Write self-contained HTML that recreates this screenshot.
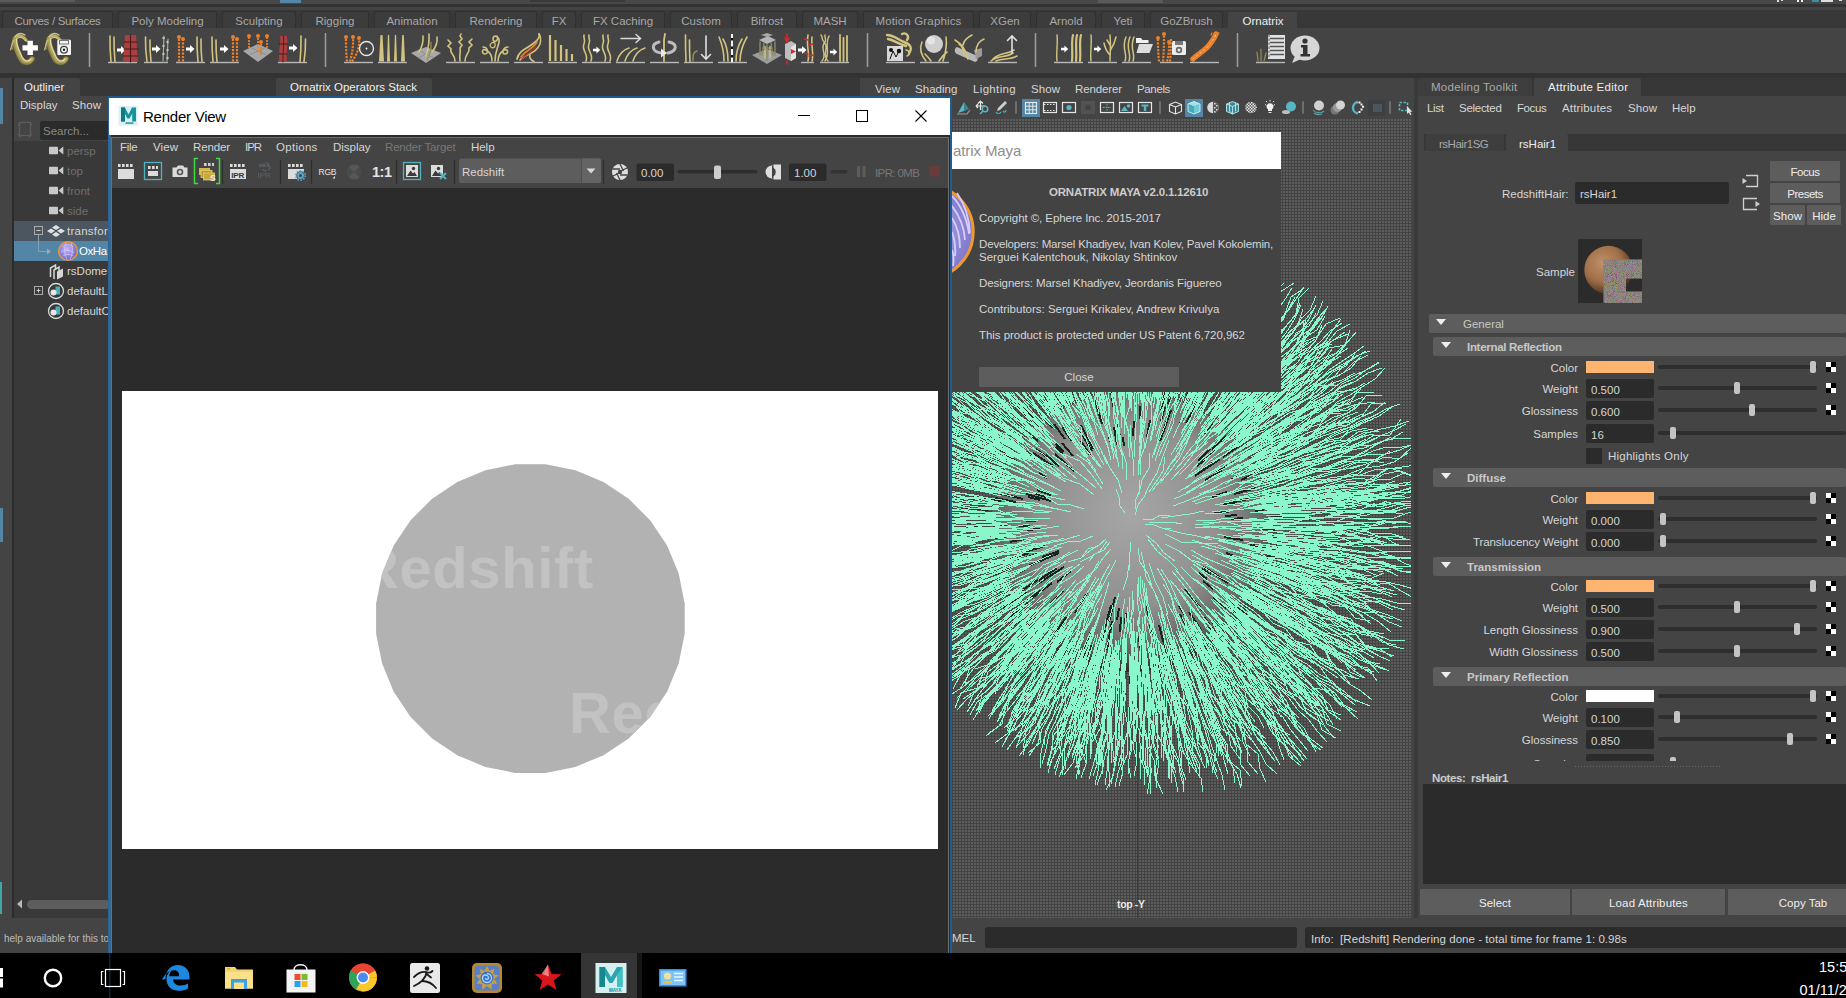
<!DOCTYPE html><html><head><meta charset="utf-8"><title>Maya</title><style>
*{box-sizing:border-box;margin:0;padding:0}
html,body{width:1846px;height:998px;overflow:hidden;background:#444;}
body{font-family:"Liberation Sans",sans-serif;font-size:12px;color:#ddd;position:relative}
.a{position:absolute}
.t{position:absolute;white-space:pre;line-height:14px;font-size:11.5px;color:#d6d6d6}
.dim{color:#9a9a9a}
.tab{position:absolute;background:#393939;border-radius:2px 2px 0 0;height:20px}
.fld{position:absolute;background:#2b2b2b;border-radius:2px;height:20px}
.sl{position:absolute;height:4px;background:#2e2e2e;border-radius:2px}
.kn{position:absolute;width:6px;height:12px;background:#c4c4c4;border-radius:2px}
.sec{position:absolute;background:#5d5d5d;height:19px;border-radius:2px}
.btn{position:absolute;background:#5d5d5d;border-radius:1px}
.chk{position:absolute;width:10px;height:10px;background:#fff}
.chk:before,.chk:after{content:"";position:absolute;width:5px;height:5px;background:#000}
.chk:before{left:5px;top:0}.chk:after{left:0;top:5px}
</style></head><body>
<div class="a" style="left:0px;top:0px;width:1846px;height:4px;background:#484848;"></div>
<div class="a" style="left:0px;top:4px;width:1846px;height:3px;background:#333;"></div>
<div class="a" style="left:0px;top:7px;width:1846px;height:3px;background:#444;"></div>
<div class="a" style="left:0px;top:10px;width:1846px;height:18px;background:#383838;"></div>
<div class="a" style="left:1777px;top:0px;width:2px;height:2px;background:#ddd;"></div>
<div class="a" style="left:1781px;top:0px;width:2px;height:1px;background:#ddd;"></div>
<div class="a" style="left:1797px;top:0px;width:2px;height:2px;background:#eee;"></div>
<div class="a" style="left:1801px;top:0px;width:2px;height:2px;background:#eee;"></div>
<div class="a" style="left:1812px;top:0px;width:7px;height:2px;background:#3f8ea0;"></div>
<div class="a" style="left:1821px;top:0px;width:12px;height:2px;background:#ddd;"></div>
<div class="a" style="left:1839px;top:0px;width:3px;height:1px;background:#ddd;"></div>
<div class="a" style="left:0px;top:0px;width:75px;height:2px;background:#5a5a5a;"></div>
<div class="a" style="left:280px;top:0px;width:21px;height:3px;background:#5285a6;"></div>
<div class="a" style="left:530px;top:0px;width:95px;height:2px;background:#3a3a3a;"></div>
<div class="a" style="left:1098px;top:0px;width:65px;height:3px;background:#5a5a5a;"></div>
<div class="tab" style="left:3px;top:12px;width:109px;height:16px;background:#3c3c3c;box-shadow:0 0 0 1px #303030"></div>
<div class="t dim" style="left:3px;top:14px;width:109px;text-align:center;color:#a8a8a8;letter-spacing:-0.32px">Curves / Surfaces</div>
<div class="tab" style="left:119px;top:12px;width:97px;height:16px;background:#3c3c3c;box-shadow:0 0 0 1px #303030"></div>
<div class="t dim" style="left:119px;top:14px;width:97px;text-align:center;color:#a8a8a8">Poly Modeling</div>
<div class="tab" style="left:223px;top:12px;width:72px;height:16px;background:#3c3c3c;box-shadow:0 0 0 1px #303030"></div>
<div class="t dim" style="left:223px;top:14px;width:72px;text-align:center;color:#a8a8a8">Sculpting</div>
<div class="tab" style="left:302px;top:12px;width:66px;height:16px;background:#3c3c3c;box-shadow:0 0 0 1px #303030"></div>
<div class="t dim" style="left:302px;top:14px;width:66px;text-align:center;color:#a8a8a8">Rigging</div>
<div class="tab" style="left:375px;top:12px;width:74px;height:16px;background:#3c3c3c;box-shadow:0 0 0 1px #303030"></div>
<div class="t dim" style="left:375px;top:14px;width:74px;text-align:center;color:#a8a8a8">Animation</div>
<div class="tab" style="left:456px;top:12px;width:80px;height:16px;background:#3c3c3c;box-shadow:0 0 0 1px #303030"></div>
<div class="t dim" style="left:456px;top:14px;width:80px;text-align:center;color:#a8a8a8">Rendering</div>
<div class="tab" style="left:543px;top:12px;width:32px;height:16px;background:#3c3c3c;box-shadow:0 0 0 1px #303030"></div>
<div class="t dim" style="left:543px;top:14px;width:32px;text-align:center;color:#a8a8a8">FX</div>
<div class="tab" style="left:582px;top:12px;width:82px;height:16px;background:#3c3c3c;box-shadow:0 0 0 1px #303030"></div>
<div class="t dim" style="left:582px;top:14px;width:82px;text-align:center;color:#a8a8a8">FX Caching</div>
<div class="tab" style="left:671px;top:12px;width:60px;height:16px;background:#3c3c3c;box-shadow:0 0 0 1px #303030"></div>
<div class="t dim" style="left:671px;top:14px;width:60px;text-align:center;color:#a8a8a8">Custom</div>
<div class="tab" style="left:738px;top:12px;width:58px;height:16px;background:#3c3c3c;box-shadow:0 0 0 1px #303030"></div>
<div class="t dim" style="left:738px;top:14px;width:58px;text-align:center;color:#a8a8a8">Bifrost</div>
<div class="tab" style="left:803px;top:12px;width:54px;height:16px;background:#3c3c3c;box-shadow:0 0 0 1px #303030"></div>
<div class="t dim" style="left:803px;top:14px;width:54px;text-align:center;color:#a8a8a8">MASH</div>
<div class="tab" style="left:864px;top:12px;width:109px;height:16px;background:#3c3c3c;box-shadow:0 0 0 1px #303030"></div>
<div class="t dim" style="left:864px;top:14px;width:109px;text-align:center;color:#a8a8a8;letter-spacing:0.15px">Motion Graphics</div>
<div class="tab" style="left:980px;top:12px;width:50px;height:16px;background:#3c3c3c;box-shadow:0 0 0 1px #303030"></div>
<div class="t dim" style="left:980px;top:14px;width:50px;text-align:center;color:#a8a8a8">XGen</div>
<div class="tab" style="left:1037px;top:12px;width:58px;height:16px;background:#3c3c3c;box-shadow:0 0 0 1px #303030"></div>
<div class="t dim" style="left:1037px;top:14px;width:58px;text-align:center;color:#a8a8a8">Arnold</div>
<div class="tab" style="left:1102px;top:12px;width:42px;height:16px;background:#3c3c3c;box-shadow:0 0 0 1px #303030"></div>
<div class="t dim" style="left:1102px;top:14px;width:42px;text-align:center;color:#a8a8a8">Yeti</div>
<div class="tab" style="left:1151px;top:12px;width:71px;height:16px;background:#3c3c3c;box-shadow:0 0 0 1px #303030"></div>
<div class="t dim" style="left:1151px;top:14px;width:71px;text-align:center;color:#a8a8a8">GoZBrush</div>
<div class="tab" style="left:1228px;top:12px;width:69px;height:17px;background:#444"></div>
<div class="t " style="left:1229px;top:14px;width:68px;text-align:center;color:#eee">Ornatrix</div>
<div class="a" style="left:0px;top:28px;width:1846px;height:45px;background:#444;"></div>
<div class="a" style="left:0px;top:73px;width:1846px;height:5px;background:#323232;"></div>
<svg class="a" style="left:0;top:28px" width="1400" height="44" viewBox="0 28 1400 44"><g transform="translate(0,28)"><path d="M15 11C14 18 18 24 20 29C22 34 28 37 32 31" fill="none" stroke="#6f6a3a" stroke-width="5.8" stroke-linecap="round" /><path d="M15 11C14 18 18 24 20 29C22 34 28 37 32 31" fill="none" stroke="#b0a460" stroke-width="4.0" stroke-linecap="round" /><path d="M16.5 11C16 18 20 24 22 29C24 33 28 35 31 31" fill="none" stroke="#e6dc9c" stroke-width="1.3" stroke-linecap="round" /><path d="M13.5 12C13 18 16 24 18.5 29C20.5 34 25 37 29 35" fill="none" stroke="#8d8548" stroke-width="1.1" stroke-linecap="round" /><path d="M15 10C18 6.500 23 7 26.5 12.500" fill="none" stroke="#b9ad68" stroke-width="2.6" stroke-linecap="round" /><path d="M15 8.500C18 5 22 5 25 7" fill="none" stroke="#cfc584" stroke-width="1.4" stroke-linecap="round" /><path d="M17 10.500C20 8.500 23 9.500 25.5 13" fill="none" stroke="#e6dc9c" stroke-width="1.0" stroke-linecap="round" /><path d="M15 10C12 13 11.5 17 12 21" fill="none" stroke="#a89d5c" stroke-width="1.5" stroke-linecap="round" /><path d="M14 12C12 16 11 19 10.5 22" fill="none" stroke="#cfc584" stroke-width="1.0" stroke-linecap="round" /><path d="M22.500 17.300h5v-4.500h5.400v4.500h5v5.200h-5v4.500h-5.400v-4.500h-5z" fill="#fff" /><path d="M49 11C48 18 52 24 54 29C56 34 62 37 66 31" fill="none" stroke="#6f6a3a" stroke-width="5.8" stroke-linecap="round" /><path d="M49 11C48 18 52 24 54 29C56 34 62 37 66 31" fill="none" stroke="#b0a460" stroke-width="4.0" stroke-linecap="round" /><path d="M50.5 11C50 18 54 24 56 29C58 33 62 35 65 31" fill="none" stroke="#e6dc9c" stroke-width="1.3" stroke-linecap="round" /><path d="M47.5 12C47 18 50 24 52.5 29C54.5 34 59 37 63 35" fill="none" stroke="#8d8548" stroke-width="1.1" stroke-linecap="round" /><path d="M49 10C52 6.500 57 7 60.5 12.500" fill="none" stroke="#b9ad68" stroke-width="2.6" stroke-linecap="round" /><path d="M49 8.500C52 5 56 5 59 7" fill="none" stroke="#cfc584" stroke-width="1.4" stroke-linecap="round" /><path d="M51 10.500C54 8.500 57 9.500 59.5 13" fill="none" stroke="#e6dc9c" stroke-width="1.0" stroke-linecap="round" /><path d="M49 10C46 13 45.5 17 46 21" fill="none" stroke="#a89d5c" stroke-width="1.5" stroke-linecap="round" /><path d="M48 12C46 16 45 19 44.5 22" fill="none" stroke="#cfc584" stroke-width="1.0" stroke-linecap="round" /><rect x="57.300" y="11.700" width="13.700" height="15.200" rx="1" fill="#f4f4f4"/><rect x="59.500" y="12.500" width="9" height="3.500" fill="none" stroke="#666" stroke-width=".900"/><circle cx="64" cy="21.800" r="3.400" fill="none" stroke="#444" stroke-width="1.300"/><circle cx="64" cy="21.800" r="1.200" fill="#222"/><path d="M89.5 5V39" stroke="#9a9a9a" stroke-width="1.6"/><path d="M108 34.5H137" stroke="#b8b8b8" stroke-width="1.4"/><path d="M111 33.5Q109.8 20.75 110 8" fill="none" stroke="#d2c37e" stroke-width="1.6" stroke-linecap="round" /><path d="M115 33.5Q113.8 21.25 114 9" fill="none" stroke="#d2c37e" stroke-width="1.6" stroke-linecap="round" /><path d="M117 20.5h4.0v-2.5l4.5 4.0l-4.5 4.0v-2.5h-4.0z" fill="#fff" /><path d="M125 7h11l2 27h-15z" fill="#a9403f" /><path d="M124 14h13M124 21h14M123.5 28h14.5M130.5 7v27" fill="none" stroke="#4a1818" stroke-width="1.1" stroke-linecap="round" /><path d="M144 34.5H168" stroke="#b8b8b8" stroke-width="1.4"/><path d="M147 33.5Q145.2 21.25 145.5 9" fill="none" stroke="#d2c37e" stroke-width="1.6" stroke-linecap="round" /><path d="M151 33.5Q149.8 22.75 150 12" fill="none" stroke="#d2c37e" stroke-width="1.6" stroke-linecap="round" /><path d="M152 19.5h4.0v-2.5l4.5 4.0l-4.5 4.0v-2.5h-4.0z" fill="#fff" /><path d="M163 33L164 8M167 33L168 11" fill="none" stroke="#9cb39a" stroke-width="1.2" stroke-linecap="round" /><circle cx="163.5" cy="10" r="1.2" fill="#b8cdb6"/><circle cx="167.5" cy="14" r="1.2" fill="#b8cdb6"/><circle cx="163.5" cy="18" r="1.2" fill="#b8cdb6"/><circle cx="167.5" cy="22" r="1.2" fill="#b8cdb6"/><circle cx="163.5" cy="26" r="1.2" fill="#b8cdb6"/><circle cx="167.5" cy="30" r="1.2" fill="#b8cdb6"/><path d="M176 34.5H205" stroke="#b8b8b8" stroke-width="1.4"/><path d="M179 33.5Q179.0 21.25 179 9" fill="none" stroke="#e8802c" stroke-width="2.2"  stroke-dasharray="2.2 1.2" stroke-linecap="butt"/><circle cx="179" cy="9" r="2" fill="#e8802c"/><path d="M183 33.5Q183.0 22.25 183 11" fill="none" stroke="#e8802c" stroke-width="2.2"  stroke-dasharray="2.2 1.2" stroke-linecap="butt"/><circle cx="183" cy="11" r="2" fill="#e8802c"/><path d="M186 19.5h4.0v-2.5l4.5 4.0l-4.5 4.0v-2.5h-4.0z" fill="#fff" /><path d="M198 33.5Q196.8 21.25 197 9" fill="none" stroke="#d2c37e" stroke-width="1.6" stroke-linecap="round" /><path d="M202 33.5Q200.8 22.25 201 11" fill="none" stroke="#d2c37e" stroke-width="1.6" stroke-linecap="round" /><path d="M210 34.5H239" stroke="#b8b8b8" stroke-width="1.4"/><path d="M213 33.5Q211.8 21.25 212 9" fill="none" stroke="#d2c37e" stroke-width="1.6" stroke-linecap="round" /><path d="M217 33.5Q215.8 22.75 216 12" fill="none" stroke="#d2c37e" stroke-width="1.6" stroke-linecap="round" /><path d="M220 19.5h4.0v-2.5l4.5 4.0l-4.5 4.0v-2.5h-4.0z" fill="#fff" /><path d="M233 33.5Q233.0 21.25 233 9" fill="none" stroke="#e8802c" stroke-width="2.2"  stroke-dasharray="2.2 1.2" stroke-linecap="butt"/><circle cx="233" cy="9" r="2" fill="#e8802c"/><path d="M237 33.5Q237.0 22.25 237 11" fill="none" stroke="#e8802c" stroke-width="2.2"  stroke-dasharray="2.2 1.2" stroke-linecap="butt"/><circle cx="237" cy="11" r="2" fill="#e8802c"/><path d="M243 23l15 -7l15 7l-15 11z" fill="#a6a6a6" /><path d="M250.5 19.5l15 7M265.5 19.5l-15 7" fill="none" stroke="#888" stroke-width="0.8" stroke-linecap="round" /><path d="M249 20V8" fill="none" stroke="#e8802c" stroke-width="1.8"  stroke-dasharray="2 1" stroke-linecap="butt"/><circle cx="249" cy="8" r="2" fill="#e8802c"/><path d="M258 24V8" fill="none" stroke="#e8802c" stroke-width="1.8"  stroke-dasharray="2 1" stroke-linecap="butt"/><circle cx="258" cy="8" r="2" fill="#e8802c"/><path d="M267 20V8" fill="none" stroke="#e8802c" stroke-width="1.8"  stroke-dasharray="2 1" stroke-linecap="butt"/><circle cx="267" cy="8" r="2" fill="#e8802c"/><path d="M261 27V14" fill="none" stroke="#e8802c" stroke-width="1.8"  stroke-dasharray="2 1" stroke-linecap="butt"/><circle cx="261" cy="14" r="2" fill="#e8802c"/><path d="M278 34.5H307" stroke="#b8b8b8" stroke-width="1.4"/><path d="M280 8h7c1 8 -1 17 0 26h-8c-1 -9 2 -18 1 -26z" fill="#a9403f" /><path d="M279 16h8.5M279 26h8" fill="none" stroke="#4a1818" stroke-width="1.1" stroke-linecap="round" /><path d="M283.5 8c1 8 -1 17 -0.5 26" fill="none" stroke="#4a1818" stroke-width="0.9" stroke-linecap="round" /><path d="M289 18.5h4.0v-2.5l4.5 4.0l-4.5 4.0v-2.5h-4.0z" fill="#fff" /><path d="M300 33.5Q301.2 20.75 301 8" fill="none" stroke="#d2c37e" stroke-width="1.6" stroke-linecap="round" /><path d="M304 33.5Q305.8 22.25 305.5 11" fill="none" stroke="#d2c37e" stroke-width="1.6" stroke-linecap="round" /><path d="M325.5 5V39" stroke="#9a9a9a" stroke-width="1.6"/><path d="M344 34.5H373" stroke="#b8b8b8" stroke-width="1.4"/><path d="M347 33.5Q345.8 21.25 346 9" fill="none" stroke="#e8802c" stroke-width="2.2"  stroke-dasharray="2.2 1.2" stroke-linecap="butt"/><circle cx="346" cy="9" r="2" fill="#e8802c"/><path d="M350 33.5Q353.6 21.25 353 9" fill="none" stroke="#e8802c" stroke-width="2.2"  stroke-dasharray="2.2 1.2" stroke-linecap="butt"/><circle cx="353" cy="9" r="2" fill="#e8802c"/><path d="M352 33.5Q360.4 21.75 359 10" fill="none" stroke="#e8802c" stroke-width="2.2"  stroke-dasharray="2.2 1.2" stroke-linecap="butt"/><circle cx="359" cy="10" r="2" fill="#e8802c"/><circle cx="366.5" cy="20.5" r="7" fill="none" stroke="#e6e6e6" stroke-width="1.4"/><circle cx="366.5" cy="20.5" r="0.9" fill="#fff"/><path d="M378 34.5H407" stroke="#b8b8b8" stroke-width="1.4"/><path d="M379 33.5L380.5 7h2.0L384 33.5z" fill="#d2c37e" /><path d="M387 33.5L387.9 7h1.2000000000000002L390 33.5z" fill="#d2c37e" /><path d="M394 33.5L394.9 7h1.2000000000000002L397 33.5z" fill="#d2c37e" /><path d="M401 33.5L402.2 7h1.6L405 33.5z" fill="#d2c37e" /><path d="M411 25l15 -6l15 6l-15 10z" fill="#a8a8a8" /><path d="M418.5 22l15 8M433.5 22l-15 8" fill="none" stroke="#888" stroke-width="0.8" stroke-linecap="round" /><path d="M419 24Q423.8 16.0 423 8" fill="none" stroke="#d2c37e" stroke-width="1.6" stroke-linecap="round" /><path d="M426 28Q429.6 17.0 429 6" fill="none" stroke="#d2c37e" stroke-width="1.6" stroke-linecap="round" /><path d="M432 24Q438.0 16.5 437 9" fill="none" stroke="#d2c37e" stroke-width="1.6" stroke-linecap="round" /><path d="M427 32Q431.8 23.0 431 14" fill="none" stroke="#9a8f58" stroke-width="1.2" stroke-linecap="round" /><path d="M446 34.5H475" stroke="#b8b8b8" stroke-width="1.4"/><path d="M455 33C455 26 449 25 451 21l-3 -3l3 -3l-3 -3" fill="none" stroke="#d2c37e" stroke-width="1.6" stroke-linecap="round" /><path d="M460 33C459 26 461 24 460 20l2 -3l-3 -3l3 -3l-2 -3l1 -2" fill="none" stroke="#d2c37e" stroke-width="1.6" stroke-linecap="round" /><path d="M465 33C465 26 470 25 469 20l3 -3l-3 -3l3 -3" fill="none" stroke="#d2c37e" stroke-width="1.6" stroke-linecap="round" /><path d="M480 34.5H509" stroke="#b8b8b8" stroke-width="1.4"/><path d="M495 33C495 24 498 20 499 14C500 8 493 6 493 11C493 15 499 14 497 8" fill="none" stroke="#d2c37e" stroke-width="1.6" stroke-linecap="round" /><path d="M492 33C492 27 490 24 486 22C482 20 481 26 485 26C489 26 488 19 483 19" fill="none" stroke="#d2c37e" stroke-width="1.6" stroke-linecap="round" /><path d="M498 33C498 27 501 24 504 22C508 20 509 26 505 26C501 26 503 19 508 19" fill="none" stroke="#d2c37e" stroke-width="1.6" stroke-linecap="round" /><path d="M490 17c2 -4 6 -3 5 1c-1 3 -5 2 -5 -1" fill="none" stroke="#d2c37e" stroke-width="1.3" stroke-linecap="round" /><path d="M514 34.5H543" stroke="#b8b8b8" stroke-width="1.4"/><path d="M517 31C519 22 528 20 534 15C539 11 540 8 539 6" fill="none" stroke="#d2c37e" stroke-width="1.8" stroke-linecap="round" /><path d="M520 32C526 26 536 26 540 16C541 12 541 9 539 6" fill="none" stroke="#d2c37e" stroke-width="1.6" stroke-linecap="round" /><path d="M521 29C526 22 533 21 537 14" fill="none" stroke="#e8802c" stroke-width="1.6" stroke-linecap="round" /><path d="M522 31C527 26 532 24 536 19" fill="none" stroke="#c0392b" stroke-width="1.2" stroke-linecap="round" /><path d="M530 27C529 30 531 32 534 33.5" fill="none" stroke="#d2c37e" stroke-width="1.6" stroke-linecap="round" /><path d="M548 34.5H577" stroke="#b8b8b8" stroke-width="1.4"/><path d="M550.0 33V7" fill="none" stroke="#d2c37e" stroke-width="2.2"  stroke-linecap="butt"/><path d="M555.5 33V12" fill="none" stroke="#d2c37e" stroke-width="2.2"  stroke-linecap="butt"/><path d="M561.0 33V17" fill="none" stroke="#d2c37e" stroke-width="2.2"  stroke-linecap="butt"/><path d="M566.5 33V21" fill="none" stroke="#d2c37e" stroke-width="2.2"  stroke-linecap="butt"/><path d="M572.0 33V26" fill="none" stroke="#d2c37e" stroke-width="2.2"  stroke-linecap="butt"/><path d="M582 34.5H611" stroke="#b8b8b8" stroke-width="1.4"/><path d="M586 33C589 26 581 22 584 16C586 12 583 10 584 7" fill="none" stroke="#d2c37e" stroke-width="1.6" stroke-linecap="round" /><path d="M591 33C594 26 586 22 589 16C591 12 588 10 589 7" fill="none" stroke="#d2c37e" stroke-width="1.6" stroke-linecap="round" /><path d="M605 33C608 26 600 22 603 16C605 12 602 10 603 7" fill="none" stroke="#d2c37e" stroke-width="1.6" stroke-linecap="round" /><path d="M610 33C613 26 605 22 608 16C610 12 607 10 608 7" fill="none" stroke="#d2c37e" stroke-width="1.6" stroke-linecap="round" /><path d="M593 20.725h3.4v-2.125l3.8249999999999997 3.4l-3.8249999999999997 3.4v-2.125h-3.4z" fill="#fff" /><path d="M616 34.5H645" stroke="#b8b8b8" stroke-width="1.4"/><path d="M621 10.5H640M636 6.5l4.5 4l-4.5 4" fill="none" stroke="#d8d8d8" stroke-width="1.5" stroke-linecap="round" /><path d="M617 33C619 26 623 22 629 20" fill="none" stroke="#d2c37e" stroke-width="1.6" stroke-linecap="round" /><path d="M625 33C627 26 631 22 637 20" fill="none" stroke="#d2c37e" stroke-width="1.6" stroke-linecap="round" /><path d="M633 33C635 26 639 22 645 20" fill="none" stroke="#d2c37e" stroke-width="1.6" stroke-linecap="round" /><path d="M650 34.5H679" stroke="#b8b8b8" stroke-width="1.4"/><path d="M664 33V12M664 12L665 6" fill="none" stroke="#d2c37e" stroke-width="1.8" stroke-linecap="round" /><path d="M659 14C651 16 651 24 662 25M669 14C678 16 677 23 668 25" fill="none" stroke="#bdbdbd" stroke-width="3" stroke-linecap="round" /><path d="M661 20.5l6 4.5l-6 4.5z" fill="#e8e8e8" /><path d="M684 34.5H713" stroke="#b8b8b8" stroke-width="1.4"/><path d="M686 33.5Q685.4 20.25 685.5 7" fill="none" stroke="#d2c37e" stroke-width="1.6" stroke-linecap="round" /><path d="M690 33.5Q689.4 22.75 689.5 12" fill="none" stroke="#d2c37e" stroke-width="1.6" stroke-linecap="round" /><path d="M693 33C693 27 693 24 697 23" fill="none" stroke="#9a8f58" stroke-width="1.4" stroke-linecap="round" /><path d="M706 8V31M701.5 26.5l4.5 4.5l4.5 -4.5" fill="none" stroke="#e0e0e0" stroke-width="1.6" stroke-linecap="round" /><path d="M718 34.5H747" stroke="#b8b8b8" stroke-width="1.4"/><path d="M724 33C724 24 722 16 719 9" fill="none" stroke="#d2c37e" stroke-width="1.6" stroke-linecap="round" /><path d="M728 33C728 24 726 16 723 11" fill="none" stroke="#d2c37e" stroke-width="1.6" stroke-linecap="round" /><path d="M740 33C740 24 743 16 747 9" fill="none" stroke="#d2c37e" stroke-width="1.6" stroke-linecap="round" /><path d="M736 33C736 24 739 16 742 11" fill="none" stroke="#d2c37e" stroke-width="1.6" stroke-linecap="round" /><path d="M732 6V34" fill="none" stroke="#f4f4f4" stroke-width="2"  stroke-linecap="butt"/><path d="M732 10V34" fill="none" stroke="#111" stroke-width="2"  stroke-dasharray="2.5 6" stroke-linecap="butt"/><path d="M752 27l15 -6l15 6l-15 9z" fill="#9d9d9d" /><path d="M759 12l9 -4l8 4l-9 4z" fill="#b5b5b5" /><path d="M761 7l6 -2l6 2l-6 2z" fill="#a8a8a8" /><path d="M760 14V27M775 14V27M767 17V32M763 20h9M764 15l-2 12M771 15l2 12" fill="none" stroke="#8a8a6a" stroke-width="1.4" stroke-linecap="round" /><path d="M765 18V30M770 18V30" fill="none" stroke="#d2c37e" stroke-width="1.2" stroke-linecap="round" /><path d="M785 16l6 -3l5 3v14l-5 3l-6 -3z" fill="#bdbdbd" /><path d="M791 19l5 -3v14l-5 3z" fill="#e4e4e4" /><path d="M787 6V14M785 10l2 4l2 -4M787 36V33" fill="none" stroke="#d8262c" stroke-width="1.6" stroke-linecap="round" /><path d="M791 21l5 2.5l-5 2.5z" fill="#d8262c" /><path d="M798 20.5h4.0v-2.5l4.5 4.0l-4.5 4.0v-2.5h-4.0z" fill="#fff" /><path d="M801 34.5H814" stroke="#b8b8b8" stroke-width="1.4"/><path d="M808 33C810 26 806 18 808 7M812 33C814 26 811 18 812 9" fill="none" stroke="#d2c37e" stroke-width="1.6" stroke-linecap="round" /><path d="M804 11l4 1M809 17l4 -1M809 28l4 -1M805 25l3 1" fill="none" stroke="#d8262c" stroke-width="1.4" stroke-linecap="round" /><path d="M820 34.5H849" stroke="#b8b8b8" stroke-width="1.4"/><path d="M822 33C828 26 819 20 825 14C827 11 824 9 825 7M828 33C821 26 830 20 824 14C821 11 823 9 821 7M825 33C831 24 824 18 829 8" fill="none" stroke="#d2c37e" stroke-width="1.4" stroke-linecap="round" /><path d="M830 22.725h3.4v-2.125l3.8249999999999997 3.4l-3.8249999999999997 3.4v-2.125h-3.4z" fill="#fff" /><path d="M840 33V7" fill="none" stroke="#d2c37e" stroke-width="1.8" stroke-linecap="round" /><path d="M843.5 33V10" fill="none" stroke="#d2c37e" stroke-width="1.8" stroke-linecap="round" /><path d="M847 33V8" fill="none" stroke="#d2c37e" stroke-width="1.8" stroke-linecap="round" /><path d="M867.5 5V39" stroke="#9a9a9a" stroke-width="1.6"/><path d="M886 34.5H915" stroke="#b8b8b8" stroke-width="1.4"/><path d="M887 7C894 7 898 12 904 14C910 16 913 20 909 25M888 11C894 12 898 16 906 18M902 6C906 4 910 8 907 12" fill="none" stroke="#d2c37e" stroke-width="2.4" stroke-linecap="round" /><path d="M906 22c4 1 5 4 1 6" fill="none" stroke="#d2c37e" stroke-width="1.6" stroke-linecap="round" /><rect x="887" y="18" width="16" height="15" fill="#d8d8d8"/><circle cx="891" cy="22" r="2" fill="#111"/><circle cx="899" cy="23" r="2.2" fill="#111"/><path d="M890 31l3 -8l3 6l3 -6" fill="none" stroke="#111" stroke-width="1" stroke-linecap="round" /><path d="M920 34.5H949" stroke="#b8b8b8" stroke-width="1.4"/><path d="M926 33C921 27 919 21 922 14M931 33C929 30 927 28 925 26M939 33C941 30 943 27 947 24M943 33C946 24 947 16 946 9" fill="none" stroke="#d2c37e" stroke-width="1.6" stroke-linecap="round" /><circle cx="934" cy="16" r="9" fill="#cfcfcf"/><circle cx="931" cy="12.5" r="4" fill="#ececec" opacity="0.7"/><path d="M957 19l18 8c3 1 4 6 0 7l-18 -8c-3 -1 -3 -6 0 -7z" fill="#b9b9b9" /><path d="M974 22l8 -2v8l-6 3z" fill="#9a9a9a" /><path d="M955 12C962 16 966 22 968 31M963 17C964 12 968 9 972 7M976 24C976 18 979 13 984 11M964 28C964 22 962 18 959 16" fill="none" stroke="#d2c37e" stroke-width="1.6" stroke-linecap="round" /><path d="M988 34.5H1017" stroke="#b8b8b8" stroke-width="1.4"/><path d="M991 33C998 27 1006 30 1013 25M993 31C1000 24 1006 27 1014 22M996 33C1003 30 1010 32 1017 28" fill="none" stroke="#d2c37e" stroke-width="1.6" stroke-linecap="round" /><path d="M1012 25V8M1007.5 12.5l4.5 -4.5l4.5 4.5" fill="none" stroke="#e0e0e0" stroke-width="1.6" stroke-linecap="round" /><path d="M1035.5 5V39" stroke="#9a9a9a" stroke-width="1.6"/><path d="M1054 34.5H1083" stroke="#b8b8b8" stroke-width="1.4"/><path d="M1057 33C1056 24 1058 16 1057 7" fill="none" stroke="#d2c37e" stroke-width="1.4" stroke-linecap="round" /><path d="M1061 19.725h3.4v-2.125l3.8249999999999997 3.4l-3.8249999999999997 3.4v-2.125h-3.4z" fill="#fff" /><path d="M1072 33C1073 24 1071 14 1073 7" fill="none" stroke="#d2c37e" stroke-width="2.2" stroke-linecap="round" /><path d="M1076 33C1077 24 1075 14 1077 7" fill="none" stroke="#d2c37e" stroke-width="2.2" stroke-linecap="round" /><path d="M1080 33C1081 24 1079 14 1081 7" fill="none" stroke="#d2c37e" stroke-width="2.2" stroke-linecap="round" /><path d="M1088 34.5H1117" stroke="#b8b8b8" stroke-width="1.4"/><path d="M1091 33C1090 24 1092 16 1091 7" fill="none" stroke="#d2c37e" stroke-width="1.4" stroke-linecap="round" /><path d="M1094 19.725h3.4v-2.125l3.8249999999999997 3.4l-3.8249999999999997 3.4v-2.125h-3.4z" fill="#fff" /><path d="M1110 33C1110 26 1111 18 1110 7M1110 27C1107 24 1105 20 1104 15M1110.5 22C1113 18 1115 14 1116 9M1110 17l-3 -5" fill="none" stroke="#d2c37e" stroke-width="1.5" stroke-linecap="round" /><path d="M1122 34.5H1151" stroke="#b8b8b8" stroke-width="1.4"/><path d="M1125 33C1128 26 1121 20 1126 9" fill="none" stroke="#d2c37e" stroke-width="1.5" stroke-linecap="round" /><path d="M1129 33C1132 26 1125 20 1130 9" fill="none" stroke="#d2c37e" stroke-width="1.5" stroke-linecap="round" /><path d="M1133 33C1136 26 1129 20 1134 9" fill="none" stroke="#d2c37e" stroke-width="1.5" stroke-linecap="round" /><path d="M1136 10h5l1.5 2h6v3h-12.5z" fill="#f0f0f0" /><path d="M1139 16h14l-3.5 9h-13z" fill="#dcdcdc" /><path d="M1160 34.5H1183" stroke="#b8b8b8" stroke-width="1.4"/><path d="M1159 33.5Q1157.8 21.75 1158 10" fill="none" stroke="#e8802c" stroke-width="2.2"  stroke-dasharray="2.2 1.2" stroke-linecap="butt"/><circle cx="1158" cy="10" r="2" fill="#e8802c"/><path d="M1163 33.5Q1164.2 19.75 1164 6" fill="none" stroke="#e8802c" stroke-width="2.2"  stroke-dasharray="2.2 1.2" stroke-linecap="butt"/><circle cx="1164" cy="6" r="2" fill="#e8802c"/><path d="M1167 33.5Q1169.4 23.75 1169 14" fill="none" stroke="#e8802c" stroke-width="2.2"  stroke-dasharray="2.2 1.2" stroke-linecap="butt"/><circle cx="1169" cy="14" r="2" fill="#e8802c"/><path d="M1170 33.5Q1171.2 21.75 1171 10" fill="none" stroke="#e8802c" stroke-width="2.2"  stroke-dasharray="2.2 1.2" stroke-linecap="butt"/><rect x="1172" y="13" width="14" height="14" rx="1.5" fill="#ececec"/><rect x="1175" y="13" width="8" height="4" fill="#777"/><circle cx="1179" cy="22" r="3.2" fill="#666"/><circle cx="1179" cy="22" r="1.5" fill="#eee"/><path d="M1190 34.5H1219" stroke="#b8b8b8" stroke-width="1.4"/><path d="M1193 31C1198 26 1206 22 1210 16C1213 12 1215 9 1216 6" fill="none" stroke="#e8802c" stroke-width="5.5" stroke-linecap="round" /><path d="M1193 31C1198 26 1206 22 1210 16C1213 12 1215 9 1216 6" fill="none" stroke="#f4c9a4" stroke-width="1.0" stroke-linecap="round" stroke-dasharray="1.5 3"/><path d="M1211 7l1 -2M1217 7l2 -2" fill="none" stroke="#e8802c" stroke-width="1.2" stroke-linecap="round" /><path d="M1237.5 5V39" stroke="#9a9a9a" stroke-width="1.6"/><path d="M1256 34.5H1285" stroke="#b8b8b8" stroke-width="1.4"/><path d="M1258 33l-1 -9M1261 33l0 -12M1264 33l2 -8" fill="none" stroke="#9a8f58" stroke-width="1.2" stroke-linecap="round" /><rect x="1268" y="7" width="17" height="24" fill="#e2e2e2"/><path d="M1270 10.5h14M1270 14.5h14M1270 18.5h14M1270 22.5h14M1270 26.5h14" fill="none" stroke="#555" stroke-width="1.6"  stroke-linecap="butt"/><path d="M1269 7V31" fill="none" stroke="#888" stroke-width="1.5" stroke-linecap="round" stroke-dasharray="1.5 2.5"/><ellipse cx="1305" cy="20" rx="14.5" ry="12.5" fill="#d6d6d6"/><path d="M1295 28l-3 7l9 -4z" fill="#d6d6d6" /><circle cx="1305" cy="13" r="2.6" fill="#333"/><path d="M1301 17h6.5v9h2.5v2.5h-9.5v-2.5h2.5v-6.5h-2z" fill="#333" /></g></svg>
<div class="a" style="left:0px;top:78px;width:12px;height:850px;background:#444;"></div>
<div class="a" style="left:12px;top:78px;width:2px;height:850px;background:#2b2b2b;"></div>
<div class="a" style="left:14px;top:78px;width:96px;height:18px;background:#373737;"></div>
<div class="tab" style="left:14px;top:78px;width:66px;height:18px;background:#444"></div>
<div class="t " style="left:24px;top:80px;color:#eee">Outliner</div>
<div class="a" style="left:14px;top:96px;width:96px;height:822px;background:#444;"></div>
<div class="t " style="left:20px;top:98px;;letter-spacing:-0.03px">Display</div>
<div class="t " style="left:72px;top:98px;;letter-spacing:0.06px">Show</div>
<div class="fld" style="left:40px;top:121px;width:70px;height:19px"></div>
<div class="t dim" style="left:43px;top:124px;color:#888">Search...</div>
<div class="a" style="left:14px;top:141px;width:96px;height:779px;background:#393939;"></div>
<div class="t " style="left:67px;top:144px;color:#6f6f6f">persp</div>
<div class="t " style="left:67px;top:164px;color:#6f6f6f">top</div>
<div class="t " style="left:67px;top:184px;color:#6f6f6f">front</div>
<div class="t " style="left:67px;top:204px;color:#6f6f6f">side</div>
<div class="a" style="left:14px;top:221px;width:96px;height:20px;background:#4b5661;"></div>
<div class="t " style="left:67px;top:224px;;letter-spacing:0.25px">transfor</div>
<div class="a" style="left:14px;top:241px;width:96px;height:20px;background:#5285a6;"></div>
<div class="t " style="left:79px;top:244px;color:#fff;letter-spacing:-0.45px">OxHa</div>
<div class="t " style="left:67px;top:264px;">rsDomeL</div>
<div class="t " style="left:67px;top:284px;">defaultL</div>
<div class="t " style="left:67px;top:304px;">defaultO</div>
<svg class="a" style="left:0;top:78px" width="110" height="850" viewBox="0 78 110 850"><rect x="19.500" y="122.500" width="11" height="13" fill="none" stroke="#5c5c5c" stroke-width="1.200"/><path d="M18 125l3-3M32 125l-3-3M18 134l3 3M32 134l-3 3" stroke="#5c5c5c" stroke-width="1.500"/><rect x="49" y="146.7" width="9" height="7.600" rx=".800" fill="#c9c9c9"/><path d="M58.500 150.5l4.800-4v8z" fill="#c9c9c9"/><rect x="49" y="166.7" width="9" height="7.600" rx=".800" fill="#c9c9c9"/><path d="M58.500 170.5l4.800-4v8z" fill="#c9c9c9"/><rect x="49" y="186.7" width="9" height="7.600" rx=".800" fill="#c9c9c9"/><path d="M58.500 190.5l4.800-4v8z" fill="#c9c9c9"/><rect x="49" y="206.7" width="9" height="7.600" rx=".800" fill="#c9c9c9"/><path d="M58.500 210.5l4.800-4v8z" fill="#c9c9c9"/><rect x="34.500" y="226.500" width="8" height="8" fill="none" stroke="#aaa" stroke-width="1"/><path d="M36.500 230.500h4" stroke="#ccc" stroke-width="1"/><path d="M38.500 235v16.500h9" fill="none" stroke="#8aa0b0" stroke-width="1"/><path d="M47 248.500l4 3l-4 3z" fill="#9aa8b2"/><path d="M52 227.5l4-2.600l4 2.600l-4 2.600z" fill="#e0e0e0"/><path d="M47 231l4-2.600l4 2.600l-4 2.600z" fill="#e0e0e0"/><path d="M57 231l4-2.600l4 2.600l-4 2.600z" fill="#e0e0e0"/><path d="M52 234.5l4-2.600l4 2.600l-4 2.600z" fill="#e0e0e0"/><defs><radialGradient id="ob" cx=".45" cy=".4" r=".6"><stop offset="0" stop-color="#c9b6f2"/><stop offset=".6" stop-color="#8f86e0"/><stop offset="1" stop-color="#6b5fb8"/></radialGradient></defs><circle cx="68" cy="251" r="9.300" fill="url(#ob)" stroke="#e89a3c" stroke-width="1.500"/><path d="M62 247c3-3 8-3 11 0M61 252c4-3 9-2 13 1M63 256c3-2 7-2 10 0M66 243c-2 5-2 11 1 16M71 243c2 5 2 11-1 16" fill="none" stroke="#d9ccff" stroke-width=".900" opacity=".8"/><g fill="none" stroke="#d8d8d8" stroke-width="1.500"><path d="M50.500 277v-9l5-3v4"/><path d="M54 279v-9l5-3v4"/></g><path d="M57 279.500v-8l6-3v8z" fill="#d8d8d8"/><rect x="34.500" y="286.500" width="8" height="8" fill="none" stroke="#aaa" stroke-width="1"/><path d="M36.500 290.500h4M38.500 288.500v4" stroke="#ccc" stroke-width="1"/><circle cx="56" cy="291" r="7.500" fill="none" stroke="#d8d8d8" stroke-width="1.300"/><rect x="55.500" y="286.5" width="4.500" height="8" fill="#49b0ba"/><circle cx="53.500" cy="292.5" r="3" fill="#e6e6e6"/><circle cx="56" cy="311" r="7.500" fill="none" stroke="#d8d8d8" stroke-width="1.300"/><rect x="55.500" y="306.5" width="4.500" height="8" fill="#49b0ba"/><circle cx="53.500" cy="312.5" r="3" fill="#e6e6e6"/><rect x="0" y="88" width="3" height="36" fill="#5285a6"/><rect x="0" y="508" width="3" height="34" fill="#5285a6"/><rect x="0" y="882" width="2" height="32" fill="#3fa7a7"/><path d="M22 904l-5-4.500l5-4.500z" transform="translate(0,4.500)" fill="#b8b8b8"/><rect x="27" y="900" width="83" height="9" rx="4.500" fill="#5d5d5d"/><path d="M100 919.500h1M102.500 919.500h1M105 919.500h1" stroke="#777" stroke-width="1"/></svg>
<div class="a" style="left:110px;top:78px;width:750px;height:20px;background:#373737;"></div>
<div class="tab" style="left:276px;top:78px;width:156px;height:20px;background:#444"></div>
<div class="t " style="left:290px;top:80px;color:#eee;letter-spacing:-0.01px">Ornatrix Operators Stack</div>
<div class="a" style="left:862px;top:78px;width:552px;height:20px;background:#444;"></div>
<div class="t " style="left:875px;top:82px;;letter-spacing:0.12px">View</div>
<div class="t " style="left:915px;top:82px;;letter-spacing:0.04px">Shading</div>
<div class="t " style="left:973px;top:82px;;letter-spacing:0.34px">Lighting</div>
<div class="t " style="left:1031px;top:82px;;letter-spacing:0.06px">Show</div>
<div class="t " style="left:1075px;top:82px;;letter-spacing:-0.12px">Renderer</div>
<div class="t " style="left:1137px;top:82px;;letter-spacing:-0.36px">Panels</div>
<div class="a" style="left:862px;top:98px;width:552px;height:20px;background:#444;"></div>
<svg class="a" style="left:952px;top:98px" width="462" height="20" viewBox="952 98 462 20"><path d="M958 113l6-11v9z" fill="#56b6c2"/><path d="M957 114h10l3-4" fill="none" stroke="#9a9a9a" stroke-width="1.2"/><path d="M964 102v9l5-2z" fill="#3c8590"/><path d="M976 106h9M980.5 101v9M978 103.5l2.5-2.5l2.5 2.5M976 106l2-2M976 106l2 2" fill="none" stroke="#e6e6e6" stroke-width="1.2"/><circle cx="985" cy="109" r="2.8" fill="none" stroke="#56b6c2" stroke-width="1.5"/><path d="M983 111l-3 3" stroke="#56b6c2" stroke-width="1.6"/><path d="M1005 101l2 2l-7 7l-3 1l1-3z" fill="#cfcfcf"/><path d="M996 112c1 2 4 2 5 0M1003 111c1 2 3 1 3-1" fill="none" stroke="#56b6c2" stroke-width="1.2"/><rect x="1015" y="101" width="2" height="13" rx="1" fill="#6e6e6e"/><rect x="1022" y="99" width="18" height="18" fill="#5285a6"/><rect x="1025.5" y="102.5" width="11" height="11" fill="none" stroke="#e6e6e6" stroke-width="1.2"/><path d="M1029.2 102v12M1032.8 102v12M1025 106.2h12M1025 109.8h12" stroke="#e6e6e6" stroke-width="1"/><rect x="1043.5" y="102.5" width="13" height="10" fill="none" stroke="#e6e6e6" stroke-width="1.2"/><path d="M1044 104.5h12M1044 110.5h12" stroke="#e6e6e6" stroke-width="1" stroke-dasharray="1.5 1.5"/><rect x="1062.5" y="102.5" width="13" height="10" fill="none" stroke="#e6e6e6" stroke-width="1.2"/><circle cx="1069" cy="107.5" r="2.6" fill="#56b6c2"/><rect x="1081" y="101" width="14" height="13" fill="#525252"/><circle cx="1088" cy="107.5" r="3" fill="#444"/><rect x="1100.5" y="102.5" width="13" height="10" fill="none" stroke="#e6e6e6" stroke-width="1.2"/><path d="M1103 107.5h8M1107 104v7" stroke="#56b6c2" stroke-width="1" stroke-dasharray="1.5 1"/><rect x="1119.5" y="102.5" width="13" height="10" fill="none" stroke="#e6e6e6" stroke-width="1.2"/><path d="M1121 111l3.5-5l3.5 5z" fill="#56b6c2"/><circle cx="1128.5" cy="106" r="1.8" fill="#56b6c2"/><rect x="1138.5" y="102.5" width="13" height="10" fill="none" stroke="#e6e6e6" stroke-width="1.2"/><path d="M1141.5 104.5h7v2h-2.3v4.5h-2.4v-4.5h-2.3z" fill="#56b6c2"/><rect x="1159" y="101" width="2" height="13" rx="1" fill="#6e6e6e"/><path d="M1169.5 104.5l6-2.5l6 2.5v7l-6 2.5l-6-2.5zM1169.5 104.5l6 2.5l6-2.5M1175.500 107v7" fill="none" stroke="#e6e6e6" stroke-width="1.1"/><rect x="1185" y="99" width="18" height="18" fill="#5285a6"/><path d="M1188 104l6-2.5l6 2.5l-6 2.5z" fill="#9fe3ea"/><path d="M1188 104l6 2.500v7.500l-6-2.500z" fill="#4aa9b6"/><path d="M1200 104l-6 2.500v7.500l6-2.500z" fill="#6fcbd6"/><path d="M1188 104l6-2.5l6 2.5v7.500l-6 2.500l-6-2.500z" fill="none" stroke="#d8f4f7" stroke-width="0.9"/><circle cx="1213" cy="107.5" r="5.8" fill="#d9d9d9"/><path d="M1213 101.700a5.800 5.800 0 0 1 0 11.600z" fill="#555"/><path d="M1214 103h1.500v1.500h-1.500zM1216 105h1.500v1.500h-1.500zM1214 107h1.500v1.500h-1.500zM1216 109h1.500v1.500h-1.500zM1214 111h1.500v1.500h-1.500z" fill="#ddd"/><path d="M1226.500 104l6-2.500l6 2.500v7.500l-6 2.500l-6-2.500z" fill="#3e8b96"/><path d="M1226.500 104l6-2.500l6 2.500v7.500l-6 2.500l-6-2.500zM1226.500 104l6 2.500l6-2.500M1232.500 106.500v7.500M1229.500 102.800v8.500l3 2.400M1235.500 102.800v8.500" fill="none" stroke="#bfe9ee" stroke-width="0.9"/><defs><pattern id="ck" width="3" height="3" patternUnits="userSpaceOnUse"><rect width="3" height="3" fill="#555"/><rect width="1.5" height="1.5" fill="#eee"/><rect x="1.5" y="1.5" width="1.5" height="1.5" fill="#eee"/></pattern></defs><circle cx="1251" cy="107.5" r="5.8" fill="url(#ck)"/><path d="M1270 103.200a3.300 3.300 0 0 1 2 6v1.800h-4v-1.800a3.300 3.300 0 0 1 2-6z" fill="#f0f0f0"/><path d="M1268.500 112.500h3M1270 100v1.500M1265 104.500l1.400.8M1275 104.500l-1.400.8M1266 101l1 1.200M1274 101l-1 1.200" stroke="#e0e0e0" stroke-width="1"/><ellipse cx="1286" cy="112" rx="4" ry="2" fill="#bdbdbd"/><circle cx="1291" cy="106.500" r="5" fill="#56b6c2"/><rect x="1302" y="101" width="2" height="13" rx="1" fill="#6e6e6e"/><circle cx="1319" cy="105.500" r="5" fill="#cfcfcf"/><path d="M1313 110c2 3 8 4 11 1M1314 113c2 2 6 2 8 1" stroke="#5a9aa4" stroke-width="1.300" fill="none"/><circle cx="1335" cy="110" r="4.500" fill="#777"/><circle cx="1337.500" cy="107.500" r="4.500" fill="#999"/><circle cx="1340.500" cy="105" r="4.500" fill="#d4d4d4"/><path d="M1358 102a5.800 5.800 0 0 0 0 11.500" fill="none" stroke="#56b6c2" stroke-width="2.400"/><path d="M1358.500 101.500h2v2h-2zM1360.500 103.500h2v2h-2zM1362 105.800h2v2h-2zM1360.500 108.500h2v2h-2zM1358.500 111h2v2h-2z" fill="#f2f2f2"/><rect x="1368" y="100" width="17" height="16" fill="#3e3e3e"/><rect x="1373" y="104" width="9" height="8" fill="#4a5660"/><rect x="1389" y="101" width="2" height="13" rx="1" fill="#6e6e6e"/><rect x="1399.500" y="102.500" width="8" height="8" fill="none" stroke="#56b6c2" stroke-width="1.600" stroke-dasharray="2.500 1.500"/><path d="M1407 106v8l1.800-1.600l1.500 2.800l1.200-.6l-1.400-2.800h2.300z" fill="#e0e0e0"/></svg>
<div class="a" style="left:952px;top:118px;width:459px;height:801px;background:#5c5c5c;background-image:linear-gradient(#444 1px,transparent 1px),linear-gradient(90deg,#444 1px,transparent 1px);background-size:3px 3px"></div>
<svg class="a" style="left:952px;top:118px" width="459" height="801" viewBox="952 118 459 801" shape-rendering="crispEdges"><defs><radialGradient id="sg" cx="0.5" cy="0.44" r="0.6"><stop offset="0" stop-color="#a6a6a6"/><stop offset="0.55" stop-color="#909090"/><stop offset="0.8" stop-color="#666"/><stop offset="0.95" stop-color="#222"/><stop offset="1" stop-color="#111"/></radialGradient></defs><path d="M1137.5 700V918" stroke="#3c3c3c" stroke-width="1"/><circle cx="1130" cy="532" r="140" fill="url(#sg)"/><path d="M1148,383 1150,365M1036,625 1018,645M1018,462 1005,455M1009,477 1001,473M1159,625 1166,652M1033,418 1018,403M1133,436 1134,421M1085,653 1079,669M1212,497 1227,492M1189,612 1201,630M1087,593 1075,613M1201,472 1220,459M1026,569 1018,573M1241,480 1250,476M1057,568 1039,580M1191,635 1202,656M1073,456 1062,443M1092,451 1078,428M1066,617 1055,634M1051,501 1026,494M1232,602 1247,615M1147,437 1150,420M1225,516 1237,515M1180,423 1187,410M1052,583 1032,598M1005,480 983,473M1202,569 1211,575M1117,445 1114,427M1016,502 995,498M1130,662 1130,686M1151,386 1154,364M1161,421 1165,407M1011,568 993,575M1159,384 1162,365M1250,545 1277,551M1215,473 1236,461M1007,525 978,525M1036,422 1030,415M1231,519 1243,518M1274,546 1299,550M1086,393 1081,382M1197,466 1215,451M1150,625 1152,635M1027,592 1003,608M1053,466 1033,453M1001,501 973,497M1120,437 1118,423M1223,504 1248,499M1047,558 1028,566M1224,537 1243,540M1203,567 1213,573M1064,567 1039,583M1226,553 1234,556M1179,606 1185,615M1059,553 1038,562M1238,608 1245,614M1112,446 1109,437M1183,637 1188,649M1039,553 1017,561M1112,621 1107,650M1207,569 1228,583M1115,597 1109,622M1102,424 1095,400M1040,591 1023,604M1071,571 1057,582M1205,480 1222,471M1051,495 1037,490M1030,526 1019,526M1063,454 1056,447M1251,593 1270,604M1002,526 993,526M1038,580 1021,591M1213,597 1226,608M1214,513 1229,512M1223,505 1237,503M1074,394 1067,377M1011,536 993,538M1161,408 1168,382M1147,606 1148,616M1112,652 1111,660M1119,608 1117,620M1263,501 1282,498M1157,660 1161,678M1161,410 1164,399M1046,497 1034,493M1031,610 1011,628M1139,636 1140,648M1040,529 1027,530M1064,452 1056,444M1168,404 1172,391M1074,471 1055,454M1124,446 1123,437M1209,627 1218,640M1205,434 1214,423M1057,464 1046,455M988,510 965,508M1090,455 1081,441M1261,529 1275,530M1163,433 1171,410M1042,431 1034,422M1212,449 1226,436M1111,605 1105,628M1052,409 1046,401M1198,461 1210,449M1036,613 1027,622M1267,556 1277,558M1091,631 1083,653M1029,553 1008,560M1114,410 1111,392M1228,607 1237,615M1248,601 1264,612M1160,441 1168,417M1040,500 1028,497M1195,476 1215,461M1241,615 1253,626M1271,517 1294,516M1065,439 1054,424M1091,645 1087,659M1140,419 1140,406M1253,545 1267,548M1230,480 1240,476M1013,456 999,449M1059,551 1042,557M989,525 968,526M1187,395 1191,385M1223,457 1242,444M1126,613 1125,624M1036,426 1017,407M1047,478 1039,473M1213,623 1222,634M1072,441 1062,427M1121,617 1120,632M1023,499 998,493M1028,603 1008,619M1045,546 1025,552M1038,441 1028,433M1234,494 1256,488M1199,573 1207,579M1248,475 1263,469M1036,617 1025,629M1185,589 1203,611M1059,466 1036,449M1180,614 1190,634M1036,521 1026,521M1039,461 1027,452M1266,536 1295,539M1105,630 1100,648M1063,591 1047,607M1255,511 1264,510M1203,581 1213,589M1024,539 1010,542M1171,644 1177,662M1122,388 1120,370M1259,466 1279,457M1242,432 1254,422M1053,428 1046,421M1186,423 1200,398M1093,449 1081,425M1204,617 1218,637M1126,645 1125,664" fill="none" stroke="#14241e" stroke-width="2"/><path d="M1067,458 1053,448 1043,433 1034,417 1022,405M1242,443 1254,434 1266,424 1279,416 1291,407 1305,400 1318,391 1329,380 1343,373 1354,362 1368,355M1227,619 1237,630 1247,640 1259,649 1268,661 1280,670 1290,680 1302,688 1311,700 1323,708M1046,625 1036,636 1027,648 1017,659 1008,672 999,684 989,695 981,707 973,720M1266,501 1282,499 1297,495 1312,493 1326,485 1341,481 1357,478 1373,480 1386,468 1402,469M1061,614 1052,625 1042,636 1034,649 1022,659 1014,671 1004,682M1233,470 1246,462 1259,455 1272,449 1286,443 1297,433 1309,424 1323,420 1335,410 1346,401M1141,631 1143,646 1142,662 1147,677 1146,693 1146,708 1152,723M1127,480 1126,462 1120,445 1117,428M1203,522 1220,522 1236,521 1252,522 1269,522 1285,524M1061,637 1053,650 1043,662 1034,675 1025,687 1016,700 1006,712 999,726 986,736M1109,639 1105,652 1103,666 1101,680 1103,695 1097,708 1098,723 1092,736M1056,540 1042,543 1028,545 1014,550 1000,549M1199,450 1208,439 1220,431 1230,421 1238,409 1249,400 1259,390M1116,389 1113,374 1112,358 1112,343 1110,328 1109,312 1103,297 1103,282 1104,266M1054,415 1045,402 1034,390 1023,379 1013,367 1003,354 992,344 980,332 968,322M1009,549 995,551 982,558 968,560 955,564 941,568 928,574 914,573M1037,619 1027,629 1017,639 1006,648 996,658 987,669 976,678 967,688 957,698M1200,607 1210,619 1220,631 1226,645 1239,654 1247,667 1252,683 1260,696 1271,706M1012,577 996,582 982,588 968,597 955,606 937,607 925,619 911,627M1105,638 1102,653 1097,666 1094,680 1095,695 1089,708 1088,722 1080,735 1078,750M1136,653 1136,668 1137,682 1136,697 1137,712 1137,726 1144,741 1139,755 1145,770 1144,785M1065,633 1057,645 1050,658 1045,671 1038,683 1030,695 1021,706 1014,718 1009,732M1047,478 1033,472 1021,463 1006,460 993,453 982,442 965,444M1113,605 1109,621 1106,637 1103,653 1097,668 1091,684M1252,577 1267,582 1279,591 1292,599 1305,606 1319,611 1334,613 1345,626 1360,627 1372,638M1037,443 1024,434 1012,424 999,416 986,407 975,396 962,387 950,377 932,374M1015,576 1001,582 988,589 974,592 961,599 946,601 932,606 916,607M1007,480 993,476 978,471 964,466 949,465 935,458 920,455 904,457M1065,404 1059,391 1051,379 1043,367 1037,354 1026,344 1022,330 1010,320 1002,308 999,293 989,282M1155,655 1158,669 1159,684 1162,699 1164,713 1165,728 1164,743 1167,758M1031,611 1018,621 1004,630 993,642 979,651 966,661 951,669M1025,605 1013,613 1002,623 990,632 981,644 969,653 957,662 948,674 938,686M1000,551 986,554 972,557 958,561 945,565 931,568 917,572 903,575 890,579M997,537 982,538 968,539 953,540 939,538 925,542 909,538M1106,619 1103,635 1100,650 1097,666 1092,681 1093,698 1092,714M1004,548 989,552 973,554 957,557 941,563 926,569 910,569M1268,527 1283,528 1298,529 1313,528 1328,527 1343,525 1359,523 1374,526 1389,522 1404,523M1256,566 1270,570 1284,575 1298,579 1312,582 1326,585 1339,593 1354,592 1368,597 1382,599 1397,603 1412,603M1079,646 1072,660 1069,675 1064,689 1055,702 1049,716 1042,729 1038,743 1029,756M1229,608 1240,617 1251,626 1261,635 1271,645 1282,654 1290,666 1300,677 1311,685 1322,695 1328,710 1341,715M1172,646 1177,659 1181,673 1186,686 1189,700 1194,713 1199,726 1204,739 1209,753 1212,766 1218,779M1221,496 1236,490 1251,485 1265,480 1280,476 1296,474 1310,466 1324,458M1142,409 1143,394 1144,379 1145,364 1145,349 1144,333 1144,318 1144,303 1143,287M1242,531 1257,532 1273,531 1288,534 1303,532 1318,536 1334,534 1349,527M1020,571 1006,575 993,582 981,592 964,592 952,601 940,611M1267,503 1281,501 1296,499 1311,497 1326,496 1341,496 1356,494 1372,496 1386,492 1401,493 1416,492M1205,514 1222,513 1237,509 1253,504 1269,501 1285,496M1169,399 1175,386 1177,371 1180,357 1187,344 1192,331 1193,316 1200,303 1204,289 1205,274M1084,638 1077,651 1072,664 1066,677 1062,690 1057,704 1053,717 1046,730 1044,745M1049,467 1035,458 1022,449 1008,441 993,433 978,427 965,418M1134,421 1136,407 1136,393 1135,379 1138,365 1143,351 1139,337M1245,504 1259,501 1273,499 1288,497 1302,495 1316,492 1330,489 1344,485 1359,484 1373,481M1105,399 1101,384 1098,369 1095,354 1089,340 1087,325 1083,310 1076,296M1236,565 1250,571 1265,577 1279,584 1293,594 1309,596 1323,603 1336,614M1263,494 1277,491 1290,488 1304,485 1318,483 1332,480 1346,477 1360,475 1374,470 1388,469 1402,467 1417,465M1102,587 1094,602 1087,618 1081,634M1179,648 1184,662 1188,676 1193,690 1198,704 1203,719 1208,733 1212,747 1217,761 1222,775 1225,790M1240,604 1252,613 1263,622 1275,631 1288,639 1300,648 1312,657 1324,665 1337,673 1348,683 1361,691 1372,700M1221,602 1231,611 1242,621 1251,631 1261,642 1270,653 1280,662 1291,671 1300,682 1306,697 1318,706M1249,560 1264,564 1278,568 1292,573 1305,579 1320,581 1335,583 1348,590 1365,586 1379,591 1392,597M1263,536 1278,536 1293,538 1308,542 1323,542 1338,543 1353,543 1368,546 1382,551 1397,551 1413,552M1250,563 1263,569 1277,573 1291,578 1305,580 1318,585 1331,593 1345,597 1357,604 1371,610M1240,458 1253,450 1267,445 1279,437 1294,433 1308,428 1319,416 1333,412M1116,641 1116,656 1113,670 1114,685 1112,699 1107,713 1107,727 1112,743 1114,758M1181,635 1186,649 1195,662 1199,677 1203,691 1211,705 1222,717 1228,730 1231,746 1240,759M1051,610 1041,620 1033,632 1022,641 1012,651 1007,666 996,675 985,685M1024,519 1009,519 994,520 979,522 964,522 949,523 934,524M1244,465 1258,460 1271,454 1282,445 1295,439 1310,437 1321,427 1335,424 1350,422 1363,416 1376,410M1247,463 1260,456 1273,449 1286,442 1297,433 1310,427 1321,417 1334,409 1347,403 1358,392 1374,392M1121,652 1119,668 1118,684 1119,699 1117,715 1119,731 1119,747 1113,762M1220,625 1231,635 1238,647 1249,657 1258,668 1271,675 1279,687 1292,695 1300,707 1312,716 1323,725M1242,571 1257,576 1269,584 1282,592 1297,594 1309,605 1323,608 1337,615 1351,619 1361,634M1206,632 1216,643 1223,655 1233,665 1239,678 1246,690 1255,701 1267,710 1276,721 1282,733 1290,745 1301,755M1119,640 1116,655 1116,671 1111,686 1109,702 1111,718 1111,734 1108,749M1060,446 1049,436 1040,424 1030,412 1018,402 1004,395 999,378 983,372M1024,592 1011,601 997,608 985,618 971,625 957,634 942,639 928,647M1225,451 1237,441 1249,432 1261,422 1272,412 1284,403 1297,395 1309,385 1318,372 1328,360M1148,388 1150,374 1152,360 1154,346 1157,332 1161,319 1162,305 1165,291 1170,277 1175,264 1178,250M1175,415 1181,402 1186,388 1193,376 1199,363 1205,350 1211,337 1220,325 1226,311 1234,299M1161,616 1167,630 1173,644 1176,659 1180,673 1183,688 1196,700 1197,716M1219,590 1231,599 1244,607 1255,617 1268,624 1280,633 1292,641 1305,648 1317,657 1330,664M1106,648 1104,661 1100,675 1099,689 1095,703 1092,717 1090,730 1090,745M1253,477 1268,473 1282,467 1296,460 1311,457 1325,450 1340,446 1354,439 1369,435M1196,622 1203,635 1214,646 1220,661 1228,674 1237,685 1244,699 1246,716 1254,729 1266,739M1051,418 1041,405 1032,393 1023,381 1014,369 1005,357 996,344 987,332 979,319 970,306M1259,570 1273,574 1286,580 1299,584 1313,589 1327,593 1339,600 1353,605 1366,609 1379,615 1393,619M1117,452 1112,437 1109,422 1108,406 1105,391 1106,375M1244,593 1257,601 1269,608 1282,615 1294,624 1306,632 1319,638 1333,644 1346,651 1358,659 1372,665 1386,670M1048,546 1033,548 1019,551 1004,554 990,560M1077,436 1068,423 1059,410 1051,396 1042,383 1029,372 1021,358M1200,415 1207,402 1215,390 1221,377 1229,365 1238,353 1243,340 1250,327 1260,316 1270,306 1277,293M1212,632 1220,644 1228,657 1237,668 1243,681 1252,693 1261,705 1270,716 1277,729 1284,741 1289,756 1301,766M1003,491 988,487 972,485 957,483 942,478 927,476 910,478 896,474M1215,603 1226,615 1238,624 1247,637 1258,648 1268,660 1279,670 1288,683 1297,696 1309,706M1072,405 1065,391 1057,378 1049,364 1042,350 1036,336 1026,324 1019,310 1010,297 1004,283M1001,554 986,558 970,560 956,566 941,569 926,571 911,574M1183,416 1190,403 1196,390 1204,378 1211,365 1217,352 1225,339 1231,326 1240,314 1251,304M1088,641 1083,656 1077,671 1075,687 1071,702 1063,716 1058,731 1060,749M1057,409 1048,396 1039,383 1031,370 1022,357 1013,345 1005,332 993,321 985,308 975,296M1036,426 1026,414 1016,403 1004,393 995,380 985,367 972,358 964,343M1115,402 1113,388 1110,374 1108,360 1106,346 1104,332 1102,318 1099,304 1096,290 1092,276M1021,522 1007,523 992,523 977,521 962,524 947,515 933,523M1001,522 986,522 971,522 956,524 941,525 926,527 912,528 897,529M1261,509 1276,508 1290,506 1305,505 1320,502 1335,500 1350,496 1364,492 1379,489 1394,485 1408,482M1110,406 1108,392 1105,378 1103,364 1102,350 1099,336 1097,322 1097,308 1094,294 1092,280M1124,643 1124,658 1122,672 1123,687 1121,702 1121,717 1122,732 1123,747 1123,762M1089,618 1083,634 1076,648 1071,665 1067,681 1061,696M1150,654 1151,668 1155,682 1154,696 1161,709 1161,723 1163,737 1165,751 1170,765 1169,779M1179,633 1184,646 1189,659 1194,673 1199,686 1205,699 1209,713 1213,726 1218,740 1223,753M1110,640 1108,655 1105,670 1105,686 1104,702 1097,716 1103,733 1098,748M1094,653 1090,666 1087,680 1083,694 1078,708 1075,722 1073,736 1069,750 1065,764 1059,777M1009,569 995,574 980,580 967,587 953,593 938,598 924,604 911,613M1245,554 1259,558 1272,563 1286,567 1299,571 1312,577 1326,581 1339,585 1353,590 1367,592M1136,390 1137,374 1137,359 1139,344 1138,329 1140,313 1144,298 1141,283 1145,268 1149,252M1206,565 1219,571 1230,580 1241,589 1253,597 1263,608 1275,615 1286,625M1245,571 1258,576 1271,584 1284,588 1297,596 1309,602 1321,611 1334,616 1346,626M1014,527 999,526 984,530 969,531 954,536 939,538 924,535M1110,650 1107,665 1103,679 1101,694 1099,709 1096,724 1092,739 1091,754M1230,614 1241,623 1252,633 1262,644 1271,656 1282,666 1293,675 1301,688 1312,698 1322,708 1327,724 1341,731M1051,555 1037,561 1022,563 1009,569 995,574M1131,542 1130,552 1129,561 1129,570M1239,583 1251,591 1264,597 1276,603 1288,612 1302,616 1314,623 1328,628 1340,635 1351,646 1365,650M1033,507 1016,506 999,504 982,502 965,504 949,499M1063,635 1055,647 1048,661 1042,675 1035,688 1025,699 1019,713 1014,728 1005,740M1192,540 1205,544 1219,548 1233,551 1247,555 1261,558M1000,504 985,502 972,498 957,499 944,490 930,487 916,487 903,479 888,481M1260,506 1274,506 1288,501 1302,501 1317,503 1332,505 1346,503 1360,497 1374,500M1057,633 1049,646 1040,658 1030,670 1023,683 1014,695 1005,707 1002,724 989,733M1242,597 1254,605 1265,614 1278,621 1290,628 1302,636 1314,644 1326,651 1333,666 1344,675 1359,679M1021,590 1006,598 993,606 982,619 968,626 956,638 941,645M1050,623 1041,634 1031,645 1023,656 1012,666 1005,679 994,688 984,699 976,711M1061,478 1047,470 1034,460 1018,454 1003,447 987,441M1040,561 1026,567 1011,572 997,576 982,581 966,582M1196,409 1203,395 1211,382 1221,370 1227,355 1233,341 1240,328 1248,315 1252,299 1257,284M1218,592 1229,603 1240,614 1253,622 1266,632 1277,642 1290,651 1298,665 1311,674M1131,408 1130,394 1131,380 1129,366 1126,351 1129,337 1127,323 1126,309 1120,294M1242,524 1257,523 1273,526 1288,526 1303,528 1319,529 1334,530 1350,536M1262,553 1276,556 1290,561 1304,563 1318,566 1332,572 1346,576 1360,578 1373,585 1388,583 1401,591 1414,598M1229,430 1239,420 1251,411 1262,401 1274,393 1283,382 1295,373 1306,363 1320,357 1329,346M1211,413 1220,402 1226,389 1234,378 1243,367 1255,358 1258,343 1271,335 1279,324 1286,311 1291,297 1303,289M1223,460 1235,453 1246,444 1258,437 1271,431 1282,421 1294,414 1308,410 1320,403 1334,399M1233,572 1247,579 1260,587 1274,593 1288,601 1301,607 1315,616 1330,620 1343,627M1217,455 1228,447 1239,438 1249,428 1259,418 1270,409 1282,401 1290,389 1299,378M1022,448 1010,438 997,432 986,422 972,416 960,408 947,401 936,393 926,381 911,377M1010,578 997,584 984,590 972,597 960,604 947,612 935,619 922,625 911,635M1002,503 988,500 974,498 960,497 946,492 932,490 919,484 905,483M1005,489 991,484 977,481 962,478 948,472 935,466 921,461 907,454M1252,526 1268,527 1283,528 1299,532 1315,532 1330,530 1346,532 1362,539M1029,487 1016,481 1003,476 989,471 976,466 961,468 947,464 934,457M1184,422 1190,409 1197,397 1204,384 1209,371 1215,358 1221,346 1226,332 1233,320 1238,307M1199,457 1210,446 1222,436 1232,424 1244,415 1254,403 1263,389 1274,379M1132,648 1132,663 1132,678 1131,694 1130,709 1130,724 1127,739 1127,755 1121,770M1027,480 1013,476 999,470 986,462 971,458 957,454 942,449 930,441M1009,480 996,474 982,470 968,465 955,460 941,454 927,451 913,446 901,436M1011,529 996,530 982,530 968,529 953,529 939,529 924,526 910,523M1241,520 1255,520 1269,520 1283,517 1298,515 1312,519 1326,517 1340,513M1221,560 1234,566 1247,573 1261,576 1275,579 1288,584 1299,596 1313,599M1256,469 1269,463 1282,456 1296,453 1309,447 1322,441 1334,434 1348,428 1360,421 1374,416 1386,409 1400,404M1043,433 1033,422 1023,410 1010,400 1002,386 990,376 979,365 973,349 962,338M1022,491 1009,486 994,483 981,477 967,472 953,467 940,459 926,455M1156,399 1159,385 1161,371 1165,357 1168,343 1167,328 1168,314 1172,300 1173,286M1137,651 1137,667 1139,683 1140,699 1140,714 1143,730 1143,746 1144,761 1148,777M1216,432 1227,422 1235,411 1245,400 1256,391 1269,383 1274,369 1286,360 1296,350 1308,342M1224,425 1234,415 1243,404 1253,394 1263,383 1272,372 1281,362 1290,351 1301,341 1310,330 1318,318 1327,308M1156,407 1160,394 1160,379 1162,365 1168,352 1170,338 1168,324 1170,310 1174,296M1099,639 1093,655 1087,670 1083,686 1077,701 1069,716M1157,568 1165,581 1171,595 1174,611 1181,626M1135,509 1136,499 1140,490 1139,480M1234,543 1248,546 1262,549 1276,551 1290,556 1304,559 1318,561 1332,564 1346,566M1170,634 1175,648 1179,662 1182,676 1187,689 1192,703 1195,717 1196,732 1198,746 1202,760M1023,444 1011,434 999,425 985,418 974,408 962,397 949,390 937,380 931,363M1086,419 1080,405 1074,391 1071,376 1066,361 1054,350 1054,333 1047,319M1129,409 1129,395 1129,381 1129,367 1130,353 1130,339 1132,324 1133,310 1135,296M1099,653 1096,667 1093,681 1090,695 1085,708 1085,723 1080,736 1079,751 1079,765 1076,779M996,516 981,515 965,514 949,515 934,515 918,514 902,515 886,516M1004,537 989,538 975,540 960,539 945,541 930,544 915,540 900,542M1161,644 1164,658 1168,672 1172,686 1176,700 1179,714 1183,728 1188,741 1191,755 1196,769M1081,410 1075,397 1070,383 1064,370 1056,357 1051,343 1047,329 1043,315 1038,301M1177,455 1186,442 1193,429 1201,415 1208,401 1217,389 1222,374M1142,631 1143,645 1144,659 1146,674 1146,688 1147,702 1148,717 1150,731M1248,553 1262,558 1275,562 1289,565 1303,569 1317,571 1331,577 1344,580 1359,580 1372,589 1386,589M1001,496 985,492 969,489 953,485 937,482 921,479 906,470M1251,457 1264,450 1276,442 1289,434 1302,429 1314,420 1327,414 1337,402 1350,395 1362,387 1375,379 1385,368M1181,637 1185,652 1191,665 1198,678 1203,692 1206,707 1212,721 1220,733 1228,746 1227,763M1097,649 1092,663 1089,678 1085,693 1078,708 1078,724 1070,738 1062,752 1063,768M1210,632 1217,645 1226,657 1237,666 1244,679 1253,690 1262,702 1272,712 1279,725 1288,737 1295,749 1304,761M1267,509 1281,508 1295,505 1310,507 1324,506 1338,501 1352,496 1366,496 1381,497 1395,493 1409,488 1423,486M1247,569 1262,574 1276,581 1291,586 1305,592 1319,599 1335,603 1350,607 1363,616M1122,387 1120,372 1118,358 1118,344 1118,329 1120,314 1117,300 1119,286 1113,272 1108,258 1110,243M1041,623 1032,635 1022,647 1008,654 1001,668 989,678 979,689 967,699 957,710M997,529 981,530 965,532 949,528 933,533 917,526 901,530M1234,440 1245,431 1256,421 1267,411 1279,402 1290,392 1302,383 1311,371 1323,362 1332,349M1001,504 987,503 973,501 959,498 945,498 931,497 917,493 903,495M1158,644 1161,659 1165,674 1167,690 1172,705 1169,721 1169,737 1169,753M1182,431 1190,419 1196,406 1201,392 1211,381 1215,366 1219,352 1229,340 1233,326M1113,632 1111,647 1109,663 1107,678 1102,692 1096,707 1095,722 1091,737M1052,444 1043,433 1032,424 1024,412 1011,404 1005,390 995,380 986,369 975,359M1168,604 1175,617 1179,631 1187,643 1190,657 1198,669 1206,681 1206,697M1213,630 1223,641 1230,654 1241,664 1249,676 1260,686 1271,696 1281,707 1291,717 1298,730 1311,739 1323,748M1184,633 1191,646 1197,661 1205,674 1208,689 1214,704 1222,717 1229,731 1235,745M1131,411 1132,396 1130,381 1130,366 1129,351 1128,336 1131,321 1127,306M1121,387 1118,371 1119,355 1119,339 1116,323 1114,307 1116,291 1119,275M1142,387 1141,372 1146,358 1147,343 1145,328 1148,314 1149,299 1150,285 1144,270 1150,256 1152,241M1160,409 1165,395 1168,379 1176,365 1181,350 1184,334 1186,319 1197,305 1198,290M1075,618 1067,630 1061,643 1051,653 1046,666 1038,678 1027,687 1016,697M1050,518 1032,519 1015,517 998,510 981,509M1214,620 1224,630 1231,643 1243,652 1252,664 1259,677 1268,689 1278,699 1290,708 1297,722M1077,425 1070,413 1064,400 1055,389 1048,377 1043,363 1033,352 1032,337M1174,635 1180,648 1184,662 1188,677 1196,689 1201,703 1206,717 1211,731 1217,745 1215,761M1264,491 1279,489 1292,482 1307,480 1321,477 1335,473 1349,466 1362,460 1377,459 1390,451M1018,464 1003,457 988,450 973,443 957,438 943,430 927,426M1002,561 986,564 971,571 954,572 938,576 922,579 908,588M996,515 982,514 968,514 953,512 939,512 925,511 911,509M1062,586 1051,596 1039,607 1028,617 1022,633M1239,459 1252,453 1264,446 1277,438 1290,433 1303,427 1315,419 1328,413 1343,409 1357,404M1205,536 1219,539 1233,541 1247,546 1262,548 1276,549 1290,553M1094,495 1080,484 1063,478 1050,466M1054,453 1044,443 1033,434 1021,426 1011,416 1004,404 992,396M1121,442 1119,428 1115,413 1113,399 1111,385 1113,370 1111,356M1005,492 990,490 976,486 963,478 948,476 935,470 921,465 907,460 895,451M1247,582 1260,590 1275,594 1288,602 1301,610 1314,617 1327,625 1341,631 1356,635 1366,648 1379,656M1243,592 1256,599 1268,609 1281,616 1293,623 1305,632 1318,640 1329,649 1342,658 1350,672 1364,678M1138,399 1138,385 1141,371 1142,357 1144,343 1143,328 1149,314 1150,300 1152,286 1155,272M1093,536 1081,541 1067,542 1054,546M1226,611 1237,620 1245,632 1256,642 1266,651 1277,661 1287,671 1296,681 1303,695 1314,704 1322,716M1073,643 1066,657 1059,671 1051,685 1042,697 1034,711 1025,724 1016,737 1007,750M1223,432 1234,421 1247,412 1257,400 1269,390 1282,381 1293,371 1304,360 1316,350 1332,344M1163,635 1168,649 1169,664 1175,678 1178,692 1184,706 1186,721 1192,735M1187,637 1193,651 1199,666 1206,679 1211,694 1223,706 1224,723 1232,736 1240,750M1020,448 1008,440 996,432 984,423 972,414 961,405 949,396 938,386 926,378 916,366M1075,404 1070,389 1063,375 1056,361 1048,348 1047,331 1038,319 1035,303 1025,290 1022,274M1013,505 999,503 984,502 970,502 955,500 941,499 926,498 911,501M1211,593 1222,603 1236,611 1247,621 1259,631 1271,641 1283,650 1296,659 1301,676M1031,460 1018,451 1004,444 991,436 978,427 965,418 955,405 940,399M1021,558 1006,562 990,567 975,571 959,573 943,577 928,582M1218,626 1227,637 1237,647 1246,659 1254,671 1262,683 1271,695 1280,706 1291,716 1298,729 1309,739 1316,752M1003,494 989,491 976,486 962,484 948,481 935,476 922,470 908,467 894,464M1004,517 990,516 975,518 961,518 947,518 933,519 919,519 905,520M1175,585 1183,597 1192,609 1201,621 1212,632 1220,645 1229,656M999,545 985,547 971,549 958,556 944,559 930,562 916,565 902,566 888,571M1028,609 1016,618 1006,628 996,637 985,646 974,655 965,667 954,675 943,685M1227,618 1236,630 1247,640 1258,650 1266,662 1276,672 1287,682 1297,693 1307,704 1318,714 1325,727 1334,738M1023,539 1009,539 995,542 981,545 966,542 951,543M1208,450 1218,439 1228,429 1239,418 1251,409 1260,397 1271,387 1281,376 1289,363M1192,454 1202,443 1212,432 1223,422 1234,411 1244,400 1257,392M1242,547 1256,551 1270,554 1285,557 1299,559 1313,565 1329,564 1342,570 1357,574 1371,576M1266,544 1280,549 1295,550 1310,552 1324,557 1339,556 1354,558 1368,562 1383,562 1397,570 1411,573M1106,443 1101,427 1095,412 1091,397 1086,381 1081,366M1245,586 1257,595 1269,602 1280,610 1293,616 1304,625 1318,629 1327,642 1338,652 1351,657 1361,668 1374,672M1245,475 1260,470 1274,463 1289,458 1303,452 1319,449 1333,444 1349,440 1363,433 1379,431M1265,496 1280,492 1295,491 1309,485 1323,483 1338,480 1351,473 1365,468 1380,466 1394,462 1408,453M1178,448 1187,437 1193,424 1202,413 1207,399 1214,386 1223,376 1225,360M1146,657 1147,671 1148,686 1150,700 1149,715 1152,729 1152,744 1149,759 1152,773M1078,550 1064,557 1050,566 1038,580M1084,400 1079,386 1073,372 1067,358 1061,344 1055,330 1047,317 1038,304 1033,290 1025,277M1234,612 1244,622 1254,631 1264,641 1275,651 1285,661 1293,673 1303,683 1314,692 1323,703M1187,620 1193,632 1201,644 1207,657 1212,670 1222,680 1228,693 1235,706 1242,718 1250,729M1088,404 1081,391 1078,376 1074,362 1066,350 1064,336 1055,324 1050,310 1044,297 1039,283M1074,442 1066,430 1058,417 1048,406 1039,395 1035,379 1022,371 1015,358M1033,458 1020,450 1009,442 996,435 985,426 975,415 962,408 951,399 938,392M1194,621 1202,633 1211,644 1216,659 1228,668 1235,681 1245,692 1248,708M1214,432 1226,421 1234,408 1247,398 1253,383 1266,374 1276,362 1281,346 1289,332 1302,322M1231,573 1244,580 1258,585 1271,592 1284,599 1299,602 1312,608 1325,616 1339,621 1352,628M1255,545 1270,547 1284,549 1298,553 1313,555 1328,555 1341,562 1355,567 1371,566 1385,569 1398,576M1049,619 1040,633 1029,645 1014,653 1006,668 993,677 983,689M1104,389 1101,374 1099,358 1094,344 1095,328 1093,313 1089,298 1089,282 1086,267M1139,464 1141,449 1141,434 1144,419 1143,404M1172,571 1182,583 1191,595 1200,608 1211,619 1218,634M1136,640 1137,654 1139,669 1140,683 1141,698 1141,712 1142,727 1147,741 1145,755M1072,642 1065,655 1057,668 1052,683 1040,694 1036,709 1027,721 1012,731M1060,562 1044,569 1031,582 1014,586 1002,599M1110,393 1107,378 1102,363 1101,348 1096,333 1093,317 1091,302 1088,287 1082,272 1078,257M1107,627 1104,641 1100,655 1096,670 1093,684 1089,698 1082,712 1078,726M1125,513 1120,506 1119,497 1116,489M1148,488 1157,473 1163,456 1169,440M1124,392 1123,377 1122,363 1123,348 1123,333 1123,319 1122,304 1124,290 1125,275 1122,261M1114,655 1112,669 1111,683 1108,697 1105,711 1104,725 1100,738 1097,752 1093,766 1089,779M1125,425 1123,411 1123,396 1122,382 1120,368 1120,353 1116,339 1116,325M1103,648 1101,663 1095,678 1093,693 1088,708 1088,723 1087,739 1085,754 1075,768M1266,545 1281,547 1296,549 1311,550 1326,552 1341,553 1356,555 1371,558 1386,557 1401,558 1416,558M1267,534 1281,536 1296,535 1311,537 1326,540 1340,540 1355,538 1370,539 1384,544 1399,544M1228,433 1238,423 1248,413 1258,403 1268,392 1277,382 1287,372 1298,362 1306,350 1316,340 1322,325M1265,544 1279,547 1293,549 1308,552 1322,554 1336,558 1351,560 1365,563 1379,568 1393,573M1249,519 1264,519 1279,518 1294,518 1309,519 1324,518 1338,515 1353,516 1368,512 1383,514M1239,473 1253,467 1267,461 1280,454 1294,448 1306,438 1321,433 1333,424 1348,421 1362,414M1162,645 1167,660 1167,675 1171,690 1175,704 1179,719 1178,735 1179,750 1181,766 1186,780M1225,427 1234,415 1246,406 1255,396 1262,382 1270,369 1285,364 1295,352 1303,340 1304,321M1129,400 1128,386 1128,372 1127,358 1127,343 1128,329 1130,315 1130,301 1133,286 1133,272M1222,451 1233,442 1245,434 1256,425 1267,417 1279,408 1290,400 1302,392 1312,382 1323,372M1104,652 1100,666 1097,680 1092,694 1091,708 1085,721 1079,735 1077,749 1073,763 1064,775M1186,426 1193,413 1199,400 1205,387 1210,374 1216,360 1223,347 1229,334M1244,595 1257,603 1268,612 1281,620 1294,627 1306,636 1318,646 1332,653 1344,661 1356,670M1267,540 1281,543 1295,544 1310,548 1324,551 1338,554 1353,554 1367,559 1381,563 1396,566 1410,566 1424,574M1145,414 1146,399 1148,384 1148,369 1150,355 1149,340 1148,325 1148,310 1146,295M1161,652 1165,666 1168,681 1172,696 1176,711 1181,725 1186,740 1188,755 1194,769M1229,561 1244,566 1259,572 1272,580 1288,582 1303,589 1318,593 1335,593 1349,599M1008,553 992,556 978,561 962,561 947,565 932,566 916,568 901,569M1011,583 996,590 982,598 967,602 952,609 937,615 922,619 907,624M1146,588 1148,604 1153,620 1155,636 1165,650M1109,582 1105,596 1101,609 1096,623 1092,636M1220,478 1232,470 1246,465 1257,456 1269,448 1284,445 1294,432 1308,430 1318,417M1149,581 1157,597 1162,613 1165,630 1169,646M1215,628 1223,640 1233,651 1241,662 1250,674 1259,685 1269,696 1277,708 1288,717 1297,729 1307,738 1317,749M1090,579 1080,592 1072,605 1060,616 1053,631M1061,609 1049,620 1042,635 1031,647 1025,663 1014,675 1005,689M1093,629 1089,643 1082,656 1077,670 1077,686 1074,700 1065,712 1060,726M1102,543 1091,550 1081,558 1068,562M1265,523 1281,524 1296,524 1311,522 1326,523 1341,525 1356,522 1371,527 1386,528 1401,526M1198,634 1206,646 1213,659 1220,671 1229,682 1233,696 1241,708 1247,720 1259,730 1264,744 1271,756M1134,631 1135,647 1135,664 1135,680 1135,696 1135,712 1137,728M1183,644 1188,658 1195,672 1199,686 1205,700 1210,713 1215,727 1220,741 1228,754 1233,768 1235,783M1041,553 1024,558 1008,564 992,571 975,574M1061,628 1054,642 1047,656 1036,667 1029,681 1022,695 1016,710 1009,724M1014,457 1001,450 987,442 973,435 960,426 945,420 932,412 919,402 904,397M1012,520 996,521 980,522 964,521 947,523 931,525 915,521M1037,435 1027,424 1015,416 1006,404 996,394 984,384 974,374 963,365 952,355 941,345M1140,432 1141,416 1144,400 1146,385 1151,369 1156,354 1158,338M1109,391 1105,377 1103,363 1103,348 1099,334 1097,320 1098,305 1099,290M1219,420 1228,410 1238,398 1246,387 1256,376 1267,367 1276,355 1289,346 1296,333 1309,326 1316,313M1107,464 1100,448 1091,433 1084,418 1071,404M1062,606 1053,616 1043,627 1033,637 1024,648 1012,656 1003,667M1108,620 1106,636 1098,651 1096,667 1087,681 1085,697 1078,712M1060,414 1050,403 1042,390 1036,376 1026,364 1015,354 1008,340 999,328 987,318 983,303M1233,506 1248,504 1262,502 1276,498 1291,499 1306,497 1320,495 1334,491 1349,489M1195,579 1206,588 1216,599 1227,608 1238,617 1250,626M1117,646 1115,661 1111,676 1113,691 1108,706 1110,722 1106,737 1101,751 1100,766M1224,427 1235,416 1245,405 1256,394 1267,384 1275,370 1287,361 1297,349 1306,337 1316,325 1325,312M1133,655 1134,671 1133,686 1133,701 1134,717 1130,732 1132,748 1128,763 1131,778M1058,625 1049,636 1041,648 1036,662 1028,673 1017,684 1009,695 1005,710 997,722M1233,478 1246,470 1259,463 1272,458 1287,455 1300,446 1311,436 1325,430 1336,421M1005,532 989,534 972,534 957,540 941,546 925,551M1009,492 995,488 980,484 965,481 950,478 934,477 919,473 905,466M1257,471 1271,466 1284,459 1298,456 1311,449 1326,447 1338,440 1354,440 1367,433 1381,429 1395,426 1409,421M1049,626 1039,637 1030,649 1021,661 1010,671 1001,683 990,693 977,702 970,715M1014,497 1000,493 985,491 971,486 957,482 943,477 929,473 914,469M1258,512 1273,511 1288,511 1302,508 1317,506 1332,504 1347,505 1361,501 1376,498 1390,497 1405,496M1052,440 1042,429 1032,418 1021,409 1012,397 1003,386 997,373 988,361M1267,536 1281,537 1295,540 1309,541 1323,543 1337,547 1351,550 1365,552 1379,556 1393,557 1406,564 1420,569M1191,471 1201,460 1213,451 1225,441 1236,430 1246,418 1257,408M1021,600 1009,609 997,617 984,624 972,633 960,641 948,649 937,659 923,665M1248,503 1262,501 1276,497 1291,495 1305,492 1320,491 1334,488 1348,481 1363,483 1377,475M1029,609 1019,618 1008,628 996,637 985,647 973,656 961,664 949,672 939,683M1083,403 1078,389 1072,374 1066,360 1058,347 1052,333 1050,318 1046,303 1035,291 1036,274M1225,467 1239,459 1252,452 1265,443 1278,436 1289,423 1299,411 1314,407 1327,399M1051,448 1039,439 1029,426 1017,416 1003,408 993,396 976,392 963,383M1040,446 1030,436 1018,428 1007,420 995,411 982,404 972,394 959,388 947,381M1119,657 1118,672 1114,686 1114,701 1112,716 1107,730 1108,745 1104,760 1102,774M1165,534 1181,542 1199,543 1218,543M1139,386 1139,371 1140,356 1143,340 1144,325 1146,310 1147,295 1150,280 1154,264M1159,456 1166,440 1173,424 1176,407 1183,391M1197,407 1203,393 1211,380 1221,368 1229,356 1238,344 1247,331 1255,319 1262,305 1273,294 1284,283M1250,513 1265,512 1281,509 1297,508 1312,507 1328,508 1344,506 1360,510 1375,503M1257,562 1270,567 1283,572 1297,575 1311,580 1324,584 1338,588 1350,594 1363,601 1378,601 1391,606 1405,610M1262,497 1277,495 1292,491 1308,491 1322,488 1338,487 1352,483 1368,484 1383,484 1399,486 1414,484M1022,442 1011,433 999,424 986,416 975,405 964,395 953,384 943,373 930,365M1176,651 1179,666 1186,680 1191,694 1194,709 1200,724 1202,739 1209,753M1033,466 1020,459 1007,449 994,441 980,435 967,427 955,416 944,405M1190,425 1198,411 1207,398 1214,384 1218,369 1228,357 1235,342 1241,328 1246,313M1070,638 1064,651 1056,664 1049,677 1046,692 1040,706 1034,720 1026,732 1023,748M1103,626 1099,641 1094,656 1089,672 1081,686 1075,701 1072,717M1058,627 1049,639 1039,651 1032,665 1021,676 1011,688 1003,702 992,713M1238,533 1252,535 1266,537 1280,539 1295,539 1309,540 1322,543 1337,543 1350,546M1232,555 1247,559 1262,564 1277,569 1293,573 1308,576 1323,580 1338,587 1354,588M1247,478 1260,472 1274,468 1287,461 1299,454 1314,451 1326,442 1340,440 1351,428 1364,421 1377,414M1155,461 1160,446 1167,433 1172,418 1176,404 1179,389M1149,522 1160,522 1171,522 1182,524M1224,423 1233,412 1243,402 1254,393 1264,382 1269,368 1277,356 1287,345 1299,337 1307,325 1317,315 1323,301M1180,422 1187,408 1194,394 1200,380 1207,366 1214,352 1220,337 1228,324 1234,309M1157,655 1160,670 1164,685 1167,699 1166,715 1171,729 1172,744 1178,758 1180,773 1184,788M1263,514 1278,513 1293,511 1307,509 1322,509 1337,509 1352,507 1367,504 1382,505 1397,503 1412,504M1238,504 1254,501 1269,499 1285,496 1300,494 1316,492 1331,490 1347,486M1091,651 1086,666 1081,680 1077,695 1074,710 1070,725 1062,739 1060,754 1054,769M1254,581 1267,587 1279,596 1291,603 1305,608 1317,616 1330,620 1341,631 1353,640 1364,648 1377,655 1390,661M1210,617 1219,629 1229,640 1239,652 1250,662 1259,674 1269,685 1279,696 1288,708 1299,718M1181,434 1189,422 1195,408 1204,397 1211,384 1219,372 1227,359M1228,586 1240,594 1252,601 1263,610 1275,617 1289,621 1303,627 1317,631 1328,639M1174,597 1183,611 1191,624 1200,637 1209,651 1217,664 1227,677M1030,581 1019,589 1005,594 992,600 979,606 966,613 955,622 943,629M1250,589 1263,597 1276,604 1290,611 1304,616 1318,622 1332,627 1346,634 1358,643 1372,648 1389,649M1218,417 1227,406 1236,395 1245,383 1253,372 1262,360 1271,349 1279,337 1287,325 1296,314 1299,298 1309,288M1022,555 1007,557 994,565 978,565 965,571 950,574 935,577M1170,638 1174,653 1181,665 1185,679 1189,693 1192,707 1196,721 1202,734 1205,749 1209,763M1008,483 993,478 978,472 962,467 947,460 932,456 916,450M1211,462 1224,455 1235,447 1248,440 1256,428 1272,425 1280,412 1295,409 1305,399M1029,603 1018,612 1007,621 994,628 984,638 973,647 961,655 946,659 932,664M1090,419 1085,405 1078,391 1078,375 1072,361 1066,347 1067,331 1064,316M1035,599 1023,608 1012,619 998,626 984,633 972,642 962,654 952,666M1049,414 1040,402 1030,390 1022,377 1014,364 1004,352 997,338 987,326 983,310 974,297M1228,556 1242,562 1257,567 1272,571 1287,575 1301,582 1316,585 1329,593M1197,419 1205,406 1213,392 1222,380 1230,367 1238,354 1247,341 1255,328 1264,315 1271,301M1120,403 1121,388 1116,374 1118,359 1117,344 1118,329 1115,314 1117,299 1118,284M1003,565 990,571 977,575 963,580 950,584 936,589 923,594 909,598 896,604M1029,577 1016,583 1002,590 989,598 975,604 959,607 944,610M1057,546 1041,552 1023,553 1009,562 990,560M1053,425 1043,414 1033,402 1022,392 1013,380 1001,370 991,358 980,348M1120,398 1118,384 1117,370 1116,355 1118,341 1118,327 1116,312 1116,298 1120,283M1105,390 1104,376 1100,362 1095,348 1094,334 1093,320 1093,305 1085,292 1081,278 1085,263 1082,249M1214,609 1225,619 1233,632 1245,642 1255,653 1266,663 1273,677 1286,686M1085,457 1075,445 1067,431 1058,417 1049,403 1042,389M1066,561 1052,570 1037,577 1027,591 1009,594M1146,591 1147,606 1151,620 1156,634 1160,649 1160,664M1258,564 1271,569 1285,572 1297,580 1310,586 1324,591 1338,594 1350,603 1365,604 1377,614 1389,622 1402,627M1081,623 1075,637 1065,651 1058,665 1055,682 1049,697 1041,710M1180,423 1185,409 1193,396 1197,382 1203,369 1212,357 1214,341M1144,583 1146,600 1149,617 1155,633 1153,651M1176,631 1183,645 1187,660 1195,674 1201,688 1209,702 1214,717 1221,731M1233,608 1244,618 1255,628 1266,638 1276,649 1288,657 1298,668 1307,681 1316,692 1327,702M1211,586 1223,595 1234,606 1246,615 1261,621 1273,630 1285,639 1296,649 1311,655M1134,418 1134,402 1134,386 1136,370 1138,354 1141,339 1142,323 1144,307M1192,555 1205,562 1217,571 1231,577 1243,587 1255,598M1132,591 1134,609 1128,626 1131,644M1173,638 1177,653 1183,667 1189,682 1194,696 1200,711 1206,725 1214,739 1222,752M1242,556 1256,559 1269,566 1283,569 1298,569 1311,574 1326,576 1338,584 1352,587 1367,588M1245,554 1260,557 1274,564 1289,567 1304,571 1319,574 1335,574 1349,583 1366,581 1381,582M1094,652 1091,666 1085,679 1083,693 1076,706 1074,720 1071,734 1064,746 1065,761 1062,775M1238,451 1250,444 1263,437 1275,429 1287,422 1300,414 1311,406 1326,403 1337,392 1353,390 1365,383M1054,632 1047,645 1038,657 1029,668 1018,679 1007,689 1000,702 992,715M1011,534 997,536 983,539 969,542 955,544 941,544 926,545M1070,567 1054,575 1041,588 1024,595M1263,502 1278,501 1293,496 1307,496 1322,491 1337,492 1351,489 1366,487 1380,486 1395,481M1088,457 1080,444 1072,431 1062,419 1055,405 1046,392M1232,612 1243,622 1255,632 1267,642 1280,650 1291,661 1306,668 1317,679 1331,686 1343,695 1355,705M1116,396 1113,381 1114,366 1109,352 1107,337 1106,322 1106,307 1105,292 1099,278M1098,634 1095,647 1091,661 1086,674 1083,688 1084,703 1078,716M1048,628 1040,640 1030,650 1024,663 1014,673 1007,687 999,699 992,711M1225,424 1235,413 1247,405 1256,394 1263,382 1276,374 1285,363 1299,357 1304,342 1318,336 1326,324 1340,318M1209,631 1219,642 1228,654 1234,667 1244,678 1250,692 1262,701 1267,715 1275,727 1290,735M1012,544 997,546 982,552 967,556 952,558 937,567 923,575M1265,549 1279,551 1293,555 1308,557 1322,560 1336,564 1350,568 1364,570 1378,576M1032,547 1018,549 1004,552 991,556 976,557 963,561M1201,431 1209,419 1218,408 1229,398 1239,387 1246,375 1258,366 1269,356 1280,345 1288,334M1238,439 1250,430 1262,422 1272,412 1286,406 1297,397 1310,390 1319,379 1331,371 1345,365 1356,356 1370,351M1215,434 1227,423 1238,412 1248,400 1259,389 1270,377 1282,368 1293,356 1307,348M1152,648 1156,662 1159,676 1161,691 1161,706 1162,720 1165,735 1166,749 1171,763 1172,778M1254,571 1267,576 1281,581 1293,588 1306,594 1319,599 1332,605 1347,607 1359,614 1371,624M1229,460 1242,453 1254,445 1266,436 1277,427 1289,419 1302,413 1311,400 1323,392 1333,381M1213,432 1224,421 1234,410 1244,398 1255,387 1265,376 1277,366 1290,358 1302,348 1315,339M1140,576 1141,594 1145,613 1146,631M1033,429 1022,419 1010,409 998,398 987,388 974,379 962,369 952,358 938,350 927,339M1035,578 1021,586 1008,594 993,601 978,606 964,613M1175,470 1185,459 1196,449 1201,434 1217,428 1229,418M1044,579 1032,588 1018,595 1006,603 991,609 979,617M1231,594 1242,603 1254,611 1265,621 1276,630 1288,639 1299,649 1310,658 1321,668 1330,681 1340,690M1023,467 1011,459 998,452 986,445 974,437 960,432 946,427 936,415M1030,612 1018,620 1009,632 996,640 988,654 977,664 968,676 960,689 947,697M1060,617 1050,629 1043,642 1036,656 1025,667 1015,679 1010,694 1007,711M1065,588 1054,600 1042,611 1032,624 1021,637 1012,652M1104,418 1099,404 1095,390 1093,375 1087,362 1079,349 1081,333M1140,452 1141,436 1145,421 1146,406 1149,391M1029,524 1012,527 996,527 979,529 962,528 946,526M1183,423 1191,410 1197,395 1205,381 1214,368 1222,355 1232,342 1241,329 1248,315M1182,617 1189,630 1195,644 1204,656 1211,669 1219,683 1226,696 1233,710 1241,723M1158,612 1162,626 1165,640 1170,653 1176,667 1180,681 1184,694 1183,709M1025,495 1011,492 998,489 984,486 970,485 956,482 942,482 928,479M1254,507 1268,505 1283,503 1298,500 1313,499 1328,497 1342,493 1357,492 1372,491 1387,485M1140,475 1140,460 1145,446 1141,430M1143,656 1144,672 1145,687 1146,702 1148,718 1149,733 1150,748 1150,764 1151,779 1150,794M1016,467 1001,461 986,454 972,447 959,438 944,431 927,430M1218,619 1228,631 1239,642 1249,654 1258,666 1268,678 1278,690 1287,702 1293,717 1304,728 1311,742M999,533 983,532 968,538 952,537 936,542 920,540 905,549 890,551M1189,624 1197,637 1204,650 1208,664 1216,677 1226,689 1234,701 1239,715 1241,731 1253,741M999,507 985,508 970,506 956,504 942,499 928,497 913,499 899,497 885,496M1041,614 1030,626 1018,635 1007,647 996,657 984,668 973,678 961,689M1252,576 1266,581 1278,589 1292,594 1304,603 1318,608 1331,614 1345,618 1355,630 1370,633 1382,642 1396,645M1074,400 1068,387 1061,374 1054,362 1049,348 1042,336 1035,323 1028,310 1020,298 1015,285 1008,272M1072,414 1068,400 1060,389 1051,377 1043,366 1039,352 1033,339 1023,329 1012,319 1008,305M1096,471 1087,458 1076,446 1067,433 1060,418M1104,418 1100,404 1098,390 1095,376 1091,362 1090,348 1089,334M1260,527 1274,526 1288,529 1302,530 1316,531 1331,533 1345,534 1359,537 1373,539 1387,543M998,508 983,508 968,508 953,505 938,507 923,507 908,508M1167,625 1171,639 1175,654 1180,668 1183,682 1188,696 1194,710 1195,725 1203,738M1012,583 1000,590 987,597 973,601 960,607 947,612 933,617 922,626 907,628M1254,482 1267,477 1281,473 1295,469 1309,463 1322,458 1335,452 1349,447 1362,441M1110,655 1108,669 1107,684 1104,698 1104,713 1102,728 1101,742 1098,756 1098,771 1095,785M1160,652 1162,667 1165,682 1172,696 1175,711 1178,725 1179,741 1185,755M1104,401 1102,387 1097,373 1092,360 1090,346 1084,332 1081,318 1081,303 1070,291M1170,580 1181,593 1190,607 1193,624 1202,638 1214,650M1150,644 1153,657 1155,671 1156,686 1159,699 1164,713 1166,727 1170,741 1173,754 1174,769M1078,589 1065,601 1059,618 1044,629 1033,642M1036,480 1024,474 1011,468 998,462 986,456 973,450 961,443 952,429M1016,464 1002,456 988,450 975,442 961,434 947,428 936,415 920,413M1008,573 995,579 981,584 967,589 953,594 939,599 926,605 911,608M1010,580 996,585 983,593 969,597 956,603 944,610 930,615 915,618 904,628M1268,513 1282,513 1296,512 1311,512 1325,511 1340,510 1354,512 1368,510 1383,511 1397,511M1061,491 1047,484 1034,479 1020,473 1006,467 993,461M1142,618 1143,633 1145,647 1146,661 1149,675 1151,689 1149,703 1150,717M1123,407 1121,392 1121,377 1120,362 1119,347 1120,331 1121,316 1121,301M1017,450 1004,442 992,435 979,427 966,420 953,412 941,404 929,396 916,389 903,381M1247,543 1261,544 1276,546 1290,547 1305,547 1319,549 1334,548 1348,550M1195,504 1210,499 1226,495 1241,490 1257,489M1032,609 1019,619 1007,630 997,643 986,654 972,663 961,674 953,689M1009,485 995,480 981,476 967,473 953,470 938,469 925,459 909,463 895,459M1066,640 1057,653 1049,666 1040,679 1034,694 1027,707 1014,718 1008,733 995,743M1187,403 1194,390 1199,376 1207,363 1212,350 1219,336 1224,322 1231,310 1237,296 1243,282 1253,271M1207,414 1217,402 1226,390 1233,377 1240,363 1250,351 1259,339 1269,328 1274,313 1284,301 1292,288M1156,394 1158,381 1162,367 1164,353 1167,339 1171,326 1175,312 1180,299 1184,286 1186,272 1191,258M1133,631 1132,647 1132,662 1132,678 1132,693 1134,709 1134,724 1133,739M1146,656 1148,671 1149,686 1150,702 1154,717 1153,733 1154,748 1159,763 1156,779 1163,794M1134,653 1133,668 1135,684 1134,699 1136,715 1137,730 1133,746 1137,761 1134,776M1235,501 1249,499 1264,497 1278,492 1293,493 1308,492 1323,492M1238,592 1250,600 1261,610 1275,616 1288,623 1300,631 1310,643 1324,648 1331,665M1235,608 1246,618 1257,628 1268,637 1279,646 1289,657 1300,666 1311,677 1322,685 1332,696 1342,707M1039,452 1027,443 1015,434 1003,427 990,420 979,410 967,403 953,396 940,390M1239,597 1252,604 1263,612 1275,620 1287,627 1299,635 1311,642 1325,647 1337,655 1349,662M1024,556 1009,561 994,566 979,571 964,576 950,582 935,588M1179,475 1191,463 1202,452 1216,444 1226,432 1237,420M1250,523 1266,523 1281,525 1296,527 1312,526 1327,530 1343,529 1358,533 1373,536M1092,417 1087,403 1080,390 1077,375 1072,361 1064,348 1057,335 1051,322 1044,308M1143,410 1145,395 1145,379 1146,364 1148,349 1150,333 1152,318 1150,302M1208,615 1218,627 1227,640 1238,652 1248,665 1254,680 1263,694 1273,706M1224,422 1233,410 1244,400 1254,389 1263,377 1273,366 1280,353 1290,341 1301,331 1309,319 1316,305M1126,386 1126,372 1126,357 1124,342 1120,328 1120,313 1119,299 1116,284 1114,270 1107,256 1106,241M1001,490 987,487 973,483 958,481 944,476 930,474 917,468 902,467M1185,625 1191,638 1198,650 1207,661 1211,675 1217,688 1223,700 1232,712 1242,722 1255,731M1092,648 1087,662 1082,676 1077,690 1071,703 1066,717 1061,731 1054,744M1099,414 1096,400 1090,387 1087,374 1081,361 1080,346 1067,336 1070,320M1107,656 1104,670 1102,685 1102,701 1099,715 1093,730 1098,746 1098,762 1093,776M1075,617 1067,629 1058,640 1050,652 1042,664 1033,675 1025,687 1023,703M1174,499 1188,493 1201,485 1214,476 1227,470M1121,389 1118,375 1119,360 1114,346 1115,332 1115,318 1110,304 1107,290 1101,276 1106,261 1101,247M1071,619 1062,633 1053,646 1044,661 1039,677 1029,690M1195,443 1204,431 1214,419 1221,406 1230,394 1237,380 1249,371 1253,355M1001,516 986,515 971,515 956,516 942,515 927,516 912,517 897,519M1229,586 1243,593 1255,602 1268,610 1281,617 1296,623 1310,630 1324,636 1336,646 1352,650M1058,630 1048,642 1042,657 1033,670 1022,681 1012,693 1004,706 998,721M1212,512 1228,510 1244,509 1261,508 1276,503 1292,499M1005,495 990,490 974,490 959,484 942,489 927,483 912,479M1264,552 1279,556 1293,559 1308,561 1322,566 1336,572 1351,573 1365,577 1379,585M1188,621 1195,634 1202,648 1211,661 1217,675 1226,688 1231,703 1238,717M1044,620 1034,630 1024,640 1015,651 1006,662 998,674 988,683 975,691 963,699M1229,465 1243,457 1257,450 1270,442 1283,434 1298,429 1312,421 1325,413 1341,409M1018,463 1004,456 992,446 977,440 964,432 950,424 941,409M1142,647 1143,663 1144,679 1145,695 1145,711 1143,727 1144,742 1142,758M1099,652 1096,667 1091,682 1090,697 1085,712 1084,727 1084,743 1076,757 1080,774M1200,488 1216,480 1231,473 1247,466 1264,462M1180,605 1187,618 1196,630 1199,644 1210,654 1213,669 1221,681 1226,694M1240,477 1254,471 1268,465 1282,459 1296,454 1310,448 1324,441 1339,438 1352,431 1367,428M1252,538 1267,540 1282,543 1297,545 1312,547 1327,549 1342,550 1357,552 1372,554 1387,552M1034,440 1023,429 1009,422 996,412 985,401 970,395 958,385 947,375 931,369M1001,553 987,558 973,559 958,560 945,567 930,565 915,566 901,569M1149,616 1151,632 1154,648 1156,664 1158,680 1158,696 1158,712M1220,506 1235,504 1249,502 1264,498 1279,496 1292,487 1307,483 1322,482M1082,648 1076,661 1071,674 1065,687 1062,701 1055,713 1049,726 1044,739 1041,753 1040,768M1102,416 1098,402 1095,388 1090,374 1084,361 1078,348 1082,331 1079,317M1241,545 1256,548 1271,551 1285,555 1299,562 1315,561 1329,566 1344,568 1358,575M1245,447 1257,439 1269,432 1281,423 1293,415 1306,409 1319,402 1331,395 1342,384 1355,378 1366,370 1379,362M1182,408 1190,395 1194,380 1200,366 1207,352 1214,338 1222,325 1227,310 1227,294 1235,280M1104,393 1101,378 1099,363 1095,348 1096,332 1092,318 1089,303 1089,287M1070,552 1057,560 1043,565 1032,576 1019,584M1261,528 1275,529 1289,528 1303,531 1318,527 1332,527 1346,527 1360,531 1374,528 1389,528M1239,439 1250,431 1261,423 1273,414 1284,406 1295,398 1306,389 1318,381 1329,373 1341,365 1354,358 1366,351M1045,423 1037,410 1025,400 1014,389 1008,374 994,366 989,350 979,338 971,325M1010,482 997,477 983,475 969,471 957,464 943,460 929,458 915,454 901,451M1111,647 1108,661 1106,675 1102,689 1097,703 1097,718 1090,731 1083,745M1235,581 1248,589 1262,595 1273,606 1286,614 1298,623 1310,633 1323,640 1334,651M1261,504 1276,501 1292,500 1307,497 1322,496 1338,496 1353,494 1369,496 1384,494 1400,496M1006,478 991,474 976,469 962,464 947,460 932,457 917,453 902,449 887,446M1079,402 1072,388 1066,373 1061,358 1054,344 1054,327 1043,314 1041,298M1166,413 1171,400 1174,386 1178,373 1183,360 1184,345 1186,331 1187,317 1193,304 1195,290M1148,642 1151,657 1152,672 1154,687 1153,703 1156,718 1154,733 1159,748M1052,617 1042,629 1032,641 1023,654 1012,664 999,674 991,687 979,697M1193,564 1205,572 1218,580 1230,589 1243,597 1257,603 1270,611M1139,393 1140,378 1141,363 1142,348 1145,333 1145,318 1148,304 1148,289 1152,274 1153,259M1022,589 1008,598 993,605 981,616 965,621 951,629M1025,442 1013,433 1001,425 989,416 979,406 968,397 955,389 944,379M1245,596 1258,603 1270,611 1281,622 1294,628 1308,634 1319,644 1332,652 1342,663M1138,475 1139,460 1140,446 1141,432 1141,417M1266,528 1281,528 1296,530 1311,527 1325,532 1340,530 1356,526 1370,526 1386,521 1401,521 1415,525M1073,638 1067,651 1062,664 1056,677 1051,690 1046,704 1042,717 1038,731 1032,744M1101,582 1094,596 1086,609 1079,624 1077,640M1248,456 1260,449 1272,441 1285,435 1297,426 1308,418 1320,409 1332,402 1342,391M1225,614 1235,625 1244,635 1256,643 1268,653 1277,663 1286,675 1300,681 1311,690 1320,701 1329,712 1341,720M1161,653 1165,667 1166,682 1171,695 1171,710 1175,724 1178,738 1181,751 1182,766M1052,413 1044,402 1033,392 1026,380 1016,369 1010,356 997,348 989,336 983,323 972,314 962,304M1125,637 1124,651 1123,665 1125,679 1125,693 1124,707 1127,722 1128,736 1127,750M1186,617 1193,631 1201,645 1210,658 1218,671 1227,684 1237,696 1246,709 1255,722M1037,606 1025,617 1012,626 1002,638 988,646 974,654 963,666 950,676M997,519 981,520 965,519 949,519 932,521 916,523 900,523M1177,626 1182,640 1190,654 1195,669 1198,684 1203,699 1207,714M1213,599 1224,609 1235,618 1246,627 1256,638 1265,649 1280,654 1286,669M1146,652 1148,667 1149,682 1151,698 1154,713 1152,729 1154,744 1159,759M1265,552 1278,555 1292,558 1306,559 1320,563 1334,564 1348,568 1362,569 1376,570 1391,569M1264,512 1280,511 1295,510 1310,507 1325,505 1341,503 1356,499 1371,494 1387,498 1402,495 1417,488M1088,650 1084,664 1078,679 1073,693 1068,708 1064,723 1058,737 1055,752 1049,766M1049,433 1039,423 1030,411 1019,401 1010,389 1000,378 996,362 987,350 974,342M1035,608 1025,620 1015,629 1004,639 995,651 981,658 970,666 965,684M1074,640 1068,653 1062,667 1052,679 1046,692 1039,706 1034,719 1029,733 1018,745M999,510 985,508 970,508 956,505 942,503 928,501 914,500 899,503 885,499M1189,399 1196,385 1203,371 1210,357 1218,344 1223,329 1235,318 1245,305 1251,291M1181,592 1189,603 1197,615 1208,624 1217,635 1222,648 1234,658 1242,669M1016,574 1003,582 988,587 974,593 960,599 944,599 930,608 916,613M1188,476 1200,468 1209,457 1219,447 1231,439 1241,428 1253,421M1042,567 1029,573 1016,579 1003,585 990,590 977,595 962,598M1135,515 1138,505 1144,497 1148,488M1221,593 1233,602 1245,611 1258,620 1270,629 1282,637 1295,646 1309,653 1320,663 1334,670M1243,590 1255,597 1267,604 1278,613 1291,619 1304,624 1315,635 1327,641 1342,644 1353,652 1365,661 1380,664M1016,453 1003,446 989,438 977,429 964,420 951,410 940,399 928,388M1111,549 1103,558 1096,569 1086,577M1116,643 1114,658 1113,673 1112,688 1111,703 1109,718 1111,733 1111,748 1112,763M1040,425 1029,415 1019,403 1007,394 997,382 984,374 973,364 963,352 952,342 939,333M1166,654 1170,668 1174,683 1179,697 1182,712 1188,726 1194,740 1198,754 1205,768M1249,521 1264,520 1279,520 1294,522 1309,523 1324,522 1339,521 1354,522 1369,522 1384,522M1152,458 1157,444 1160,429 1166,415 1166,399 1177,387M1253,549 1267,554 1281,557 1295,560 1309,564 1324,568 1338,569 1352,575 1366,579 1380,587 1394,591M1247,509 1263,507 1279,507 1294,502 1310,500 1325,495 1341,492M1230,598 1241,608 1253,617 1265,626 1278,633 1290,642 1304,649 1317,656 1329,665 1344,671 1357,679M1129,392 1127,378 1126,364 1126,350 1129,335 1127,321 1132,307 1131,293 1129,279 1133,265M1245,473 1258,467 1272,460 1288,459 1301,451 1316,449 1331,444 1346,441 1358,432 1373,429M1111,633 1109,650 1104,666 1106,683 1103,700 1105,717M1113,625 1111,641 1107,657 1105,673 1106,689 1099,704 1095,720M1030,458 1017,449 1003,443 991,435 976,429 962,423 948,417 936,407M1091,640 1087,654 1081,667 1078,681 1072,695 1069,709 1064,723 1062,738 1053,750M1087,644 1082,658 1077,671 1072,685 1066,698 1064,713 1057,726 1058,742M1155,421 1159,408 1158,393 1160,379 1162,365 1166,351 1165,336 1169,323 1168,308M1034,613 1023,624 1011,635 1000,647 985,654 971,664 958,674M1199,442 1209,431 1217,419 1228,409 1237,398 1247,386 1255,375 1266,365 1277,354M1216,628 1225,640 1234,652 1245,661 1252,674 1262,686 1273,695 1280,708 1292,717 1301,729 1309,741 1321,750M1047,426 1036,416 1027,404 1017,393 1008,382 999,370 988,360 979,348 971,335M1097,648 1093,662 1090,676 1087,691 1083,705 1080,719 1080,735 1078,749 1076,764M1193,402 1200,389 1206,375 1212,361 1223,349 1230,336 1237,322 1240,306 1253,296 1256,281 1267,269M1098,435 1094,422 1086,409 1081,396 1074,384 1070,370 1063,358 1051,347M1260,480 1275,477 1290,472 1304,465 1319,462 1333,455 1347,451 1361,444 1374,435 1390,435 1401,419M1101,643 1097,658 1093,672 1089,687 1086,701 1081,716 1079,730 1073,744 1068,758M1053,415 1044,402 1035,390 1026,378 1019,364 1013,350 1004,338 995,326 990,310 985,296M1151,625 1154,639 1157,654 1158,668 1161,682 1167,696 1172,710 1176,724M1153,420 1157,405 1160,389 1164,374 1170,359 1173,343 1174,327 1177,312M1069,408 1062,396 1056,383 1050,370 1043,358 1037,344 1033,330 1026,318M1009,491 994,488 980,483 965,480 950,475 936,469 921,466 907,459M1070,411 1062,399 1056,385 1048,372 1041,359 1036,345 1029,332 1021,319 1018,304 1010,291M1037,539 1022,543 1007,546 993,551 978,557M1142,617 1144,631 1144,645 1145,659 1146,673 1148,687 1151,701 1153,715M1228,464 1239,454 1251,447 1263,440 1276,434 1289,427 1299,416 1310,408M1146,535 1156,543 1164,553 1175,561M1187,646 1192,660 1199,673 1204,687 1210,700 1214,715 1219,729 1221,744 1224,760 1228,774M1009,467 997,461 983,456 971,449 959,443 946,437 934,429 922,422 908,419 897,410M1252,567 1266,573 1280,578 1293,584 1307,589 1322,593 1336,597 1348,606 1362,612 1378,613M1039,544 1023,550 1007,554 990,554 973,558M1030,460 1017,451 1003,443 990,433 975,427 963,416 950,408M1096,626 1091,640 1087,653 1080,666 1075,680 1069,693 1061,706 1056,719M1083,598 1073,611 1063,624 1055,639 1042,650M1045,418 1036,407 1027,396 1019,384 1008,375 1001,362 989,354 983,341 973,331 963,321 956,308M1014,497 1000,493 986,492 972,488 959,483 945,482 931,479 915,485M1119,593 1115,607 1114,622 1106,635 1101,648 1101,663M1065,500 1047,496 1030,491 1014,485M1015,530 1000,532 984,531 969,535 954,537 938,533 923,535M1196,406 1203,393 1211,381 1218,367 1225,355 1233,342 1241,329 1249,317 1257,304M1049,416 1041,404 1031,392 1021,380 1010,369 1000,357 987,347 977,335 963,327 952,315M1103,394 1100,380 1097,365 1094,351 1091,337 1090,322 1087,308 1087,293M1048,629 1039,641 1030,654 1019,665 1009,677 999,689 985,698 978,712M1198,637 1205,650 1213,664 1221,676 1229,689 1238,702 1246,715 1254,728 1263,740 1273,752 1280,765M1238,591 1251,599 1264,608 1276,617 1290,624 1303,632 1316,640 1328,649 1342,657 1355,664 1369,672M1212,609 1221,621 1233,630 1239,644 1252,652 1260,665 1265,680 1278,688 1284,703 1290,717M1263,532 1278,535 1293,535 1308,538 1323,537 1338,536 1353,543 1369,539 1383,545 1398,545 1413,546M1092,629 1086,642 1081,655 1075,668 1072,682 1066,695 1061,708M1239,457 1252,450 1264,441 1276,434 1286,422 1302,420 1314,411 1326,404 1336,392M1166,613 1171,628 1175,643 1180,657 1185,672 1186,687 1189,703 1196,717M1163,646 1166,660 1170,674 1174,688 1177,702 1181,716 1185,730 1190,744 1194,758 1200,771M1057,604 1046,617 1033,629 1020,640 1012,656M1133,645 1134,660 1134,674 1135,689 1131,703 1131,718 1136,732 1131,747M1024,449 1011,442 999,433 986,425 974,415 957,412 944,405 932,395 922,383M1257,513 1271,511 1286,510 1301,510 1316,507 1331,508 1346,508 1361,503 1376,505 1391,502M1141,403 1142,388 1142,372 1143,357 1143,341 1142,326 1143,310 1142,295 1142,279M1075,421 1066,408 1060,394 1054,380 1044,368 1036,355 1030,341 1023,328 1012,316M1248,465 1261,457 1275,450 1288,443 1303,439 1317,432 1329,423 1342,416 1355,409 1366,396 1382,395M1211,629 1220,640 1228,652 1237,663 1245,674 1255,685 1263,697 1270,708 1283,717 1290,729 1299,740 1308,751M1013,458 1001,449 988,442 974,437 961,432 947,426 935,417 924,407 910,403M1061,547 1046,552 1031,557 1016,561 1001,564M1051,630 1042,642 1033,654 1026,668 1016,680 1008,693 999,705 988,716M1123,417 1122,403 1121,389 1119,375 1119,361 1119,347 1116,333 1117,319 1115,305M1124,635 1123,650 1122,666 1121,682 1116,697 1117,713 1116,729 1111,745M1203,406 1210,392 1219,380 1228,368 1237,355 1247,343 1252,328 1264,318 1271,304 1280,292 1294,283M1047,417 1037,407 1029,394 1019,384 1010,373 1003,361 994,349 984,339 975,328 964,318M996,517 980,517 965,518 949,515 933,516 917,515 901,521 885,525M1018,595 1005,602 993,609 981,617 971,626 955,629 944,638 930,641 920,653M1237,437 1248,428 1259,419 1270,410 1281,401 1292,392 1303,383 1315,376 1326,366 1336,356 1348,348M1033,435 1023,424 1010,416 1001,403 988,396 976,387 964,378 955,366 944,356 938,341M1237,466 1251,459 1264,450 1278,443 1293,438 1305,429 1320,424 1332,412 1348,410 1361,402M1004,507 988,504 972,504 957,499 941,497 925,495 910,492 894,489M1188,409 1195,395 1201,381 1208,368 1215,354 1223,341 1232,328 1236,313 1243,300M1143,640 1144,655 1144,670 1146,686 1145,701 1145,716 1144,731 1142,747 1142,762M1142,390 1143,374 1144,359 1148,344 1147,329 1148,314 1149,298 1155,283 1157,268 1161,253M1128,448 1129,433 1125,418 1124,403 1123,389M1082,639 1075,651 1069,664 1062,676 1058,690 1048,701 1042,714 1037,726 1029,738M1180,396 1186,382 1191,369 1196,354 1202,341 1208,327 1212,313 1218,299 1224,285 1231,272M1132,592 1132,610 1130,629 1134,647M1031,587 1020,596 1007,604 995,612 982,618 971,628 956,633 944,642M1003,566 989,570 976,574 963,582 950,587 935,590 923,597 909,602 896,608M1173,506 1189,500 1205,493 1220,485M1031,542 1016,545 1002,548 986,544 970,547M1230,583 1244,590 1256,599 1269,608 1283,614 1294,626 1308,632 1318,645 1333,649 1346,657M1071,422 1063,410 1055,397 1046,385 1039,371 1033,357 1024,346 1011,336 1008,320M1174,398 1177,384 1183,371 1187,357 1194,344 1197,330 1203,316 1207,303 1211,289 1217,275 1222,262M1035,610 1026,621 1014,629 1002,636 994,649 981,655 971,665 961,675 949,682M1066,482 1053,474 1041,465 1029,456 1017,447 1005,437M1008,485 995,478 980,477 967,472 952,469 938,465 925,460 914,446 900,440M1100,614 1095,629 1090,643 1086,658 1083,673 1077,687 1076,703M1185,479 1199,471 1210,460 1223,451 1239,446 1252,437M1042,610 1031,621 1021,632 1011,644 998,653 989,666 978,676 965,684M1113,402 1110,388 1107,374 1104,360 1101,345 1102,331 1098,317 1094,303 1085,290 1080,276M1227,463 1240,456 1253,448 1265,438 1277,430 1290,422 1304,416 1319,412 1329,399M1126,654 1125,668 1124,683 1122,697 1122,712 1119,726 1119,741 1116,755 1114,769 1111,784M1129,457 1131,440 1125,422 1130,405M1010,474 996,468 983,460 968,455 955,449 941,442 925,440 911,435 897,429M1161,613 1166,628 1172,643 1176,658 1182,673 1191,686 1195,701M1023,452 1011,445 999,438 987,430 976,422 963,416 950,410 938,402 927,394 914,389M1024,547 1009,550 994,552 980,561 966,566 950,568 936,575M1149,403 1152,387 1153,372 1157,357 1159,341 1164,326 1167,311 1172,296 1172,280M1225,484 1239,476 1255,473 1269,465 1283,459 1299,455 1313,447 1328,442M1043,595 1033,605 1021,614 1011,625 1000,634 991,646M1215,432 1225,422 1236,412 1247,402 1257,392 1268,383 1279,374 1293,366M1102,594 1095,607 1091,620 1082,633 1077,646M1232,575 1245,582 1259,589 1271,598 1284,606 1297,613 1309,623 1322,632 1334,642 1347,649M1236,442 1247,433 1259,425 1270,415 1281,406 1291,395 1302,386 1314,378 1323,367 1335,358M1004,477 990,472 976,467 962,463 948,458 934,455 920,449 907,443 892,440M1058,535 1043,536 1028,538 1013,540 998,538M1095,610 1089,623 1082,636 1079,651 1075,664 1066,676 1056,688M1032,549 1016,554 999,553 983,558 967,563M1131,623 1131,639 1133,655 1129,672 1133,688 1133,704 1131,720M1067,418 1059,404 1049,392 1040,379 1032,365 1024,352 1012,341M1105,639 1102,653 1098,666 1093,680 1089,693 1087,707 1083,721 1077,734 1072,747M1239,441 1251,433 1263,425 1273,415 1286,407 1297,399 1310,392 1322,383 1335,376 1344,365 1356,357M1125,386 1127,372 1122,358 1122,343 1121,329 1120,314 1119,300 1126,285 1118,271 1127,256 1124,241M1241,467 1254,460 1266,453 1279,447 1292,440 1305,434 1318,429 1333,426 1345,417 1358,412M1001,513 987,512 973,513 959,510 945,508 931,512 917,509 903,512 889,507M1017,515 1001,514 985,513 968,511 952,510 936,507 920,512M1222,441 1232,431 1242,422 1254,413 1264,403 1275,394 1285,385 1297,376 1307,367M1189,404 1197,392 1201,378 1211,367 1215,353 1219,338 1232,329 1236,315 1244,302 1249,289 1261,279M1134,457 1135,440 1136,422 1136,405 1130,387M1163,584 1172,598 1177,615 1182,631 1191,645M1080,397 1076,382 1069,368 1063,354 1058,339 1055,324 1050,309 1047,293 1046,277M1223,611 1235,621 1244,633 1255,644 1268,652 1275,667 1288,676 1297,688 1307,700 1316,713 1329,721M1090,651 1087,665 1081,678 1077,692 1073,706 1067,719 1062,732 1059,746 1052,759 1048,773M1062,428 1052,416 1043,403 1032,392 1022,381 1013,368 1003,357 991,346M1065,597 1056,609 1046,619 1035,629 1024,639 1015,650 1005,661M1084,509 1071,505 1057,504 1045,496M1103,484 1096,473 1088,462 1076,454M1260,531 1275,531 1290,533 1305,534 1320,535 1335,535 1350,533 1365,539 1380,536 1395,536 1410,540M1114,652 1113,667 1110,681 1111,695 1108,709 1103,723 1107,738 1100,751 1098,765M1057,604 1046,616 1034,627 1024,640 1015,653 1000,662 992,676M1143,395 1143,380 1146,365 1148,350 1149,335 1148,319 1153,304 1152,289 1152,274 1156,259M1039,611 1026,622 1015,635 1004,648 993,660 984,675M1062,455 1051,444 1038,435 1027,423 1016,412 1002,404M1093,419 1089,404 1083,390 1079,375 1075,361 1074,345 1071,330 1062,317M1045,607 1035,619 1025,629 1014,638 1003,648 995,661 984,670 979,685M1001,524 986,526 971,523 956,521 941,521 926,520 911,517 896,517M1036,462 1023,453 1011,445 997,437 985,428 974,417 961,408M1150,392 1154,378 1155,363 1156,348 1162,333 1167,319 1173,305 1170,289 1179,275M1162,645 1166,659 1168,673 1172,686 1176,699 1177,714 1181,727 1185,741 1191,754M1065,598 1055,608 1045,620 1038,633 1028,644 1018,655 1008,667M1119,435 1118,421 1117,407 1113,393 1115,378 1115,364M996,519 981,519 966,519 951,518 936,515 921,515 906,518M1106,539 1098,546 1088,549 1082,557M1053,446 1042,436 1030,426 1019,415 1005,407 994,396 981,388M1176,651 1180,665 1185,679 1190,693 1193,708 1197,722 1201,736 1204,751 1209,766M1106,409 1103,395 1101,381 1097,367 1095,353 1094,338 1094,324 1090,310 1086,296M1116,652 1114,667 1114,682 1111,697 1109,712 1111,728 1111,743M1054,411 1047,398 1036,388 1029,376 1019,365 1013,352 1001,343 989,334 984,320 969,313 965,298M1096,645 1093,659 1089,673 1083,687 1082,702 1075,715 1076,731 1073,746 1066,759M1149,563 1155,581 1163,597 1168,615M1156,656 1157,671 1159,686 1163,700 1165,715 1165,730 1168,745 1169,760M1251,586 1264,594 1279,600 1292,607 1304,618 1318,625 1331,634 1346,639 1359,646M1052,609 1042,620 1033,632 1023,642 1013,654 1005,667 998,680M1004,478 990,472 975,467 959,465 945,458 930,454 915,448 901,442 884,442M1046,544 1031,546 1016,550 1001,551 987,555 972,557M1105,573 1099,585 1091,597 1085,610 1079,623M1089,648 1084,661 1079,675 1074,688 1071,703 1068,717 1064,731 1057,743 1053,758M1024,471 1010,464 996,457 982,451 968,444 954,437 940,431 926,423M1229,428 1239,418 1248,407 1258,396 1268,386 1277,375 1287,365 1296,353 1304,341 1312,329 1320,317M1047,620 1035,632 1024,644 1012,656 1002,669 990,681M1008,467 994,462 980,455 966,449 952,443 937,440 922,436 909,428 895,423M1218,434 1227,422 1239,414 1245,400 1258,393 1268,383 1275,369 1286,361 1294,348 1301,335 1306,320M1016,520 1001,519 986,520 971,519 956,522 940,518M1127,387 1126,372 1126,358 1127,343 1127,329 1128,314 1125,300 1130,285 1125,271 1127,256 1127,242M1208,435 1218,424 1227,413 1238,402 1247,391 1257,380 1268,370 1277,358 1286,347 1298,337M1039,439 1029,429 1018,420 1007,412 996,403 985,395 972,387 961,379 950,370 936,364M1059,614 1050,625 1039,635 1032,649 1020,658 1011,669 998,678 995,694M1070,591 1059,602 1049,613 1040,626 1028,637 1017,647M1223,609 1235,618 1242,631 1254,640 1264,650 1274,661 1282,673 1297,679 1307,689 1317,700 1325,713M1265,495 1280,494 1295,489 1310,488 1325,487 1340,484 1355,484 1370,482 1384,474 1399,471 1416,478M1190,621 1197,634 1206,645 1214,658 1221,670 1231,681 1239,693 1247,705 1258,716 1264,728M1116,405 1114,390 1112,374 1109,359 1107,344 1105,328 1102,313 1102,298 1098,283M1175,397 1180,384 1182,369 1188,356 1191,342 1199,330 1202,316 1205,302 1205,287 1204,272 1211,259M1160,483 1170,471 1179,459 1186,445 1192,430M1210,425 1219,412 1228,399 1237,386 1245,372 1254,358 1262,345 1277,336M1011,463 998,457 985,452 973,445 959,442 945,437 932,431 919,426M1195,642 1202,655 1209,668 1213,682 1219,695 1226,709 1236,720 1243,733 1247,747 1248,762 1258,774M1190,477 1203,468 1217,460 1230,450 1242,439 1252,425M1026,559 1012,564 999,570 986,574 972,580 958,584 945,589M1123,648 1122,664 1120,679 1120,694 1121,710 1116,725 1117,740 1117,756 1114,771M1190,401 1196,387 1203,374 1210,360 1212,344 1219,331 1227,318 1233,304 1238,289 1237,272 1245,259M1227,425 1236,415 1246,405 1255,394 1265,384 1273,371 1283,361 1293,351 1299,337 1311,329 1321,319 1328,306M1161,569 1170,583 1177,599 1184,614 1188,631M1253,501 1268,499 1283,495 1298,496 1314,495 1328,490 1344,493 1359,492 1374,489 1389,484M1040,426 1029,415 1018,405 1008,395 999,383 987,373 976,364 967,352 955,342M1161,518 1175,516 1190,514 1204,511M1264,513 1279,512 1294,511 1310,512 1326,511 1341,510 1357,513 1372,512 1388,512 1403,514M1073,414 1067,401 1058,389 1053,376 1044,364 1038,350 1032,338 1025,325 1019,312 1016,297M1118,646 1116,660 1115,675 1110,689 1109,704 1104,718 1104,733 1098,747 1094,762M1069,639 1061,652 1056,665 1049,678 1042,691 1037,704 1027,715M1035,483 1019,478 1004,472 989,465 976,455 960,451 945,446M1009,482 994,478 980,474 966,468 951,466 937,462 921,461 906,459 892,456M1182,417 1187,403 1194,389 1200,375 1206,361 1207,344 1212,330M1172,392 1175,378 1180,365 1184,351 1189,338 1192,323 1196,310 1201,296 1204,282 1208,269M1126,387 1127,372 1127,357 1125,342 1129,327 1125,312 1129,297 1131,282 1127,267 1132,251M1107,415 1103,399 1098,384 1094,369 1089,353 1083,339 1079,323 1072,308M1268,528 1282,530 1296,529 1311,529 1325,531 1340,529 1354,528 1369,528 1383,527 1398,527 1412,526 1427,523M1248,589 1261,597 1275,603 1286,612 1299,619 1312,628 1324,635 1339,640 1352,647 1363,658 1376,665 1389,671M1038,520 1023,520 1008,519 992,520 977,518M1190,403 1197,390 1204,377 1209,363 1217,351 1224,338 1227,322 1234,310 1239,295M1001,504 985,502 970,497 954,499 938,492 923,488 907,487 892,481M1032,472 1019,464 1003,460 990,450 972,449 961,437 941,439M1179,394 1183,380 1188,365 1194,351 1197,336 1201,321 1205,306 1210,292 1212,277 1215,262 1220,247M1053,414 1045,400 1036,388 1027,375 1017,364 1010,349 1001,337 994,322 989,307 980,295M1033,430 1022,420 1010,410 1000,399 989,389 982,375 971,364 960,355 947,347 936,336M1253,537 1267,539 1281,541 1295,543 1310,544 1324,545 1338,549 1352,550 1366,552 1381,553 1395,557M1093,627 1089,641 1082,655 1076,668 1071,682 1063,694 1060,709 1055,723M1027,436 1015,427 1003,417 991,408 981,396 970,386 958,376 942,373 932,360 920,352M1239,497 1253,494 1268,491 1282,488 1297,486 1312,483 1326,480 1341,479M1230,614 1241,623 1250,634 1260,644 1272,652 1282,661 1293,670 1305,678 1314,688 1331,691 1339,703 1351,711M1253,554 1267,559 1281,560 1295,564 1310,566 1324,571 1338,572 1352,577 1367,580 1384,573M1051,423 1040,411 1028,400 1018,387 1010,373 995,364 982,354M1014,478 1000,473 986,468 973,462 959,459 946,450 932,448 919,439 904,438M1119,467 1116,452 1113,437 1108,422 1103,407M1014,455 1002,446 989,439 974,435 962,426 948,420 933,418 922,407 906,405M1160,393 1165,379 1168,364 1172,350 1176,335 1178,320 1186,306 1190,292 1190,277 1202,264M1078,619 1070,632 1065,647 1056,659 1044,670 1040,685 1029,696M1217,436 1227,424 1238,413 1249,402 1259,391 1269,378 1279,366 1288,353 1298,342 1306,327M1006,573 992,579 978,585 963,591 950,599 936,606 922,614 909,621M1038,620 1029,632 1017,642 1009,655 994,661 983,672 977,688 961,693 955,708M1223,460 1236,451 1249,442 1263,435 1275,426 1290,419 1303,411 1319,406 1331,396M1021,555 1006,561 990,562 974,567 960,576 944,579 931,589M1260,556 1274,559 1288,562 1302,565 1316,569 1329,573 1343,576 1358,578 1372,580 1386,582 1400,585 1414,589M1021,533 1005,535 990,534 975,538 959,539 943,533 928,533M1000,518 985,518 970,516 955,515 940,516 926,513 911,513 896,510M1250,503 1265,501 1281,500 1296,496 1312,497 1327,493 1343,494 1359,492 1375,495M1126,658 1124,672 1125,687 1122,702 1120,717 1119,732 1117,746 1115,761 1113,776 1106,790M997,535 983,537 968,539 954,539 940,543 926,545 912,545 898,547 884,551M1255,563 1269,570 1285,574 1300,579 1314,586 1330,590 1344,596 1356,611M1181,410 1187,396 1194,382 1202,369 1208,354 1215,341 1225,328 1233,315M1239,549 1252,554 1266,557 1281,557 1294,563 1309,563 1323,566 1336,572 1350,575 1364,578M1265,539 1280,540 1295,542 1309,545 1324,542 1339,544 1354,542 1369,543 1384,541M1062,547 1048,551 1035,556 1023,564 1006,559M1267,509 1282,510 1295,508 1309,506 1323,503 1337,504 1352,505 1365,503 1380,507 1394,503 1408,501 1422,505M1180,625 1185,639 1192,652 1198,666 1205,680 1209,694 1216,708 1222,722 1227,736M1111,445 1108,429 1105,414 1102,398 1101,382 1099,367M1180,631 1186,645 1192,659 1197,674 1203,688 1208,703 1215,716 1218,732 1224,746M1057,509 1042,506 1026,504 1010,505 994,502M1199,615 1206,628 1217,638 1225,650 1235,661 1241,674 1258,680 1265,693 1272,705M1181,419 1189,407 1195,394 1199,380 1204,367 1211,354 1223,345 1232,333 1239,321M1206,606 1216,616 1226,627 1236,638 1247,647 1257,658 1268,667 1278,678 1291,685 1302,695M1049,621 1041,633 1031,644 1023,655 1013,665 1002,674 993,685 982,695 978,710M1070,633 1063,647 1055,660 1047,673 1041,687 1036,702 1030,717 1024,731M1030,598 1018,609 1005,619 993,630 979,638 967,649 960,666M1076,580 1065,593 1052,605 1040,618 1031,633M1024,475 1010,468 996,461 982,454 968,448 955,438 941,430 927,424M999,533 983,534 967,535 951,533 935,533 919,531 903,530 887,532M1138,617 1139,631 1140,646 1140,660 1143,674 1145,689M1036,474 1022,466 1007,461 994,451 980,442 966,436M1110,416 1108,402 1104,388 1101,374 1099,360 1102,344 1100,330M1246,509 1261,508 1275,505 1290,502 1304,501 1319,499 1333,496 1348,492M1210,415 1219,404 1228,392 1235,380 1245,369 1255,359 1262,346 1274,337 1285,327 1295,316 1300,303M1241,588 1254,595 1266,606 1280,612 1292,621 1305,628 1321,631 1334,639 1344,651 1360,654 1371,665M1249,568 1263,573 1277,577 1291,582 1306,586 1319,593 1333,597 1347,602 1361,606M1261,481 1274,476 1287,472 1301,467 1314,463 1327,457 1340,452 1353,447 1367,442 1380,436 1393,431 1406,424M1165,529 1181,533 1197,536 1212,540M1215,553 1229,558 1241,565 1255,569 1269,573 1283,577 1295,586 1310,588M1109,451 1104,435 1098,420 1094,404 1097,386 1092,371M1018,564 1004,569 992,575 977,577 966,588 954,597 941,604M1176,394 1182,381 1184,366 1190,352 1196,338 1203,324 1208,310 1214,296 1217,281 1219,266 1226,252M1159,394 1161,380 1165,366 1165,351 1170,337 1176,324 1179,310 1179,295 1184,282 1180,266 1184,252M1195,527 1210,527 1225,526 1241,527 1256,529 1271,527M1006,535 992,537 978,538 964,541 950,543 936,548 922,549M1003,516 988,517 973,515 959,513 944,512 929,514 914,515 900,517M1072,403 1065,391 1059,378 1052,365 1048,352 1040,340 1034,327 1028,314 1025,300 1018,287M1116,640 1114,654 1113,669 1107,682 1110,697 1106,711 1104,725 1101,739 1099,753M1173,652 1177,666 1182,680 1187,695 1191,709 1198,723 1203,737 1209,751M1001,545 985,548 970,552 955,556 939,557 923,563 907,562 892,567M1236,436 1247,426 1259,418 1270,410 1279,397 1290,388 1303,381 1311,368 1322,359 1336,353 1346,343 1356,333M1244,551 1260,553 1274,562 1290,565 1305,570 1321,574 1337,574 1351,584M1019,528 1005,530 991,531 977,531 963,532 949,537M1170,645 1174,658 1177,672 1184,686 1187,699 1197,711 1197,727 1199,741M1117,657 1115,671 1115,686 1112,700 1110,714 1110,729 1110,743 1108,758 1109,772 1110,787M1047,627 1037,638 1029,650 1019,661 1007,670 997,680 987,691 975,700 967,712M1257,569 1271,573 1284,581 1299,584 1312,590 1326,597 1339,603 1353,608 1366,614 1379,622 1391,632M1156,437 1161,422 1164,405 1167,389 1170,373 1174,358 1175,341M1223,591 1233,601 1245,611 1258,618 1269,628 1284,633 1293,645 1308,651M1148,539 1157,551 1168,560 1178,570M1005,559 991,564 975,568 960,572 945,575 930,579M1011,461 998,455 986,447 974,441 960,436 949,427 936,421 923,415 911,408 897,404M1264,491 1280,488 1294,482 1310,481 1324,474 1339,470 1354,468 1369,463 1383,455M1145,644 1147,659 1149,674 1151,689 1154,704 1158,719 1157,735 1165,749M1252,583 1266,589 1279,596 1293,601 1305,610 1320,612 1334,617 1349,621 1360,632 1376,634 1389,640 1405,641M1092,648 1086,662 1083,677 1080,692 1078,708 1071,722 1068,737 1064,752 1066,769M1073,400 1067,388 1061,374 1055,361 1049,348 1044,335 1038,322 1031,309 1027,295 1022,281 1015,269M1046,532 1029,534 1012,538 994,534 978,540M1054,487 1040,480 1025,473 1011,464 998,455 983,450M1053,607 1043,617 1033,627 1021,636 1011,647 1002,658 989,665M1129,402 1130,386 1130,370 1131,354 1129,338 1132,322 1135,306M1064,416 1056,405 1048,393 1042,380 1033,369 1024,358 1018,345 1008,335 999,324 987,315M1246,447 1258,440 1269,431 1282,425 1294,417 1306,409 1318,401 1330,394 1343,387 1356,381 1368,373 1382,368M1087,605 1080,617 1073,630 1068,643 1061,655 1055,668 1050,681M1198,435 1208,424 1217,412 1227,401 1234,388 1244,377 1255,367 1266,357 1274,345M1262,495 1275,491 1290,489 1303,486 1317,483 1330,478 1344,476 1358,474 1371,463 1384,457 1399,459 1411,448M1096,488 1082,476 1067,465 1052,455M1016,535 1001,537 986,539 971,542 956,540 941,540 926,544M1162,411 1166,397 1171,383 1170,368 1174,354 1180,340 1182,326 1179,310 1185,297M1200,424 1208,411 1218,400 1226,387 1237,376 1245,363 1255,352 1264,340 1275,329 1285,317M1201,546 1216,550 1229,558 1244,559 1258,564 1273,565 1288,569M1164,641 1168,656 1171,670 1175,685 1179,699 1180,714 1184,729 1184,744 1188,758 1190,773M1117,435 1114,419 1113,403 1110,388 1108,372 1112,355 1108,340M1232,430 1243,420 1254,410 1264,399 1276,389 1288,380 1299,369 1310,360 1322,350 1333,340 1348,334M1000,492 985,489 970,485 955,481 940,480 925,475 911,472 895,471 881,465M1105,633 1102,648 1097,662 1093,677 1090,692 1084,706 1081,722 1074,736M1171,455 1179,442 1186,429 1197,417 1204,404 1210,390M1064,538 1050,543 1035,547 1021,551 1006,555M1259,507 1274,505 1289,506 1304,504 1319,504 1333,502 1348,496 1363,503 1378,499 1392,493 1407,492M1021,443 1010,434 998,427 986,419 974,410 964,399 951,393 941,382 931,372 918,365M1261,481 1275,478 1288,473 1303,470 1316,465 1330,460 1344,456 1359,457 1373,451 1386,447 1402,447 1416,444M1061,407 1054,395 1046,383 1037,371 1029,360 1021,348 1013,336 1005,324 997,312 986,302 978,290M1113,644 1112,659 1109,673 1108,688 1106,703 1102,717 1103,733 1101,747 1102,763M1059,636 1053,649 1045,661 1035,672 1027,684 1022,698 1014,710M1239,597 1251,605 1263,612 1273,623 1286,629 1295,641 1310,645 1318,657 1332,662 1342,674 1351,685M1001,493 987,490 973,488 959,485 944,483 930,480 916,479 901,476 887,476M1100,467 1091,456 1081,444 1081,427 1067,418M997,525 982,525 966,527 951,527 936,530 921,528 906,533 891,534M1202,434 1211,422 1222,411 1232,399 1242,388 1253,376 1264,366 1274,354 1288,346M1211,631 1220,642 1229,654 1234,669 1243,680 1252,692 1260,704 1265,719 1275,730 1279,746 1284,760M1171,646 1175,660 1183,674 1184,689 1190,702 1197,716 1199,731 1203,745 1215,757 1212,773M1235,611 1246,621 1258,630 1267,642 1279,651 1289,662 1301,670 1314,679 1324,690 1336,699 1347,709 1358,719M1202,478 1216,471 1229,462 1243,455 1257,448 1272,443 1288,438M1229,451 1240,443 1251,434 1265,428 1277,421 1289,413 1303,409 1313,398M1177,649 1182,662 1186,676 1191,689 1196,703 1201,717 1205,730 1209,744 1212,759 1217,772M1037,462 1024,455 1014,446 1001,440 988,433 977,424 965,417 952,412M1253,538 1268,540 1283,540 1297,544 1312,546 1327,543 1342,544 1357,547 1372,545 1387,546M1211,420 1220,409 1229,397 1238,386 1246,374 1255,362 1265,351 1274,339 1284,329M1076,642 1071,656 1062,669 1056,683 1050,697 1047,712 1038,725 1041,742 1028,753M1154,455 1159,440 1165,426 1169,411 1177,398M1189,414 1195,400 1204,388 1212,374 1219,361 1226,347 1234,334 1243,322 1252,309 1261,296M1029,593 1017,601 1005,610 993,619 981,628 970,637 957,645 946,655M1060,426 1052,412 1041,401 1030,390 1023,376 1008,368 999,355 992,341 975,334M1267,511 1281,510 1296,507 1310,508 1324,504 1338,502 1353,500 1367,499 1381,494 1395,492 1409,489 1424,485M1181,567 1192,578 1204,587 1216,596 1230,605 1241,615M1219,418 1229,408 1236,395 1246,385 1255,374 1264,363 1273,353 1282,341 1293,332 1300,320 1310,310 1316,296M1068,424 1059,411 1050,398 1043,383 1033,370 1024,357 1012,345M1060,476 1046,468 1034,456 1018,450 1002,443 992,427M1072,400 1065,387 1059,374 1052,361 1045,349 1039,336 1030,324 1023,311 1013,300 1005,288 996,276M1102,468 1092,455 1086,439 1077,426 1071,410M1028,531 1012,533 995,536 979,540 962,543 946,547M1174,408 1177,393 1183,379 1192,367 1195,352 1206,340 1206,324 1220,314 1227,300M1209,420 1219,409 1228,397 1238,386 1247,375 1258,364 1270,354 1280,343M1077,599 1068,612 1057,625 1048,638 1039,652 1026,663M1010,558 996,562 981,567 966,569 952,575 938,579 923,584 909,588M1194,640 1200,654 1208,667 1212,682 1219,696 1223,711 1234,722 1237,738 1242,753M1260,524 1275,524 1289,525 1304,523 1318,523 1333,524 1347,525 1362,523 1377,522 1391,521 1406,522M1181,397 1187,383 1193,368 1195,353 1204,340 1206,325 1212,311 1218,297 1222,282 1223,266 1229,252M1169,645 1172,659 1178,672 1182,686 1185,700 1191,713 1197,726 1197,741 1206,753 1206,768M1243,525 1257,525 1271,526 1286,526 1300,526 1314,526 1328,526 1342,526 1356,526 1371,527M1080,438 1070,426 1064,411 1055,398 1044,387 1035,374 1027,360M1151,392 1154,377 1154,362 1155,347 1160,332 1157,316 1164,301 1161,286 1165,271 1164,255M1094,591 1085,604 1079,619 1069,632 1062,646M1110,564 1102,578 1097,594 1092,609M1100,654 1096,669 1093,684 1091,699 1089,715 1086,730 1084,745 1080,760 1078,775M1181,649 1185,662 1191,676 1196,689 1203,701 1207,715 1212,729 1216,742 1222,756M1028,543 1013,545 998,548 984,553 970,556 956,561 940,559M1021,459 1009,452 997,445 985,436 972,430 961,421 949,413 938,404M1172,392 1176,378 1179,364 1184,350 1189,337 1190,322 1193,308 1197,294 1203,280 1207,267 1204,251M1240,443 1252,434 1263,425 1276,418 1287,409 1299,401 1310,392 1319,380 1329,370 1341,362 1353,354 1364,346M1235,442 1248,434 1258,423 1269,413 1281,405 1292,395 1303,385 1316,377 1325,364M1048,552 1035,557 1020,560 1006,567 993,575 979,580M1047,619 1036,631 1026,643 1015,655 1002,664 990,675 977,685M1201,428 1210,416 1218,402 1229,391 1239,380 1250,369 1259,356 1267,344 1277,332M1022,600 1011,609 998,616 987,625 976,634 965,645 955,655 944,665 931,672M1024,581 1011,588 999,597 985,602 975,613 961,619 950,629 937,634M1095,420 1089,407 1085,393 1083,379 1079,366 1076,352 1071,339 1068,325M999,548 984,553 968,553 952,556 937,561 921,559 907,568 891,571M1056,599 1045,609 1034,620 1021,629 1012,643 1001,654 991,665M1023,545 1008,549 993,553 977,553 962,559 946,558 932,567M1047,525 1033,526 1019,529 1005,524 992,533 977,533M1142,580 1144,596 1145,613 1153,628 1157,644M1112,388 1111,374 1107,361 1106,347 1102,333 1102,319 1098,305 1097,291 1091,278 1090,264 1092,249M1178,613 1183,626 1189,640 1197,652 1200,667 1207,679 1211,694 1219,705 1226,719M1064,405 1057,392 1049,380 1042,368 1034,355 1025,344 1017,333 1009,321 1001,309 991,298 982,287M1033,597 1022,605 1010,612 1000,622 988,630 977,638 965,646M1048,627 1038,639 1028,651 1019,664 1007,675 998,688 986,699 979,713M1255,464 1267,456 1281,452 1293,444 1307,439 1321,435 1333,425 1348,425 1361,417 1371,404 1386,403M1213,615 1222,626 1232,637 1241,648 1251,658 1262,668 1273,678 1281,690 1293,698 1303,709 1314,719M1119,415 1116,401 1114,386 1113,372 1109,358 1111,343 1108,329 1106,315 1100,301M1255,512 1269,512 1283,509 1297,509 1311,504 1325,505 1339,503 1353,498 1368,497 1382,496 1396,493M1141,552 1144,564 1146,577 1152,588M1139,443 1141,428 1144,414 1143,400 1145,386 1142,371 1145,357M1014,580 1001,585 989,592 976,598 964,606 951,612 939,619 927,627 915,634M1227,472 1240,465 1254,460 1267,453 1280,445 1292,436 1303,426M1260,476 1274,473 1287,467 1300,461 1315,458 1329,454 1343,451 1357,446 1372,445 1386,440 1400,438 1416,438M1041,424 1032,413 1020,404 1009,395 1000,382 990,372 976,365 968,352M1103,629 1100,643 1096,657 1090,670 1084,683 1082,698 1074,711 1069,724M1113,651 1108,666 1106,682 1103,697 1103,713 1100,729 1091,744 1090,759M1138,404 1139,389 1139,374 1143,359 1143,343 1147,328 1145,313 1144,298 1146,282M1007,468 994,463 981,458 969,449 956,444 944,436 931,431 917,426 904,420 893,410M1086,395 1079,382 1074,368 1070,354 1067,340 1060,327 1054,314 1047,301 1044,287 1037,274 1028,262M1123,394 1123,378 1122,363 1122,348 1123,332 1120,317 1120,302 1122,286 1124,271 1122,256M1239,451 1251,443 1264,436 1276,427 1290,422 1302,413 1312,403 1327,397 1341,393 1355,388M1116,388 1116,374 1114,359 1113,345 1109,331 1112,316 1110,302 1111,287 1113,272M1226,620 1236,631 1246,642 1256,652 1267,661 1276,673 1287,683 1298,693 1304,707 1317,715 1322,730 1336,738M1126,393 1127,377 1122,362 1125,347 1119,332 1120,316 1112,301 1111,286M1082,437 1075,425 1068,412 1062,399 1056,386 1051,372 1042,360M1013,535 997,537 982,540 967,544 952,545 937,547 922,554M1030,566 1016,573 1001,577 988,587 974,593 962,605 949,613M1216,430 1225,419 1234,408 1244,398 1252,386 1261,376 1269,364 1279,353 1286,341 1295,330 1302,317M1021,576 1008,583 994,587 981,594 968,602 955,608 941,615 929,625M1003,529 987,531 972,532 956,530 941,530 926,533 910,534 894,527M1091,392 1086,378 1082,364 1080,349 1074,335 1069,321 1064,307 1060,293 1061,277 1057,262M1212,413 1220,401 1228,390 1237,379 1245,367 1253,355 1261,344 1271,333 1279,321 1288,311 1296,299 1304,287M1039,621 1028,632 1018,644 1008,657 997,669 987,680 975,691 968,706M1101,654 1098,669 1094,684 1094,699 1085,713 1085,728 1077,742 1072,756M1239,439 1250,430 1262,422 1274,413 1286,405 1297,397 1310,389 1323,382 1333,372 1346,366 1355,354M1240,445 1251,436 1264,431 1274,420 1285,411 1297,404 1310,398 1320,388 1334,384M1065,624 1056,637 1049,652 1039,664 1027,676 1018,688 1009,701M1152,491 1163,477 1172,462 1182,448M1025,459 1012,452 1000,444 987,435 975,427 964,417 951,409 941,397 929,388M1239,439 1250,430 1262,421 1272,410 1282,401 1295,394 1305,383 1314,371 1326,363 1338,355 1347,343 1356,332M1018,593 1007,602 995,608 981,613 972,624 959,631 945,635 934,644 923,653M1114,650 1111,666 1109,683 1106,699 1109,715 1108,732 1103,748M1188,625 1195,638 1202,650 1207,664 1212,677 1221,689 1222,704 1228,718 1236,730M1037,428 1027,418 1017,407 1007,397 996,387 986,377 975,368 966,357M1098,608 1091,621 1084,633 1080,647 1077,661 1066,672 1060,685M1202,418 1210,407 1218,394 1225,382 1232,370 1240,358 1247,345 1253,332 1259,319 1264,305 1270,292M1244,541 1259,544 1275,546 1290,551 1306,552 1321,554 1337,559 1352,564 1368,561M1244,483 1258,477 1272,474 1285,469 1299,465 1312,456 1325,452 1340,449 1352,441 1366,436M1136,632 1137,648 1138,664 1138,680 1140,695 1140,711 1142,727 1143,743M1026,518 1011,518 996,519 982,518 967,519 952,522 937,522M1139,651 1139,667 1142,682 1142,698 1143,714 1144,729 1147,745 1154,760 1155,776M1241,593 1253,601 1266,608 1276,617 1290,622 1302,629 1313,639 1326,645 1337,653 1351,659 1362,668 1374,675M1237,439 1248,429 1260,420 1272,411 1283,401 1295,391 1307,382 1318,372 1327,359 1340,351 1350,339M1178,394 1183,380 1188,366 1193,352 1195,337 1202,324 1208,310 1211,295 1217,282 1222,268M1016,590 1002,597 988,604 975,613 958,616 945,624 932,634 914,633M1098,397 1095,383 1090,368 1087,354 1082,339 1074,326 1070,311 1064,297 1060,283 1052,269M1154,654 1157,668 1160,682 1162,696 1165,709 1168,723 1171,737 1172,751 1179,764 1183,778 1184,792M1032,614 1020,623 1009,634 998,644 987,654 977,665 963,672 950,679 938,689M1114,388 1112,374 1109,359 1107,345 1104,331 1100,317 1098,302 1094,288 1089,274 1086,260 1083,246M1245,594 1257,603 1270,610 1282,618 1294,626 1306,634 1317,645 1329,653 1342,660 1353,670 1365,678M1096,391 1092,376 1088,362 1082,347 1077,333 1071,319 1065,305 1059,290M1169,396 1175,382 1177,368 1183,354 1184,339 1194,327 1193,312 1203,299 1207,285 1212,272 1211,256M1170,396 1175,381 1180,366 1183,351 1185,336 1192,322 1190,305 1193,290 1199,276 1205,261M1131,652 1131,667 1132,682 1131,697 1133,712 1134,727 1136,742 1136,757M1223,616 1233,626 1242,637 1253,647 1264,655 1272,667 1285,674 1294,685 1305,693 1312,706 1326,713 1333,725M1042,421 1032,411 1023,400 1013,389 1004,377 995,367 985,356 976,345 968,333 957,323M1050,622 1041,633 1033,645 1024,656 1014,667 1005,678 995,688 987,700 977,710M1103,396 1100,380 1096,365 1094,350 1091,335 1087,319 1083,304 1081,289 1077,274M1254,581 1267,587 1280,592 1292,600 1305,606 1318,612 1332,616 1345,621 1358,626 1371,633 1384,638M1125,658 1123,672 1124,686 1124,701 1121,715 1121,729 1124,744 1121,758 1123,772 1119,786M1032,603 1020,613 1007,621 997,632 986,643 977,655 966,666 954,676M1182,609 1188,622 1197,633 1203,646 1210,659 1217,672 1222,685 1234,695 1242,707M1095,391 1091,377 1087,364 1084,350 1079,336 1076,322 1073,308 1068,295 1064,281 1060,267 1058,253M1018,487 1003,483 989,478 974,474 960,468 945,463 931,458 916,453M1053,580 1039,589 1026,600 1012,608 998,616 983,625M1013,460 999,453 987,444 970,442 959,431 942,429 930,419 913,418 899,412M1026,591 1014,599 1004,609 992,616 982,627 969,634 961,647 946,651M1119,643 1118,658 1117,673 1117,688 1116,703 1115,717 1115,732 1115,747 1116,762M1111,460 1107,443 1099,427 1088,413 1087,395M1252,557 1266,562 1280,567 1295,569 1310,573 1324,576 1338,583 1353,584 1368,586 1382,591 1397,595M1144,640 1145,656 1147,671 1150,686 1151,701 1156,716 1156,731 1163,746 1164,761M1055,429 1044,418 1036,405 1025,394 1015,382 1006,369 997,357 984,348 975,335M1006,473 992,468 979,461 965,455 952,449 938,442 925,435 912,426 899,419M1130,552 1129,565 1127,578 1123,590M1264,520 1279,521 1294,520 1309,519 1325,517 1340,512 1355,513 1370,512 1385,508 1400,504 1416,507M1031,508 1017,506 1003,504 988,501 974,496 960,493 946,490M1236,435 1247,425 1258,415 1269,407 1280,397 1289,386 1299,375 1310,366 1319,355 1328,342 1337,331 1350,324M1069,411 1063,397 1057,384 1047,373 1038,361 1033,346 1025,334 1022,319 1015,306 1005,295M1243,494 1259,491 1273,486 1288,481 1303,476 1318,471 1332,467 1347,462M1006,573 993,579 979,581 966,589 951,590 938,595 926,604 910,603 897,611M1219,440 1229,428 1240,416 1252,407 1265,397 1270,379 1281,368 1294,359M1224,598 1236,608 1247,618 1259,629 1275,634 1285,645 1297,655 1312,661 1325,669 1338,678M1248,508 1262,505 1276,504 1290,502 1305,500 1318,495 1333,496 1347,492 1362,492 1375,483M1080,631 1073,645 1064,658 1057,672 1048,686 1041,700 1028,711 1021,725M1153,651 1155,666 1158,681 1159,696 1162,711 1161,727 1161,743 1161,758M1205,526 1222,527 1239,531 1256,526 1272,538M1192,561 1205,568 1217,576 1231,583 1243,591 1254,601 1265,610M1220,419 1230,408 1240,397 1249,385 1259,374 1269,363 1278,351 1287,339 1296,328 1307,318 1316,306M1222,452 1235,445 1244,433 1256,425 1268,417 1282,411 1295,404 1309,398 1318,386 1336,385M1267,541 1281,544 1295,545 1309,549 1324,551 1338,552 1352,557 1366,561 1381,561 1394,566 1409,567M1088,649 1082,663 1076,677 1071,692 1066,707 1064,722 1054,735 1051,751 1047,766M1137,387 1139,372 1138,358 1138,344 1143,330 1138,315 1145,301 1142,287 1148,273 1146,258M1129,597 1129,612 1128,627 1126,641 1127,656 1125,671M1239,484 1253,480 1266,474 1282,473 1295,466 1309,461 1325,461 1339,456 1352,450M1061,475 1048,466 1034,459 1021,449 1006,444M1127,398 1125,384 1126,369 1125,355 1120,340 1125,326 1120,312 1121,297 1113,283 1116,268M1164,654 1168,667 1171,681 1175,695 1176,710 1182,723 1187,737 1190,750 1197,763M1191,606 1201,618 1209,630 1216,644 1227,654 1234,667 1247,676 1254,690 1264,701M1258,546 1273,548 1287,551 1301,557 1316,556 1330,561 1346,559 1359,569 1374,565 1389,567 1403,569M1265,499 1279,498 1293,492 1307,492 1321,489 1335,486 1349,488 1363,485 1377,480 1391,479 1404,473 1419,477M1216,586 1228,594 1239,603 1250,612 1261,620 1273,628 1286,634 1297,642 1309,650 1320,658M1250,467 1263,461 1276,454 1289,448 1303,443 1315,435 1328,429 1342,424 1355,418M1260,493 1275,490 1289,488 1303,483 1317,479 1332,480 1347,477 1361,475 1377,475 1390,468 1406,473M1240,460 1253,452 1266,444 1279,437 1293,430 1307,422 1322,417 1335,409 1349,403 1363,397M1232,449 1244,441 1256,433 1267,424 1280,416 1292,409 1304,401 1317,395 1328,385 1342,380 1355,373M1231,475 1242,467 1255,460 1269,457 1282,451 1294,444 1305,434 1318,429 1326,414 1341,413M1120,395 1119,379 1119,363 1115,347 1119,331 1112,315 1112,299 1119,282M1155,430 1158,417 1165,404 1165,389 1171,376 1172,362 1176,348 1186,336M1217,428 1227,417 1236,405 1245,394 1254,382 1262,370 1272,359 1279,346 1288,334 1298,324 1303,309M1022,561 1007,568 992,574 976,580 961,585 944,587M1128,607 1127,622 1124,637 1123,652 1122,667 1122,682M1190,406 1196,392 1203,379 1211,366 1217,353 1223,340 1229,326 1238,314 1242,299 1248,286 1256,274M1123,387 1122,372 1121,356 1121,341 1121,325 1120,310 1121,294 1122,278 1123,263 1124,247M1079,401 1073,388 1067,375 1059,363 1055,349 1051,336 1041,325 1038,311 1033,297 1024,286 1019,272M1167,624 1171,638 1178,651 1181,665 1184,680 1188,694 1189,709 1194,722 1203,735M1092,574 1083,586 1074,599 1065,612 1058,626M1111,389 1109,375 1106,361 1103,347 1099,333 1099,318 1095,304 1099,289 1089,276 1089,261 1087,247M1106,404 1103,390 1099,376 1095,361 1092,347 1086,333 1082,319 1076,306 1072,291M1267,515 1281,515 1295,515 1309,515 1323,511 1337,515 1351,510 1365,512 1379,514 1393,511M1191,412 1198,398 1206,385 1212,370 1219,357 1232,346 1242,334 1244,318 1253,305 1269,296M1240,536 1255,537 1270,538 1285,538 1299,542 1314,547 1329,543 1343,553M1227,440 1239,432 1250,422 1262,414 1271,402 1282,392 1293,384 1306,376 1321,371 1332,362M1203,526 1219,528 1236,529 1252,530 1269,535 1285,534M1029,464 1015,456 1001,448 987,441 975,430 961,424 949,412 936,403M1095,437 1089,423 1084,409 1077,396 1071,382 1064,369 1060,354M998,528 983,529 968,529 954,531 939,533 924,534 909,535M1230,434 1241,423 1252,412 1263,402 1275,392 1289,385 1298,371 1312,365 1319,349 1332,341 1345,332M1037,589 1025,596 1014,606 1002,614 992,624 979,631 971,644 958,650M1073,590 1062,599 1053,610 1044,622 1036,634 1021,641M1038,446 1027,436 1015,427 1004,416 993,406 982,395 969,387M1080,418 1072,405 1065,391 1060,377 1050,365 1046,350 1036,338 1030,323 1020,311M1267,519 1282,518 1296,518 1310,518 1324,517 1339,517 1353,517 1367,515 1381,510 1396,511 1410,507 1424,508M1122,426 1121,410 1121,395 1118,379 1118,363 1117,348 1116,332M1169,651 1172,665 1176,679 1178,694 1187,706 1190,720 1193,735 1192,750 1199,763 1200,778M1029,567 1015,575 1000,578 987,587 971,589 959,601M1023,591 1010,598 998,609 987,619 974,627 957,630 948,644 933,648M1211,630 1221,642 1228,655 1236,667 1243,679 1255,689 1264,701 1273,712 1276,728 1284,740 1296,750M1213,592 1225,602 1237,612 1249,621 1261,632 1276,638 1289,646 1302,654 1314,664M1035,445 1023,436 1010,427 998,418 986,409 971,402 959,393 945,386 930,379M1210,618 1219,630 1228,641 1239,651 1247,663 1257,674 1267,684 1274,697 1284,708 1293,719 1302,730M1029,435 1018,426 1008,416 996,408 985,398 974,388 962,380 952,369 941,360 927,353M1090,576 1081,587 1073,598 1061,607 1056,621M1008,472 994,466 981,460 968,455 955,448 941,444 927,438 915,429 901,424M1145,524 1154,525 1162,528 1171,529M1251,560 1266,565 1280,569 1294,573 1308,578 1322,584 1336,589 1351,593 1365,599 1379,603 1393,610M1056,509 1040,506 1025,504 1009,503 993,503M1094,634 1089,647 1085,662 1080,675 1074,689 1071,703 1064,716 1064,732M1143,434 1146,418 1148,402 1148,385 1151,369 1156,354 1158,338M1081,624 1075,639 1068,653 1064,669 1057,683 1055,700M1211,618 1219,630 1230,640 1241,650 1249,663 1259,673 1275,680 1285,690M1226,555 1241,559 1254,565 1269,568 1282,575 1296,581 1310,587 1324,590 1337,600M1012,569 997,576 982,582 966,589 951,595 936,603M1145,387 1147,372 1147,357 1149,343 1151,328 1153,314 1156,299 1158,285 1159,270M1010,514 993,513 977,511 961,509 945,505 929,507M1222,437 1232,427 1242,416 1254,408 1264,399 1275,389 1286,380 1295,369 1307,361 1316,350 1327,340M1076,419 1069,405 1062,391 1055,377 1047,363 1042,348 1035,333 1029,319M1234,432 1243,422 1256,416 1266,406 1276,395 1288,388 1300,379 1311,371 1319,359 1329,348 1345,345 1350,330M1018,532 1002,533 986,532 971,534 956,538 940,540 924,540M1135,386 1135,371 1137,355 1136,340 1136,324 1135,309 1137,293 1134,278 1136,262 1137,247M1197,403 1203,390 1212,378 1217,364 1228,353 1231,338 1238,325 1244,311 1259,303M1026,594 1013,603 1001,611 989,621 977,630 965,639 952,647 940,657M1069,409 1061,396 1055,381 1044,370 1038,355 1027,343 1018,330 1011,316 1003,303M1018,536 1003,537 987,538 972,540 957,542 942,546 927,549M1135,388 1137,374 1138,360 1134,345 1136,331 1138,317 1132,303 1140,288 1142,274 1138,260M1143,519 1152,520 1160,515 1170,515M1243,535 1257,535 1272,536 1286,539 1301,537 1315,541 1330,542 1344,546 1359,543 1374,539M1069,402 1062,389 1057,375 1050,363 1043,350 1037,337 1030,324 1025,310 1019,297 1013,284 1005,272M1028,456 1015,449 1002,441 989,433 977,424 962,420 950,411 937,402 923,396M1186,493 1199,485 1212,478 1226,472 1239,464M1068,402 1063,389 1055,378 1046,366 1043,351 1032,341 1026,328 1025,313 1017,302 1006,291M1268,524 1283,523 1298,523 1313,523 1328,528 1343,529 1358,527 1373,534 1388,533 1403,537M1027,459 1014,452 1001,444 990,435 976,430 965,420 951,414 939,406 926,399M1218,540 1233,543 1248,545 1263,552 1279,551 1293,558M1252,584 1266,590 1280,596 1293,603 1305,612 1320,617 1335,620 1348,628 1361,634 1377,637 1389,645 1404,649M1140,400 1142,385 1143,371 1143,357 1145,342 1149,328 1148,314 1151,299 1154,285 1155,271M1057,535 1042,537 1026,540 1011,547 995,551M1080,564 1066,574 1056,589 1043,601M1018,449 1006,441 994,432 982,424 970,415 957,407 946,397 931,393 921,382 908,375M1102,489 1092,475 1080,461 1063,454M1014,458 1000,452 987,444 975,434 960,429 947,421 931,419 920,407 906,401M1151,657 1154,672 1155,687 1159,702 1161,717 1165,732 1165,748 1170,763 1175,777 1178,792M1194,622 1201,634 1207,646 1215,658 1221,671 1229,683 1233,697 1237,711 1244,723 1252,735M1195,524 1209,524 1224,521 1238,525 1252,525 1266,522M1133,476 1133,459 1131,442 1130,425M1225,617 1236,627 1246,639 1260,647 1271,657 1283,666 1294,677 1301,691 1319,695 1330,705 1337,719M1090,408 1086,392 1082,376 1072,363 1066,348 1070,329 1065,313M1136,402 1138,387 1139,372 1136,357 1138,342 1139,327 1142,311 1141,296 1144,281M1137,650 1138,665 1138,679 1139,693 1139,707 1141,722 1139,736 1141,750 1140,765 1141,779M1103,649 1100,664 1097,679 1094,694 1090,708 1087,724 1083,738 1080,753 1077,768M1114,653 1112,668 1110,683 1108,699 1106,714 1103,729 1100,745 1095,760M1161,404 1164,390 1169,376 1172,361 1176,347 1182,333 1185,319 1190,305 1197,291M1248,489 1263,484 1278,480 1293,478 1308,474 1322,470 1338,468 1352,463 1367,462M1099,578 1091,590 1086,605 1076,617 1064,628M1009,540 994,541 980,546 965,544 951,551 937,556 922,559 908,565M1243,547 1257,550 1271,554 1285,556 1300,557 1313,562 1328,562 1342,567 1357,567 1372,567M1072,418 1065,406 1057,395 1052,381 1043,370 1038,357 1031,345 1023,333 1016,321 1010,308M1159,644 1162,658 1166,672 1170,686 1175,700 1178,715 1183,729 1186,743 1192,757 1197,771M1151,440 1154,426 1156,412 1159,398 1161,384 1161,370 1164,356M1121,428 1121,413 1119,398 1117,383 1115,368 1110,354M1173,438 1179,425 1186,413 1191,399 1197,387 1205,374 1212,362 1220,350M1139,657 1140,672 1141,687 1141,702 1141,718 1146,733 1146,748 1145,763 1150,778 1147,794M1094,406 1088,392 1086,377 1080,362 1077,347 1071,333 1068,318 1069,302M1157,412 1161,397 1163,383 1165,368 1170,354 1175,340 1174,325 1180,311 1183,297M1187,629 1195,642 1202,656 1209,670 1216,683 1220,699 1225,714 1231,728 1241,741M997,533 981,535 965,538 949,539 933,539 917,543 901,545M1153,408 1156,392 1161,377 1162,360 1165,345 1168,329 1177,314M1045,432 1034,421 1024,410 1013,399 1003,387 994,375 985,362 973,352 965,338M1012,475 999,469 985,464 971,458 957,452 943,446 931,437 917,432 903,426M1013,587 1000,594 987,601 973,607 960,613 947,621 933,625 920,634M1231,437 1242,426 1255,418 1263,405 1277,397 1288,386 1295,371 1306,361 1316,349 1329,341M1268,530 1282,533 1297,531 1311,535 1326,534 1340,537 1354,537 1369,542 1383,536 1397,545 1412,545 1427,540M1191,409 1198,395 1205,381 1212,368 1219,354 1229,342 1235,327 1242,314 1254,302 1258,287M1123,469 1122,454 1116,440 1117,424 1114,410M1183,401 1187,386 1196,374 1200,360 1208,347 1214,333 1222,320 1227,306 1232,292 1238,279 1250,268M1071,633 1063,645 1056,657 1048,670 1041,682 1034,695 1024,706 1016,718 1004,728M1014,579 1001,587 987,592 973,597 959,604 946,610 931,614M1011,503 997,502 983,497 969,498 955,495 941,492 927,489 912,491M1210,633 1218,645 1228,656 1236,668 1244,680 1254,691 1261,703 1270,715 1280,725 1288,737 1298,748 1307,759M1244,506 1259,503 1273,502 1287,501 1302,498 1316,497 1330,495 1345,494 1359,494 1374,493M1218,545 1231,550 1246,554 1259,559 1274,562 1288,567 1301,574 1315,576M1220,419 1230,407 1239,395 1249,383 1259,371 1266,357 1276,345 1286,333 1294,320 1301,305M1163,645 1166,660 1170,675 1175,689 1180,704 1184,718 1186,734 1195,747M1044,426 1033,416 1025,405 1013,396 1005,384 994,375 985,364 973,356 961,347 950,337M1016,551 1003,554 989,558 975,560 962,564 948,566 934,570M1003,492 989,489 975,486 961,483 947,477 932,478 918,477 903,475 890,469M1259,565 1274,571 1288,574 1302,581 1317,585 1331,592 1345,598 1360,603 1373,610 1388,615 1402,621M1268,518 1282,517 1296,516 1311,517 1325,517 1339,517 1353,518 1368,519 1382,520 1396,524M1137,620 1140,634 1141,648 1139,662 1139,676 1136,690 1136,704 1140,718M1151,641 1153,657 1152,673 1154,689 1157,705 1162,720 1169,735M1003,525 987,524 972,526 956,525 941,524 926,527 910,527 895,530M1248,508 1263,506 1278,505 1293,502 1308,502 1323,504 1338,498 1353,498 1368,498 1383,499M1240,483 1254,479 1268,473 1282,469 1296,463 1309,457 1323,452 1337,446 1353,446 1366,439M1051,631 1042,643 1033,656 1023,667 1015,681 1007,695 996,705 989,719M1261,478 1274,473 1288,469 1301,465 1315,460 1328,456 1342,452 1356,447 1369,442 1382,435M1256,489 1270,485 1284,483 1297,477 1310,472 1324,469 1337,464 1351,458 1364,453 1376,444M1043,615 1033,627 1020,636 1010,649 1001,662 988,672 983,689 973,702M1173,603 1178,617 1186,629 1193,642 1199,654 1207,667 1214,679 1217,694M1214,480 1226,473 1241,470 1252,459 1265,453 1280,451 1295,447 1309,443M1090,461 1080,450 1072,437 1065,424 1056,412 1050,398M1244,447 1256,439 1268,430 1280,423 1292,415 1304,407 1316,399 1329,392 1340,383 1353,376 1366,370 1379,363M1158,647 1162,662 1164,677 1165,692 1170,706 1173,721 1169,737 1174,752 1172,768 1171,783M998,502 984,499 970,498 956,495 942,492 929,489 915,488 900,488 886,491M1221,623 1231,634 1241,644 1250,655 1260,666 1270,676 1279,688 1289,698 1298,710 1309,720 1318,732 1327,742M1215,440 1227,430 1238,418 1249,407 1261,397 1272,385 1285,375 1297,365M1062,626 1053,639 1044,652 1036,665 1026,677 1016,689 1007,702 999,716M1150,653 1152,668 1153,683 1156,698 1157,713 1158,727 1157,743 1157,758 1155,773 1157,788M1026,449 1015,440 1003,433 990,428 980,417 968,409 956,402 942,397 932,387 918,382M1096,411 1091,396 1085,383 1083,367 1079,353 1075,338 1069,324 1061,311 1058,296M1020,590 1007,598 995,605 983,614 971,622 960,632 948,640M1047,602 1034,613 1022,623 1011,634 998,644 985,654 973,663M1156,644 1158,658 1162,672 1164,687 1164,702 1167,716 1171,730 1169,745 1172,760 1176,773M1016,491 1001,486 986,482 971,478 956,473 941,469 926,465 913,456M1100,454 1093,439 1085,425 1080,410 1069,397 1064,382M1071,624 1062,638 1053,652 1046,667 1036,680 1025,693M1101,643 1096,657 1096,673 1092,687 1092,703 1087,717 1087,732 1080,746 1086,763M1073,466 1061,454 1049,442 1035,431 1022,420M1091,593 1083,606 1075,619 1067,632 1057,643 1049,656M1036,435 1026,425 1015,415 1004,406 994,395 982,388 971,378 961,368 950,359 937,351M1017,529 1001,532 984,527 968,528 952,528 936,527 920,524M1176,452 1184,438 1192,424 1197,409 1205,395 1213,381 1217,365M1229,436 1241,427 1252,417 1264,407 1277,398 1288,388 1301,380 1314,372 1327,364 1341,356M1096,622 1091,636 1085,649 1081,663 1077,677 1072,690 1067,704M1252,486 1268,483 1283,478 1298,475 1314,472 1330,471 1346,469 1361,465M1217,427 1227,417 1237,406 1246,395 1253,383 1265,374 1274,364 1281,351 1292,341M1052,512 1035,510 1018,505 1000,502 983,503M1071,512 1053,508 1035,503 1016,501M1118,462 1113,448 1111,434 1108,420 1110,405M1086,455 1076,442 1069,428 1059,415 1050,401 1040,389M1189,399 1196,386 1202,373 1207,361 1211,347 1219,335 1224,322 1230,309 1235,296 1240,283 1251,273 1251,257M1239,462 1251,454 1264,449 1276,442 1289,434 1301,427 1313,419 1325,412 1337,404 1351,399 1361,389M1260,551 1275,553 1290,557 1306,558 1321,562 1336,566 1353,565 1368,569 1383,572M1125,390 1124,376 1123,362 1124,348 1123,334 1122,320 1121,306 1122,292 1122,277 1117,264 1118,249M1043,437 1033,425 1019,416 1009,404 995,395 984,384 972,373 957,366M1198,640 1204,653 1213,664 1218,677 1224,690 1231,702 1238,715 1244,728 1252,740 1260,752 1266,764 1277,774M1145,448 1148,434 1152,420 1151,406 1154,392 1156,378 1164,366M1243,456 1255,449 1268,441 1279,432 1291,423 1305,417 1317,408 1328,399 1339,388 1352,382M1178,492 1193,483 1207,475 1221,465 1236,457M1251,555 1265,559 1279,563 1293,568 1307,572 1321,578 1334,584 1348,589 1362,594 1376,599 1390,605M1166,402 1170,387 1175,372 1180,358 1182,342 1188,328 1189,312 1193,297 1200,283 1201,268M1137,584 1137,600 1140,616 1138,632 1135,649M1076,624 1067,637 1060,651 1051,664 1044,678 1035,691 1026,704M1009,563 994,568 979,572 965,578 949,582 934,587 920,593 906,601M1257,482 1271,479 1284,475 1298,471 1311,466 1325,462 1338,457 1350,450 1364,448 1377,443 1391,439 1403,432M1250,470 1264,465 1278,458 1292,453 1305,445 1318,436 1331,430 1346,426 1359,418 1373,412 1385,402M1266,521 1281,521 1295,522 1309,518 1323,522 1337,521 1351,516 1365,519 1380,518 1394,518 1408,513 1422,512M1265,509 1280,509 1295,505 1311,507 1326,502 1341,506 1356,502 1372,507 1387,501M1024,480 1010,474 996,468 982,461 968,455 955,448 940,444 927,437M1084,566 1073,576 1060,584 1051,595 1037,603M1084,648 1079,663 1074,677 1066,690 1065,706 1059,720 1052,734 1052,750 1048,765M1073,620 1066,634 1057,646 1051,660 1043,672 1038,686 1028,698 1023,712M1181,648 1186,662 1192,676 1196,690 1207,702 1213,716 1218,730 1225,744 1227,759 1240,770 1242,786M1054,411 1045,400 1038,387 1029,377 1021,365 1014,353 1007,340 995,331 988,319 982,306 972,296M1182,460 1192,447 1203,437 1214,425 1224,413 1234,402 1247,392M1267,510 1282,508 1297,508 1311,506 1326,506 1341,502 1356,501 1371,500 1385,498 1400,499 1415,496M1225,501 1239,498 1254,495 1268,490 1282,487 1296,483 1310,478 1324,474M1011,478 996,473 981,465 966,462 952,453 936,449 922,440 908,433M1211,599 1221,610 1231,621 1244,629 1253,640 1264,650 1271,663 1283,673 1291,685 1306,690M1059,526 1041,529 1023,530 1004,531M1241,593 1254,601 1267,609 1280,618 1294,624 1306,635 1317,646 1334,649 1343,662M1258,570 1273,575 1288,580 1301,587 1315,595 1330,598 1344,605 1355,618 1370,621M1219,608 1228,619 1241,627 1250,639 1261,648 1270,660 1283,668 1290,681 1302,690 1314,699 1324,710M1003,480 989,473 974,472 961,463 947,457 932,454 918,450 907,437 892,434M1144,655 1146,670 1148,685 1148,701 1149,716 1148,731 1150,746 1150,762 1147,777M997,534 983,536 968,535 954,538 940,538 926,539 911,538 897,537 882,536M1196,625 1205,638 1212,652 1220,665 1229,677 1235,692 1245,704 1250,719 1255,735 1265,746M1252,458 1265,452 1277,446 1288,437 1302,433 1313,423 1325,417 1335,406 1350,404 1358,389M1187,398 1192,383 1200,370 1204,355 1210,341 1217,327 1229,316 1234,301 1240,286 1243,271 1253,259M1079,645 1074,660 1067,674 1058,687 1053,702 1044,716 1036,729 1029,743 1019,756M1019,479 1006,475 993,468 980,464 965,463 954,453 939,451 924,451M1042,436 1033,425 1021,417 1010,408 1002,396 994,384 982,376 968,369M1096,635 1091,650 1086,664 1081,679 1076,693 1071,708 1066,722 1059,736M1229,560 1243,566 1258,569 1271,576 1285,582 1299,587 1313,595 1326,604M1050,425 1040,415 1032,402 1022,391 1013,380 1003,370 993,359 984,348 977,335 965,326M1122,493 1118,480 1110,468 1104,455M1239,558 1254,562 1267,568 1282,573 1296,579 1310,584 1326,583 1340,587 1353,597 1368,598M1191,567 1203,578 1215,586 1228,595 1237,608 1248,619 1259,629M1049,616 1039,628 1027,638 1018,651 1006,661 996,674 979,679 967,690M1051,604 1041,614 1032,625 1019,633 1012,646 999,653 990,664 975,669M999,550 983,554 966,557 950,561 933,564 917,569M1153,423 1157,408 1157,392 1164,377 1169,362 1166,345 1171,331 1175,315M1213,450 1224,441 1234,431 1245,422 1255,412 1266,403 1276,394 1285,382 1295,373 1304,362M1235,607 1246,616 1258,625 1269,634 1280,644 1291,654 1301,665 1312,674 1323,684 1335,693 1344,705 1357,712M1192,499 1206,493 1221,489 1235,483 1250,481 1264,475M1171,395 1175,381 1182,368 1185,353 1191,340 1195,326 1200,312 1206,298 1212,284 1220,272 1231,260M1210,416 1220,405 1228,393 1237,381 1243,368 1252,356 1260,344 1271,334 1280,323 1288,310 1295,297M1181,395 1186,381 1193,367 1200,353 1204,339 1212,325 1216,310 1224,297 1229,283 1234,268 1247,257M1209,634 1217,646 1225,658 1235,668 1243,680 1248,694 1257,705 1265,717 1275,728 1281,741 1291,752 1301,763M1183,646 1188,660 1194,673 1200,686 1200,701 1206,714 1213,727 1218,740 1218,756M1031,565 1018,571 1005,577 993,584 980,589 967,594 954,600M1234,475 1247,470 1259,461 1272,454 1286,451 1299,443 1311,435 1324,428 1338,425 1350,417M1114,459 1111,441 1106,425 1104,407 1100,390M1236,609 1248,619 1260,628 1270,639 1283,646 1294,657 1307,664 1319,674 1332,681 1342,693 1355,700 1370,706M1045,472 1032,462 1017,456 1004,446 989,439 977,427 962,422M1096,577 1089,590 1081,603 1069,613 1064,628M1066,641 1061,656 1051,668 1040,680 1033,694 1027,708 1017,720 1009,734 1002,747M1266,516 1280,515 1294,514 1308,515 1322,513 1336,512 1350,510 1364,511 1378,511 1392,510 1406,505 1420,508M1029,583 1017,591 1003,595 992,604 979,611 964,615 954,625 941,632M1191,417 1198,404 1205,390 1212,377 1219,364 1227,352 1232,338 1240,325 1246,311 1254,299M999,547 984,552 969,555 954,559 939,558 924,565 910,569 894,567M1012,549 996,552 982,556 967,562 952,565 936,565 921,566M1185,489 1197,479 1210,472 1224,466 1234,453 1247,445M1094,395 1089,380 1087,365 1080,351 1078,335 1074,321 1072,305 1066,291 1065,275M1076,642 1069,655 1063,670 1057,683 1048,696 1040,709 1035,723 1022,733 1016,748M1104,413 1100,398 1098,384 1093,369 1088,355 1084,341 1081,326 1077,312 1071,298M1113,388 1110,374 1109,359 1108,345 1105,331 1102,316 1100,302 1097,288 1096,274 1092,260 1092,245M1059,609 1049,620 1041,632 1032,644 1019,653 1014,668 1007,681M1094,632 1090,645 1086,659 1076,671 1072,684 1066,697 1057,709M999,524 983,525 967,525 951,525 936,524 920,525 904,525 888,526M1124,434 1124,417 1124,401 1124,385 1124,368 1126,352M1253,543 1267,545 1282,547 1296,549 1310,555 1325,553 1338,559 1352,564 1366,567 1381,567 1396,566M1179,639 1185,651 1189,665 1196,677 1200,691 1208,703 1215,715 1221,728 1234,738 1237,752M1184,648 1191,661 1197,675 1202,689 1208,703 1213,718 1215,733 1220,748 1229,761 1237,774 1241,788M1129,654 1130,669 1130,684 1129,699 1131,714 1129,729 1131,744 1129,759 1128,774M1049,607 1040,619 1030,630 1020,641 1010,653 1002,665M1032,603 1020,613 1007,623 995,633 982,643 969,652 956,661 941,668M1243,558 1257,562 1271,567 1285,571 1298,578 1313,581 1326,588 1340,594 1354,596 1367,604M1133,618 1134,633 1133,648 1137,663 1140,678 1140,693 1143,708M1181,588 1192,600 1201,614 1211,627 1217,642 1226,655 1236,668M1002,482 986,479 970,475 956,469 939,466 924,462 907,462M1033,483 1018,477 1004,471 988,467 974,459 957,456 943,448M1112,449 1108,433 1101,417 1101,400 1097,384 1093,368M1099,648 1095,661 1092,675 1089,689 1086,703 1082,717 1080,731 1077,745 1072,758M1198,568 1210,579 1225,586 1239,592 1253,600 1267,608M1077,479 1066,470 1055,461 1045,451 1033,444 1025,432M1099,561 1091,575 1076,585 1067,599M1263,541 1277,544 1291,547 1305,550 1319,551 1333,554 1347,557 1361,561 1375,562 1389,566 1402,572 1417,571M999,507 985,505 971,503 956,504 942,500 928,498 913,499 899,498 885,494M1079,640 1073,654 1067,668 1060,682 1052,695 1046,708 1039,722 1032,735 1024,748M1217,534 1231,537 1246,537 1261,538 1275,541 1290,538 1304,541 1319,539M1220,591 1231,601 1243,610 1255,619 1267,628 1282,634 1290,647 1303,656 1319,659 1332,667M1149,492 1156,482 1163,471 1165,457M1047,475 1033,468 1022,458 1010,449 996,443 985,432M1147,623 1152,639 1150,655 1153,671 1156,687 1152,703M1026,552 1012,557 997,560 981,562 966,566 951,568 937,575M1072,642 1066,657 1058,671 1050,684 1044,699 1039,714 1030,727 1016,738M1050,599 1040,609 1031,620 1020,629 1012,641 1002,651 991,660 984,672M1082,648 1076,663 1073,678 1067,692 1062,706 1056,720 1049,734 1046,749 1042,764M1165,653 1169,667 1171,681 1177,695 1180,709 1184,722 1190,736 1196,749 1202,762M1123,388 1121,374 1123,360 1118,346 1121,331 1115,317 1115,303 1115,289 1112,275 1104,261 1103,247M1026,467 1014,460 1000,456 987,449 976,441 963,435 947,433 935,426 921,423M1191,639 1199,651 1203,666 1210,679 1214,694 1221,707 1225,722 1235,733 1240,748 1240,764 1250,776M1079,647 1073,661 1067,675 1062,689 1054,702 1048,716 1039,729 1027,740 1023,755M1248,590 1260,598 1273,604 1285,610 1298,617 1310,624 1320,634 1334,638 1345,647 1358,653 1369,662 1379,673M1066,611 1057,622 1049,635 1040,647 1031,660 1021,671 1013,684M1058,495 1044,490 1031,482 1016,479 1004,468 990,465M1202,436 1210,425 1219,413 1228,403 1236,391 1245,380 1252,368 1258,354 1266,342 1275,331M1226,426 1236,416 1246,407 1257,398 1267,388 1276,377 1286,367 1297,358 1310,351 1321,341 1330,331 1342,323M1166,416 1170,402 1176,389 1180,375 1185,362 1189,348 1195,335 1200,322M1004,535 988,536 973,540 957,539 942,543 927,547 912,550 897,555M1203,408 1210,395 1221,383 1229,370 1238,358 1247,345 1260,336 1266,321M1255,489 1269,485 1282,480 1296,476 1310,473 1324,468 1338,462 1351,458 1365,451 1378,444 1391,437M1002,527 987,528 972,528 957,529 942,530 927,532 912,533 897,539M1245,575 1259,581 1273,588 1286,595 1300,600 1314,606 1328,611 1342,618 1356,624 1369,631 1384,634M1150,405 1154,390 1155,374 1154,358 1159,342 1160,326 1167,311 1165,295M1005,554 990,557 975,561 960,564 945,564 930,568 914,566 898,567M1139,494 1142,480 1149,468 1149,453M1206,633 1215,645 1223,658 1232,671 1240,684 1250,696 1257,709 1268,720 1274,734 1285,746 1293,758M1225,439 1237,430 1247,419 1259,410 1267,397 1279,389 1291,380 1302,370 1311,358M1267,506 1281,505 1296,502 1311,502 1326,498 1340,497 1355,494 1370,492 1385,490 1399,487M1224,428 1233,417 1244,408 1255,398 1264,387 1274,377 1285,367 1295,358 1308,350 1317,339M1155,595 1161,607 1165,621 1167,635 1173,648 1179,661 1185,673M1021,600 1008,607 999,618 986,625 975,634 965,644 950,647 938,655 928,666M1095,653 1090,666 1086,680 1083,694 1077,707 1075,721 1067,734 1064,748 1059,761 1055,775M1025,441 1014,432 1002,423 989,415 978,405 967,395 955,386 943,377 932,368 920,359M1032,433 1021,423 1009,413 996,404 984,395 973,385 961,376 947,369M1131,625 1132,640 1131,656 1130,672 1131,687 1135,703M1104,465 1096,451 1088,437 1085,420 1079,404M1060,408 1051,396 1046,382 1034,372 1028,359 1020,346 1015,332 1006,321 997,309M1249,591 1261,598 1273,606 1286,612 1299,619 1311,627 1324,633 1337,640 1349,648 1364,652M1001,529 987,529 972,530 958,531 943,530 928,526 914,525 900,531M1126,638 1125,653 1124,668 1122,683 1126,699 1120,713 1123,729 1119,744M1233,613 1243,623 1254,633 1264,644 1274,654 1284,665 1293,677 1304,687 1311,700M1015,559 999,563 984,568 970,576 954,579 941,588 925,591M1233,432 1244,423 1253,412 1264,403 1275,395 1283,382 1295,374 1302,361 1312,350 1324,343 1332,331 1341,319M1117,656 1116,670 1113,685 1113,699 1110,713 1109,728 1109,742 1108,756 1107,771 1105,785M1114,657 1112,671 1111,685 1109,699 1109,713 1110,728 1104,741 1101,755M1093,600 1085,614 1078,628 1068,641 1060,655 1050,668M1195,407 1203,395 1210,383 1215,369 1224,358 1232,346 1238,333 1247,322 1261,313M1016,467 1002,461 988,456 975,448 961,441 947,435 932,431 919,423 906,415M1249,477 1263,471 1277,467 1290,462 1304,456 1318,452 1332,447 1346,443 1359,437 1374,434M1144,616 1146,632 1148,648 1151,664 1152,680 1154,696 1159,712M1102,655 1099,670 1096,686 1094,701 1089,716 1090,732 1086,748 1086,764 1081,778M1195,642 1201,655 1208,668 1217,679 1220,693 1228,705 1232,719 1244,729 1246,744 1258,754 1260,769 1266,782M1234,544 1249,547 1264,550 1279,555 1294,558 1309,562 1324,567 1339,571 1354,574M1104,408 1101,393 1098,378 1093,364 1089,349 1087,334 1081,320 1075,305 1075,290M1246,592 1258,599 1271,606 1283,613 1294,623 1306,631 1320,636 1330,647 1341,657 1353,665 1368,668 1377,681M1067,636 1060,650 1053,663 1045,677 1038,690 1030,703 1024,718 1015,731M1240,551 1255,555 1271,558 1286,562 1302,564 1317,568 1333,569 1348,571 1364,575M1028,463 1013,456 999,447 985,439 970,432 953,428M1266,545 1280,547 1294,551 1308,552 1322,553 1336,554 1350,555 1364,558 1379,557 1393,559 1408,557 1421,560M1063,405 1055,393 1047,380 1039,367 1030,355 1022,342 1014,330 1004,318 996,306 985,295M1064,628 1056,640 1048,652 1041,665 1033,677 1027,690 1020,702 1012,714 1007,728M1140,635 1143,650 1142,665 1142,680 1150,695 1151,710 1149,725 1152,740M1022,495 1008,493 994,488 980,485 966,482 951,481 937,479 923,476M1141,395 1143,380 1145,365 1147,350 1148,335 1151,320 1155,305 1157,290 1156,275 1158,260M1180,413 1187,400 1192,387 1199,374 1205,362 1213,350 1217,336 1227,324 1235,312 1243,300M1243,561 1257,566 1270,570 1284,573 1298,576 1311,583 1325,583 1339,586 1352,591 1367,591 1382,594M1185,420 1192,407 1199,393 1204,379 1212,366 1217,351 1228,340 1229,323M1061,638 1054,651 1045,664 1037,678 1030,691 1020,703 1014,718 1007,731M1192,502 1205,497 1220,495 1234,491 1246,482 1262,482M1153,649 1156,663 1156,678 1159,692 1160,706 1160,721 1165,735 1166,749 1169,764 1168,778M1088,596 1078,609 1073,626 1063,639 1046,648M1083,399 1079,386 1074,373 1067,360 1061,347 1056,334 1049,322 1045,308 1042,294 1034,282 1035,267M1200,638 1206,651 1214,663 1223,675 1227,689 1234,702 1244,712 1250,726 1257,738 1266,750 1275,761M1028,444 1015,436 1005,426 992,419 983,408 970,400 959,391 948,381 940,369 930,358M1239,454 1252,446 1265,438 1278,431 1290,422 1304,417 1318,410 1331,403 1343,394M1112,656 1109,672 1108,687 1106,703 1104,718 1103,734 1101,749 1099,765M1235,442 1247,432 1259,423 1271,414 1285,407 1297,398 1310,389 1323,381 1338,376 1351,368 1361,356M1097,653 1092,668 1089,684 1082,698 1078,714 1074,729 1069,744M1098,445 1091,431 1086,418 1078,405 1073,391 1064,379 1056,366M1142,387 1143,373 1145,358 1145,344 1145,329 1142,315 1146,301 1144,286 1145,271 1142,257 1146,243M1265,506 1279,503 1293,501 1307,499 1321,496 1335,495 1349,491 1363,490 1377,490 1391,487 1405,485 1418,477M1219,541 1235,545 1251,549 1267,554 1283,557 1300,560M1122,455 1120,441 1119,427 1117,412 1115,398M1073,566 1061,575 1048,583 1038,595M1215,505 1229,502 1243,498 1257,496 1270,491 1284,486 1297,481 1311,476M1203,461 1215,452 1226,442 1239,435 1250,424 1261,415 1277,411 1288,401M1240,550 1254,554 1268,558 1283,561 1296,566 1310,571 1324,576 1340,574 1352,585 1366,590M1130,656 1130,671 1131,686 1130,700 1128,715 1128,729 1124,744 1123,758 1118,773 1115,787M1125,599 1122,614 1122,630 1120,645 1117,660 1112,675M1250,582 1263,590 1276,596 1290,601 1302,609 1316,614 1327,624 1342,627 1355,633 1365,645 1380,649 1392,657M1160,654 1165,668 1167,682 1172,696 1175,710 1176,724 1180,738 1183,752 1191,765 1201,778 1203,792M1078,399 1072,386 1067,372 1060,360 1056,346 1049,333 1042,321 1037,308 1031,295 1025,282 1017,270M1198,404 1205,391 1213,378 1219,364 1225,350 1234,337 1239,323 1247,309 1251,294M1055,444 1043,434 1032,423 1021,412 1011,399 1002,387 990,376 981,364M1245,469 1258,463 1273,457 1286,450 1300,445 1315,439 1329,434 1343,429 1358,425 1373,419M1018,545 1004,548 990,549 976,551 961,552 947,552M1003,487 988,483 974,477 960,472 946,469 930,468 917,459M1168,467 1179,455 1183,440 1192,427 1202,415 1207,400M1252,586 1265,592 1276,601 1290,606 1304,611 1315,620 1328,627 1340,634 1356,635 1366,647 1380,651 1394,656M1255,472 1269,466 1283,460 1297,453 1310,447 1324,441 1338,434 1352,429 1365,422 1379,416 1392,407M1105,406 1102,392 1098,379 1094,365 1089,352 1086,339 1080,325 1075,312 1074,298 1067,285M1138,577 1138,593 1142,608 1137,624 1145,638M1110,542 1104,550 1095,554 1089,561M1245,466 1258,459 1272,454 1284,446 1298,441 1311,435 1322,424 1334,417 1348,413 1360,404 1375,402M1175,569 1185,581 1195,594 1205,606 1215,618 1228,628M1125,614 1125,629 1122,644 1123,658 1121,673 1116,687 1116,702M1049,513 1033,512 1017,511 1001,514 986,513M1018,594 1006,603 993,611 980,618 969,626 958,637 946,644 934,653 920,659M1026,451 1013,442 1001,433 988,424 975,415 963,404 952,393 940,383 928,373M1205,537 1220,539 1235,545 1250,548 1264,553 1279,557M1030,506 1016,504 1002,500 988,498 974,495 960,493 945,493M1011,577 997,583 985,591 971,598 957,603 946,614 931,618 920,630M1255,510 1269,508 1283,507 1297,505 1311,502 1325,500 1339,498 1353,494 1367,490 1381,488 1395,484M1150,441 1153,426 1156,411 1161,397 1160,381 1165,367 1162,351M1064,625 1058,638 1047,649 1041,662 1035,676 1030,691 1018,701 1011,714M1078,635 1073,649 1067,662 1058,673 1052,687 1046,700 1038,712 1029,724 1023,737M1076,430 1067,419 1062,406 1052,395 1048,382 1040,370 1028,361 1025,346 1017,334M1127,394 1127,380 1127,365 1123,351 1124,337 1123,322 1120,308 1121,293 1122,279M1217,423 1228,412 1239,401 1247,389 1259,379 1270,369 1280,358 1293,348 1304,338 1317,330 1325,316M1036,494 1021,492 1006,487 992,483 977,481 963,475 947,476M1028,600 1017,608 1006,617 995,625 983,634 973,643 961,651 949,658 939,669M1195,594 1204,605 1214,615 1226,624 1233,637 1242,648 1252,658 1263,667M1199,494 1213,489 1225,482 1239,477 1251,469 1264,463 1277,456M1070,643 1062,656 1055,670 1047,684 1042,699 1033,712 1023,724 1019,740M1019,447 1008,439 996,431 985,423 973,415 962,406 951,398 940,389 929,380 919,370M1215,473 1229,466 1243,458 1255,447 1269,439 1286,437 1300,430 1311,417M1033,437 1021,428 1009,419 999,408 986,400 975,390 963,381 949,374 935,367M1064,601 1053,613 1042,625 1030,636 1019,649 1005,658M1067,477 1055,467 1041,461 1029,451 1020,438 1005,433M1024,589 1011,597 998,606 984,613 971,621 960,633 946,640 935,652M1154,404 1154,390 1158,376 1162,363 1162,348 1161,333 1166,320 1163,305 1174,292 1168,277M1149,389 1150,375 1154,361 1153,346 1159,332 1161,318 1162,303 1170,290 1173,275 1174,261 1181,247M1055,495 1040,490 1026,481 1010,480 995,473M1190,632 1198,645 1205,659 1209,674 1218,686 1223,701 1232,714 1241,726 1243,742 1250,756M1131,386 1130,372 1133,357 1134,342 1134,327 1135,312 1132,298 1137,283 1143,268 1144,253M1116,560 1111,570 1106,579 1101,589M1171,480 1183,467 1194,453 1208,442M1030,576 1017,582 1005,590 991,593 978,598 964,603 953,611 937,610M1257,484 1271,480 1285,476 1299,474 1312,468 1327,470 1339,462 1354,461 1368,460 1384,463M1050,448 1039,437 1027,428 1015,418 1002,408 990,399 976,391 965,380M1109,393 1107,379 1104,365 1102,351 1100,337 1096,323 1096,309 1093,295 1090,281 1087,267M1261,485 1275,482 1289,477 1302,473 1316,469 1330,467 1344,461 1357,457 1371,454 1386,454 1400,450 1413,444M1011,559 997,564 982,566 968,569 954,575 938,575 925,582 909,580M1117,657 1117,671 1113,685 1113,700 1109,714 1109,728 1105,742 1102,757 1102,771 1097,785M1259,563 1273,569 1288,572 1303,574 1317,581 1332,581 1346,590 1362,587 1378,588M1055,465 1043,454 1029,447 1019,434 1006,425 996,413 980,409M1010,536 995,538 980,540 965,544 950,542 934,541 920,552M1102,584 1096,599 1086,612 1083,629 1074,642M1191,550 1205,558 1220,564 1234,570 1249,576 1263,585M1052,628 1043,639 1034,650 1024,661 1015,672 1004,681 994,691 984,701M1242,589 1254,598 1267,606 1280,612 1295,617 1308,624 1320,632 1336,635 1349,641 1361,650 1374,658M1108,629 1105,643 1102,658 1097,672 1093,687 1089,701 1085,715 1078,729M1138,548 1140,562 1148,574 1152,586M1196,520 1211,521 1226,518 1242,520 1257,518M1145,643 1147,658 1149,674 1149,689 1150,705 1149,721 1148,737 1147,752 1147,768M1041,526 1024,529 1006,527 989,524 971,529M1084,416 1078,403 1072,390 1068,376 1062,363 1050,352 1047,338 1043,324 1034,312M1221,611 1231,622 1243,631 1251,644 1262,654 1272,665 1282,676 1288,691 1301,699 1307,714M1197,626 1206,638 1213,650 1222,661 1230,673 1235,686 1245,697 1256,707 1265,718 1271,731 1280,742M1107,541 1100,551 1090,557 1080,562M1165,544 1179,551 1191,560 1206,564M1097,416 1091,402 1086,388 1081,374 1077,360 1068,348 1062,334 1058,320 1049,307M1126,645 1124,660 1123,675 1122,690 1122,705 1124,720 1121,736 1122,751 1118,766M1054,437 1044,427 1034,416 1023,406 1013,396 1005,383 993,374 981,366 973,353M1233,535 1248,537 1263,538 1278,539 1293,539 1308,542 1323,539 1338,538 1353,537M1148,389 1151,374 1149,358 1153,343 1152,328 1157,313 1158,298 1153,282 1164,268M1201,615 1211,626 1218,638 1228,649 1235,662 1247,671 1255,683 1265,693 1275,704 1281,717M1113,657 1111,672 1108,687 1105,702 1103,718 1102,733 1097,748 1096,764M1231,607 1242,616 1252,626 1263,635 1275,643 1286,651 1297,661 1309,669 1320,678 1333,684 1345,692 1356,702M1080,535 1064,540 1048,543 1032,544M1261,525 1275,528 1290,526 1305,526 1320,529 1334,528 1349,535 1364,531 1378,536 1393,539 1408,539M1187,398 1192,384 1198,370 1206,357 1208,341 1217,328 1222,313 1224,298 1227,282 1233,268 1241,255M1138,390 1139,376 1139,362 1139,347 1141,333 1139,319 1137,305 1139,291 1143,277 1143,263 1139,248" fill="none" stroke="#8af7ca" stroke-width="1"/></svg>
<div class="t " style="left:1117px;top:897px;color:#e8e8e8;letter-spacing:-0.36px;font-size:10.5px;font-weight:bold">top -Y</div>
<div class="a" style="left:952px;top:132px;width:329px;height:260px;background:#434343;"></div>
<div class="a" style="left:952px;top:132px;width:329px;height:37px;background:#fff;"></div>
<div class="t " style="left:953px;top:141px;line-height:20px;color:#8e8e8e;letter-spacing:-0.09px;font-size:15px">atrix Maya</div>
<svg class="a" style="left:952px;top:185px" width="30" height="95" viewBox="952 185 30 95"><defs><radialGradient id="lg" cx=".5" cy=".5" r=".5"><stop offset="0" stop-color="#b9b0f0"/><stop offset="1" stop-color="#7f78cc"/></radialGradient></defs><circle cx="926.300" cy="231.700" r="46.900" fill="url(#lg)" stroke="#ee9a30" stroke-width="3"/><path d="M952 196c8 8 15 22 17 38M952 206c7 9 12 20 13 34M952 218c5 8 8 18 8 30M952 232c3 8 4 14 3 24M957 193c7 10 12 24 13 40M952 250c2 6 2 10 1 16" stroke="#d6cefa" stroke-width="1.800" fill="none"/></svg>
<div class="t " style="left:1049px;top:185px;color:#ccc;letter-spacing:-0.19px;font-weight:bold">ORNATRIX MAYA v2.0.1.12610</div>
<div class="t " style="left:979px;top:211px;;letter-spacing:-0.07px">Copyright ©, Ephere Inc. 2015-2017</div>
<div class="t " style="left:979px;top:237px;;letter-spacing:-0.16px">Developers: Marsel Khadiyev, Ivan Kolev, Pavel Kokolemin,</div>
<div class="t " style="left:979px;top:250px;;letter-spacing:0.02px">Serguei Kalentchouk, Nikolay Shtinkov</div>
<div class="t " style="left:979px;top:276px;;letter-spacing:-0.10px">Designers: Marsel Khadiyev, Jeordanis Figuereo</div>
<div class="t " style="left:979px;top:302px;;letter-spacing:-0.01px">Contributors: Serguei Krikalev, Andrew Krivulya</div>
<div class="t " style="left:979px;top:328px;;letter-spacing:-0.05px">This product is protected under US Patent 6,720,962</div>
<div class="btn" style="left:979px;top:367px;width:200px;height:20px"></div>
<div class="t " style="left:979px;top:370px;width:200px;text-align:center">Close</div>
<div class="a" style="left:0;top:0;z-index:5">
<div class="a" style="left:108px;top:96px;width:844px;height:870px;background:#2b2b2b;border:1px solid #2a6399;border-top:2px solid #1c5a8e;border-right:2px solid #1f5c91"></div>
<div class="a" style="left:109px;top:98px;width:841px;height:37px;background:#fff;"></div>
<div class="a" style="left:109px;top:135px;width:2px;height:830px;background:#35678f;"></div>
<div class="a" style="left:111px;top:137px;width:838px;height:830px;background:#2b2b2b;border:1px solid #6e6e6e"></div>
<svg class="a" style="left:110px;top:98px" width="841" height="37" viewBox="110 98 841 37"><rect x="118.500" y="106" width="19" height="19.500" fill="#d9f1f1"/><path d="M121 121.500v-14h4l3.500 7l3.500-7h4v14h-3.800v-8l-2.600 5h-2.200l-2.600-5v8z" fill="#17939b"/><path d="M121 121.500v-14h4l0 14z" fill="#0f7a86"/><rect x="125.500" y="122.300" width="8" height="1.600" fill="#2c9aa2"/><path d="M798 115.500h12" stroke="#000" stroke-width="1"/><rect x="856.500" y="110.500" width="11" height="11" fill="none" stroke="#000" stroke-width="1"/><path d="M915.500 110.500l11 11M926.500 110.500l-11 11" stroke="#000" stroke-width="1.100"/></svg>
<div class="t " style="left:143px;top:108px;line-height:18px;color:#000;letter-spacing:-0.24px;font-size:15px">Render View</div>
<div class="a" style="left:112px;top:138px;width:836px;height:50px;background:#444;"></div>
<div class="t " style="left:120px;top:140px;;letter-spacing:-0.26px">File</div>
<div class="t " style="left:153px;top:140px;;letter-spacing:0.12px">View</div>
<div class="t " style="left:193px;top:140px;;letter-spacing:-0.12px">Render</div>
<div class="t " style="left:245px;top:140px;;letter-spacing:-1.06px">IPR</div>
<div class="t " style="left:276px;top:140px;;letter-spacing:0.28px">Options</div>
<div class="t " style="left:333px;top:140px;;letter-spacing:-0.03px">Display</div>
<div class="t " style="left:385px;top:140px;color:#777;letter-spacing:-0.17px">Render Target</div>
<div class="t " style="left:471px;top:140px;;letter-spacing:-0.04px">Help</div>
<svg class="a" style="left:112px;top:157px" width="838" height="30" viewBox="112 157 838 30"><path d="M118 165.5h16" stroke="#dcdcdc" stroke-width="3" stroke-dasharray="2.6 1.4"/><rect x="118" y="169" width="16" height="10" fill="#dcdcdc"/><rect x="144.5" y="162.500" width="17" height="17" fill="none" stroke="#4fb3bf" stroke-width="1.300"/><path d="M148 167.5h10" stroke="#dcdcdc" stroke-width="3" stroke-dasharray="2.6 1.4"/><rect x="148" y="171" width="10" height="5" fill="#dcdcdc"/><path d="M172.500 167.500h4l1.500-2h5l1.500 2h3v9.500h-15z" fill="#dcdcdc"/><circle cx="180" cy="172" r="3.300" fill="#555"/><circle cx="180" cy="172" r="1.700" fill="#dcdcdc"/><path d="M198 158.500h-3.500v25h3.500M216 158.500h3.500v25h-3.500" fill="none" stroke="#3fdc3f" stroke-width="1.500"/><path d="M204 164.5h10" stroke="#cfcfcf" stroke-width="3" stroke-dasharray="2.6 1.4"/><rect x="199" y="168" width="11" height="7" fill="#d6b84a"/><rect x="201" y="170.500" width="11" height="7" fill="#b99a32" stroke="#e6cf6d" stroke-width=".800"/><rect x="203.500" y="173" width="11" height="7" fill="#c8a93c" stroke="#e6cf6d" stroke-width=".800"/><text x="210" y="181" font-family="Liberation Sans,sans-serif" font-size="8.500" font-weight="bold" fill="#f0e6f6">S</text><path d="M222.5 160V184" stroke="#2e2e2e" stroke-width="1.2"/><path d="M230 165.5h16" stroke="#dcdcdc" stroke-width="3" stroke-dasharray="2.6 1.4"/><rect x="230" y="169" width="16" height="10" fill="#dcdcdc"/><text x="231.300" y="177.500" font-family="Liberation Sans,sans-serif" font-size="8" font-weight="bold" fill="#333" letter-spacing="-.2">IPR</text><g opacity=".35"><path d="M259 165.5h12" stroke="#7a8890" stroke-width="3" stroke-dasharray="2.6 1.4"/><text x="257.500" y="178" font-family="Liberation Sans,sans-serif" font-size="8" fill="#8899a0">IPR</text><circle cx="266" cy="167" r="4" fill="none" stroke="#6f868e" stroke-width="1.500" stroke-dasharray="4 2"/></g><path d="M280.5 160V184" stroke="#2e2e2e" stroke-width="1.2"/><path d="M288 165.5h16" stroke="#dcdcdc" stroke-width="3" stroke-dasharray="2.6 1.4"/><rect x="288" y="169" width="16" height="10" fill="#dcdcdc"/><circle cx="300.500" cy="175.500" r="4" fill="#5aa6c8" stroke="#444" stroke-width=".800"/><circle cx="300.500" cy="175.500" r="1.500" fill="#444"/><circle cx="300.500" cy="175.500" r="4.800" fill="none" stroke="#5aa6c8" stroke-width="1.600" stroke-dasharray="1.500 1.500"/><path d="M311.5 160V184" stroke="#2e2e2e" stroke-width="1.2"/><text x="318.500" y="174.500" font-family="Liberation Sans,sans-serif" font-size="8.500" fill="#e8e8e8" letter-spacing="-.2">RGB</text><path d="M335 176v2.500h-2.500z" fill="#e8e8e8"/><circle cx="354" cy="172" r="7.500" fill="#4a4a4a"/><path d="M354 172l-5.300-5.300a7.500 7.500 0 0 1 10.600 0zM354 172l5.300 5.300a7.500 7.500 0 0 1-10.600 0z" fill="#575757"/><text x="372" y="177" font-family="Liberation Sans,sans-serif" font-size="14.500" font-weight="bold" fill="#e4e4e4" letter-spacing="-.5">1:1</text><path d="M396.5 160V184" stroke="#2e2e2e" stroke-width="1.2"/><rect x="403.500" y="162.500" width="17" height="17" fill="none" stroke="#4fb3bf" stroke-width="1.300"/><rect x="406" y="165" width="12" height="12" fill="#dcdcdc"/><path d="M407 176l3.500-5.500l2.500 3l1.500-1.500l2.500 4z" fill="#3a3a3a"/><circle cx="413.5" cy="168.5" r="1.700" fill="#3a3a3a"/><rect x="431" y="165" width="12" height="12" fill="#dcdcdc"/><path d="M432 176l3.500-5.500l2.500 3l1.500-1.500l2.500 4z" fill="#3a3a3a"/><circle cx="438.5" cy="168.5" r="1.700" fill="#3a3a3a"/><path d="M440 173l6 6M446 173l-6 6" stroke="#4fb3bf" stroke-width="2"/><path d="M454.5 160V184" stroke="#2e2e2e" stroke-width="1.2"/><rect x="459" y="158.500" width="142" height="24.500" rx="2" fill="#5d5d5d"/><rect x="581" y="158.500" width="20" height="24.500" rx="2" fill="#646464"/><path d="M581.500 159v24" stroke="#4e4e4e"/><path d="M586.500 168.500h9l-4.500 5z" fill="#d8d8d8"/><path d="M603.5 160V184" stroke="#2e2e2e" stroke-width="1.2"/><circle cx="620" cy="172" r="8" fill="#dedede"/><g stroke="#444" stroke-width="1.300" fill="none"><path d="M620 164l3.500 7M627 168l-6.500 3M627.500 175h-7.500M620 180l-3.500-7M613 176l6.500-3M612.500 169h7.500"/></g><circle cx="620" cy="172" r="2.200" fill="#444"/><rect x="636.500" y="163.500" width="37.500" height="17.500" rx="2" fill="#2b2b2b"/><rect x="677.500" y="170" width="80" height="3.500" rx="1.700" fill="#2e2e2e"/><rect x="714" y="165.500" width="7" height="13.500" rx="2" fill="#cdcdcd"/><circle cx="772" cy="172" r="6.500" fill="#dedede"/><path d="M772 165.500a6.500 6.500 0 0 1 0 13z" fill="#444"/><rect x="773.500" y="164.500" width="7.500" height="15" fill="#dedede"/><path d="M773 167.500a5 5 0 0 1 0 9z" fill="#444"/><rect x="789" y="163.500" width="37.500" height="17.500" rx="2" fill="#2b2b2b"/><rect x="830.500" y="170" width="17" height="3.500" rx="1.700" fill="#333"/><rect x="857" y="166" width="3" height="11" fill="#5c5c5c"/><rect x="862.500" y="166" width="3" height="11" fill="#5c5c5c"/><rect x="929" y="166" width="10.500" height="10.500" rx="1" fill="#6a3b3b"/></svg>
<div class="t " style="left:462px;top:165px;">Redshift</div>
<div class="t " style="left:641px;top:166px;">0.00</div>
<div class="t " style="left:794px;top:166px;">1.00</div>
<div class="t " style="left:875px;top:166px;color:#777;letter-spacing:-0.60px">IPR: 0MB</div>
<div class="a" style="left:122px;top:391px;width:816px;height:458px;background:#fff;"></div>
<svg class="a" style="left:122px;top:391px" width="816" height="458" viewBox="122 391 816 458"><defs><clipPath id="cc"><polygon points="684.7,633.8 678.7,663.6 667.1,691.7 650.2,716.9 628.7,738.4 603.5,755.3 575.4,766.9 545.6,772.9 515.2,772.9 485.4,766.9 457.3,755.3 432.1,738.4 410.6,716.9 393.7,691.7 382.1,663.6 376.1,633.8 376.1,603.4 382.1,573.6 393.7,545.5 410.6,520.3 432.1,498.8 457.3,481.9 485.4,470.3 515.2,464.3 545.6,464.3 575.4,470.3 603.5,481.9 628.7,498.8 650.2,520.3 667.1,545.5 678.7,573.6 684.7,603.4"/></clipPath></defs><polygon points="684.7,633.8 678.7,663.6 667.1,691.7 650.2,716.9 628.7,738.4 603.5,755.3 575.4,766.9 545.6,772.9 515.2,772.9 485.4,766.9 457.3,755.3 432.1,738.4 410.6,716.9 393.7,691.7 382.1,663.6 376.1,633.8 376.1,603.4 382.1,573.6 393.7,545.5 410.6,520.3 432.1,498.8 457.3,481.9 485.4,470.3 515.2,464.3 545.6,464.3 575.4,470.3 603.5,481.9 628.7,498.8 650.2,520.3 667.1,545.5 678.7,573.6 684.7,603.4" fill="#b2b2b2"/><g clip-path="url(#cc)" font-family="Liberation Sans,sans-serif" font-weight="bold" font-size="58" fill="#c2c2c2" letter-spacing="0.6"><text x="357" y="588">Redshift</text><text x="569" y="733">Redshift</text></g></svg>
</div>
<div class="a" style="left:1414px;top:78px;width:4px;height:840px;background:#3a3a3a;"></div>
<div class="a" style="left:1418px;top:78px;width:428px;height:18px;background:#373737;"></div>
<div class="tab" style="left:1418px;top:78px;width:114px;height:18px;background:#3e3e3e"></div>
<div class="t " style="left:1431px;top:80px;color:#a8a8a8;letter-spacing:0.27px">Modeling Toolkit</div>
<div class="tab" style="left:1534px;top:78px;width:107px;height:18px;background:#444"></div>
<div class="t " style="left:1548px;top:80px;color:#eee;letter-spacing:0.26px">Attribute Editor</div>
<div class="t " style="left:1427px;top:101px;;letter-spacing:-0.30px">List</div>
<div class="t " style="left:1459px;top:101px;;letter-spacing:-0.28px">Selected</div>
<div class="t " style="left:1517px;top:101px;;letter-spacing:-0.42px">Focus</div>
<div class="t " style="left:1562px;top:101px;;letter-spacing:0.17px">Attributes</div>
<div class="t " style="left:1628px;top:101px;;letter-spacing:0.06px">Show</div>
<div class="t " style="left:1672px;top:101px;;letter-spacing:-0.04px">Help</div>
<div class="a" style="left:1424px;top:134px;width:422px;height:17px;background:#373737;"></div>
<div class="tab" style="left:1426px;top:134px;width:78px;height:17px;background:#3e3e3e"></div>
<div class="t " style="left:1439px;top:137px;color:#a8a8a8;letter-spacing:-0.49px">rsHair1SG</div>
<div class="tab" style="left:1506px;top:134px;width:62px;height:17px;background:#444"></div>
<div class="t " style="left:1519px;top:137px;color:#eee">rsHair1</div>
<div class="t " style="left:1502px;top:187px;;letter-spacing:-0.00px">RedshiftHair:</div>
<div class="fld" style="left:1575px;top:182px;width:154px;height:22px"></div>
<div class="t " style="left:1580px;top:187px;">rsHair1</div>
<svg class="a" style="left:1740px;top:172px" width="22" height="40" viewBox="1740 172 22 40"><g fill="none" stroke="#cfcfcf" stroke-width="1.300"><path d="M1746 175.500h11.500v11h-11.500"/><path d="M1757 198.500h-13.500v11h13.500"/></g><path d="M1742.500 178l4.500 3l-4.500 3z" fill="#cfcfcf"/><path d="M1755.500 201l4.500 3l-4.500 3z" fill="#cfcfcf"/></svg>
<div class="btn" style="left:1770px;top:161px;width:70px;height:20px"></div>
<div class="t " style="left:1770px;top:165px;width:70px;text-align:center;color:#eee;letter-spacing:-0.42px">Focus</div>
<div class="btn" style="left:1770px;top:183px;width:70px;height:20px"></div>
<div class="t " style="left:1770px;top:187px;width:70px;text-align:center;color:#eee;letter-spacing:-0.50px">Presets</div>
<div class="btn" style="left:1770px;top:205px;width:35px;height:20px"></div>
<div class="t " style="left:1770px;top:209px;width:35px;text-align:center;color:#eee;letter-spacing:0.06px">Show</div>
<div class="btn" style="left:1807px;top:205px;width:34px;height:20px"></div>
<div class="t " style="left:1807px;top:209px;width:34px;text-align:center;color:#eee">Hide</div>
<div class="t " style="left:1536px;top:265px;">Sample</div>
<svg class="a" style="left:1578px;top:239px" width="64" height="64" viewBox="1578 239 64 64"><defs><radialGradient id="sp" cx=".38" cy=".36" r=".7"><stop offset="0" stop-color="#bf9069"/><stop offset=".55" stop-color="#a06f48"/><stop offset="1" stop-color="#3e2818"/></radialGradient><filter id="nz" x="0" y="0" width="1" height="1"><feTurbulence type="fractalNoise" baseFrequency="1.1" numOctaves="2" seed="3"/><feColorMatrix type="matrix" values="2.2 0 0 0 -.6  0 2.2 0 0 -.6  0 0 2.2 0 -.6  0 0 0 0 1"/><feComposite operator="in" in2="SourceGraphic"/></filter><clipPath id="sc"><rect x="1578" y="239" width="64" height="64"/></clipPath></defs><rect x="1578" y="239" width="64" height="64" fill="#2b2b2b"/><circle cx="1608.500" cy="270" r="24.200" fill="url(#sp)" clip-path="url(#sc)"/><path d="M1603.500 259.500h38.500v19h-16v13h16v11.500h-38.500z" fill="#7d6f69"/><path d="M1603.500 259.500h38.500v19h-16v13h16v11.500h-38.500z" fill="#7d6f69" filter="url(#nz)" opacity=".28"/></svg>
<div class="sec" style="left:1429px;top:314px;width:417px"></div>
<div class="a" style="left:1436px;top:319px;border:5px solid transparent;border-top:6px solid #eee;border-bottom:0"></div>
<div class="t " style="left:1463px;top:317px;color:#c8c8c8">General</div>
<div class="sec" style="left:1433px;top:337px;width:413px"></div>
<div class="a" style="left:1441px;top:342px;border:5px solid transparent;border-top:6px solid #eee;border-bottom:0"></div>
<div class="t " style="left:1467px;top:340px;color:#c8c8c8;letter-spacing:-0.30px;font-weight:bold">Internal Reflection</div>
<div class="t " style="left:1430px;top:361px;width:148px;text-align:right">Color</div>
<div class="a" style="left:1586px;top:361px;width:68px;height:12px;background:#ffb570;"></div>
<div class="sl" style="left:1658px;top:365px;width:159px"></div>
<div class="kn" style="left:1810px;top:361px"></div>
<div class="chk" style="left:1826px;top:362px"></div>
<div class="t " style="left:1430px;top:382px;width:148px;text-align:right">Weight</div>
<div class="fld" style="left:1586px;top:379px;width:68px;height:19px"></div>
<div class="t " style="left:1591px;top:383px;">0.500</div>
<div class="sl" style="left:1658px;top:386px;width:159px"></div>
<div class="kn" style="left:1734px;top:382px"></div>
<div class="chk" style="left:1826px;top:383px"></div>
<div class="t " style="left:1430px;top:404px;width:148px;text-align:right">Glossiness</div>
<div class="fld" style="left:1586px;top:401px;width:68px;height:19px"></div>
<div class="t " style="left:1591px;top:405px;">0.600</div>
<div class="sl" style="left:1658px;top:408px;width:159px"></div>
<div class="kn" style="left:1749px;top:404px"></div>
<div class="chk" style="left:1826px;top:405px"></div>
<div class="t " style="left:1430px;top:427px;width:148px;text-align:right">Samples</div>
<div class="fld" style="left:1586px;top:424px;width:68px;height:19px"></div>
<div class="t " style="left:1591px;top:428px;">16</div>
<div class="sl" style="left:1658px;top:431px;width:188px"></div>
<div class="kn" style="left:1670px;top:427px"></div>
<div class="a" style="left:1586px;top:448px;width:16px;height:16px;background:#2b2b2b;"></div>
<div class="t " style="left:1608px;top:449px;;letter-spacing:0.22px">Highlights Only</div>
<div class="sec" style="left:1433px;top:468px;width:413px"></div>
<div class="a" style="left:1441px;top:473px;border:5px solid transparent;border-top:6px solid #eee;border-bottom:0"></div>
<div class="t " style="left:1467px;top:471px;color:#c8c8c8;font-weight:bold">Diffuse</div>
<div class="t " style="left:1430px;top:492px;width:148px;text-align:right">Color</div>
<div class="a" style="left:1586px;top:492px;width:68px;height:12px;background:#ffb570;"></div>
<div class="sl" style="left:1658px;top:496px;width:159px"></div>
<div class="kn" style="left:1810px;top:492px"></div>
<div class="chk" style="left:1826px;top:493px"></div>
<div class="t " style="left:1430px;top:513px;width:148px;text-align:right">Weight</div>
<div class="fld" style="left:1586px;top:510px;width:68px;height:19px"></div>
<div class="t " style="left:1591px;top:514px;">0.000</div>
<div class="sl" style="left:1658px;top:517px;width:159px"></div>
<div class="kn" style="left:1660px;top:513px"></div>
<div class="chk" style="left:1826px;top:514px"></div>
<div class="t " style="left:1430px;top:535px;width:148px;text-align:right;letter-spacing:-0.09px">Translucency Weight</div>
<div class="fld" style="left:1586px;top:532px;width:68px;height:19px"></div>
<div class="t " style="left:1591px;top:536px;">0.000</div>
<div class="sl" style="left:1658px;top:539px;width:159px"></div>
<div class="kn" style="left:1660px;top:535px"></div>
<div class="chk" style="left:1826px;top:536px"></div>
<div class="sec" style="left:1433px;top:557px;width:413px"></div>
<div class="a" style="left:1441px;top:562px;border:5px solid transparent;border-top:6px solid #eee;border-bottom:0"></div>
<div class="t " style="left:1467px;top:560px;color:#c8c8c8;font-weight:bold">Transmission</div>
<div class="t " style="left:1430px;top:580px;width:148px;text-align:right">Color</div>
<div class="a" style="left:1586px;top:580px;width:68px;height:12px;background:#ffb570;"></div>
<div class="sl" style="left:1658px;top:584px;width:159px"></div>
<div class="kn" style="left:1810px;top:580px"></div>
<div class="chk" style="left:1826px;top:581px"></div>
<div class="t " style="left:1430px;top:601px;width:148px;text-align:right">Weight</div>
<div class="fld" style="left:1586px;top:598px;width:68px;height:19px"></div>
<div class="t " style="left:1591px;top:602px;">0.500</div>
<div class="sl" style="left:1658px;top:605px;width:159px"></div>
<div class="kn" style="left:1734px;top:601px"></div>
<div class="chk" style="left:1826px;top:602px"></div>
<div class="t " style="left:1430px;top:623px;width:148px;text-align:right">Length Glossiness</div>
<div class="fld" style="left:1586px;top:620px;width:68px;height:19px"></div>
<div class="t " style="left:1591px;top:624px;">0.900</div>
<div class="sl" style="left:1658px;top:627px;width:159px"></div>
<div class="kn" style="left:1794px;top:623px"></div>
<div class="chk" style="left:1826px;top:624px"></div>
<div class="t " style="left:1430px;top:645px;width:148px;text-align:right">Width Glossiness</div>
<div class="fld" style="left:1586px;top:642px;width:68px;height:19px"></div>
<div class="t " style="left:1591px;top:646px;">0.500</div>
<div class="sl" style="left:1658px;top:649px;width:159px"></div>
<div class="kn" style="left:1734px;top:645px"></div>
<div class="chk" style="left:1826px;top:646px"></div>
<div class="sec" style="left:1433px;top:667px;width:413px"></div>
<div class="a" style="left:1441px;top:672px;border:5px solid transparent;border-top:6px solid #eee;border-bottom:0"></div>
<div class="t " style="left:1467px;top:670px;color:#c8c8c8;font-weight:bold">Primary Reflection</div>
<div class="t " style="left:1430px;top:690px;width:148px;text-align:right">Color</div>
<div class="a" style="left:1586px;top:690px;width:68px;height:12px;background:#fff;"></div>
<div class="sl" style="left:1658px;top:694px;width:159px"></div>
<div class="kn" style="left:1810px;top:690px"></div>
<div class="chk" style="left:1826px;top:691px"></div>
<div class="t " style="left:1430px;top:711px;width:148px;text-align:right">Weight</div>
<div class="fld" style="left:1586px;top:708px;width:68px;height:19px"></div>
<div class="t " style="left:1591px;top:712px;">0.100</div>
<div class="sl" style="left:1658px;top:715px;width:159px"></div>
<div class="kn" style="left:1674px;top:711px"></div>
<div class="chk" style="left:1826px;top:712px"></div>
<div class="t " style="left:1430px;top:733px;width:148px;text-align:right">Glossiness</div>
<div class="fld" style="left:1586px;top:730px;width:68px;height:19px"></div>
<div class="t " style="left:1591px;top:734px;">0.850</div>
<div class="sl" style="left:1658px;top:737px;width:159px"></div>
<div class="kn" style="left:1787px;top:733px"></div>
<div class="chk" style="left:1826px;top:734px"></div>
<div class="a" style="left:1424px;top:752px;width:422px;height:8.5px;overflow:hidden"><div class="a" style="left:-1424px;top:-752px">
<div class="t " style="left:1430px;top:757px;width:148px;text-align:right">Samples</div>
<div class="fld" style="left:1586px;top:754px;width:68px;height:19px"></div>
<div class="t " style="left:1591px;top:758px;">16</div>
<div class="sl" style="left:1658px;top:761px;width:188px"></div>
<div class="kn" style="left:1670px;top:757px"></div>
</div></div>
<div class="a" style="left:1575px;top:766px;width:147px;height:1px;background-image:linear-gradient(90deg,#6a6a6a 1px,transparent 1px);background-size:3px 1px"></div>
<div class="t " style="left:1432px;top:771px;color:#ccc;white-space:pre;letter-spacing:-0.39px;font-weight:bold">Notes:  rsHair1</div>
<div class="a" style="left:1423px;top:784px;width:423px;height:100px;background:#2b2b2b;"></div>
<div class="btn" style="left:1420px;top:889px;width:150px;height:26px"></div>
<div class="t " style="left:1420px;top:896px;width:150px;text-align:center;color:#eee">Select</div>
<div class="btn" style="left:1572px;top:889px;width:153px;height:26px"></div>
<div class="t " style="left:1572px;top:896px;width:153px;text-align:center;color:#eee;letter-spacing:0.15px">Load Attributes</div>
<div class="btn" style="left:1728px;top:889px;width:150px;height:26px"></div>
<div class="t " style="left:1728px;top:896px;width:150px;text-align:center;color:#eee">Copy Tab</div>
<div class="a" style="left:0px;top:918px;width:1846px;height:7px;background:#444;"></div>
<div class="a" style="left:0px;top:925px;width:1846px;height:28px;background:#444;"></div>
<div class="t " style="left:4px;top:932px;font-size:10px;color:#bbb">help available for this to</div>
<div class="a" style="left:985px;top:927px;width:312px;height:21px;background:#2b2b2b;border-radius:2px"></div>
<div class="t " style="left:952px;top:931px;">MEL</div>
<div class="a" style="left:1305px;top:927px;width:541px;height:21px;background:#2b2b2b;border-radius:2px 0 0 2px"></div>
<div class="t " style="left:1311px;top:932px;;letter-spacing:0.05px">Info:  [Redshift] Rendering done - total time for frame 1: 0.98s</div>
<svg class="a" style="left:0;top:953px;z-index:9" width="1846" height="45" viewBox="0 953 1846 45"><rect x="0" y="953" width="1846" height="45" fill="#000"/><rect x="109" y="953" width="1.500" height="45" fill="#0b2238"/><rect x="0" y="968" width="3" height="9" fill="#fff"/><rect x="0" y="978.500" width="3" height="9" fill="#fff"/><circle cx="53" cy="978" r="8.200" fill="none" stroke="#fff" stroke-width="2.400"/><rect x="105.500" y="969.500" width="15" height="17" fill="none" stroke="#fff" stroke-width="1.200"/><path d="M103.500 971.500h-2v13h2M122.500 971.500h2v13h-2" fill="none" stroke="#fff" stroke-width="1.200"/><path d="M165.500 979c0-8 5-14 12.500-14c7 0 11.500 5 11.500 12v2.500h-16.500c.5 4 3.500 6 7.500 6c3 0 5.500-.800 7.500-2v5c-2.500 1.500-5.500 2.300-9 2.300c-7.500 0-12.500-4.500-12.500-11.500c0-4.500 2.500-8 6-10c-2 2-3 4.500-3.300 7h10c0-3.500-1.500-6-5-6c-5.500 0-9.500 4-12.200 9.500z" fill="#1e88e0"/><path d="M225 967h10l2 2.500h16v19h-28z" fill="#f5d36e"/><path d="M225 972h28v16.500h-28z" fill="#fbe08a"/><rect x="231" y="979" width="16" height="10" fill="#3ba0e6"/><rect x="234" y="982.500" width="10" height="6.500" fill="#fbe08a"/><rect x="227" y="968" width="3" height="1.500" fill="#d9a93a"/><path d="M294 970c0-7 13-7 13 0" fill="none" stroke="#f2f2f2" stroke-width="1.600"/><rect x="286.500" y="969.500" width="29" height="23" fill="#f4f4f4"/><rect x="294.500" y="974" width="6" height="6" fill="#e8502f"/><rect x="301.500" y="974" width="6" height="6" fill="#7fba2c"/><rect x="294.500" y="981" width="6" height="6" fill="#2aa3ec"/><rect x="301.500" y="981" width="6" height="6" fill="#f7b916"/><circle cx="363" cy="977.500" r="14" fill="#e74434"/><path d="M363 977.500L350.900 970.500A14 14 0 0 0 356 989.600z" fill="#2fa457"/><path d="M363 977.500L356 989.600A14 14 0 0 0 370 989.600L377 977.500z" fill="#2fa457"/><path d="M363 977.500l14 0A14 14 0 0 1 363 991.500l-7-2z" fill="#f9c82c"/><path d="M363 977.500h14a14 14 0 0 0-1.900-7z" fill="#f9c82c"/><path d="M350.900 970.500A14 14 0 0 1 375.100 970.500H363z" fill="#e74434"/><circle cx="363" cy="977.500" r="6.400" fill="#fff"/><circle cx="363" cy="977.500" r="5" fill="#4b8bf0"/><rect x="410" y="963" width="30" height="30" rx="2.500" fill="#e9e9e9"/><circle cx="427" cy="968.500" r="2.300" fill="#1a1a1a"/><path d="M414 977c4-4 9-6 14-4.500c2 .600 3 0 4.500-1.500M426.500 973c-1 5-6 10-12.500 13M422 981c5 0 10 2 14 7M426 973.500l5 4" fill="none" stroke="#1a1a1a" stroke-width="1.800" stroke-linecap="round"/><rect x="472" y="963" width="30" height="30" rx="5" fill="#b8892c"/><rect x="474.500" y="965.500" width="25" height="25" rx="4" fill="#5b7fc4"/><path d="M487 966l2.500 5l5-2.500l-1.500 5.500l5.500 1.500l-4.500 3.500l3.500 4.500l-5.500.500l-.5 5.500l-4.500-3.500l-4.500 3.500l-.5-5.500l-5.500-.500l3.500-4.500l-4.500-3.500l5.500-1.500l-1.500-5.500l5 2.500z" fill="#c9a040"/><circle cx="487" cy="978" r="6.500" fill="#3f6fc6"/><path d="M487 973.500a4.500 4.500 0 1 1-4.500 4.500a3 3 0 0 1 6 0a1.500 1.500 0 0 1-3 0" fill="none" stroke="#9fd4ff" stroke-width="1.400"/><path d="M548 964.500l3.600 9.500l9.900.300l-7.800 6.100l2.800 9.600l-8.500-5.600l-8.300 5.600l2.600-9.600l-7.800-6.100l9.900-.300z" fill="#d8141c"/><path d="M548 964.500l1 12l-7.400-2.500z" fill="#ff9a9a" opacity=".8"/><rect x="581" y="953" width="57" height="45" fill="#353535"/><rect x="637" y="953" width="5" height="45" fill="#161616"/><rect x="595.500" y="963" width="31" height="30" fill="#d6efef"/><path d="M599.500 987v-20h5.500l6 10l6-10h5.500v20h-5.300v-12l-4.700 8h-3l-4.700-8v12z" fill="#2aa5ad"/><path d="M599.500 987v-20h5.500v20z" fill="#148791"/><path d="M617 987v-12l5.500-8v20z" fill="#3fc0c4"/><text x="609" y="991.500" font-family="Liberation Sans,sans-serif" font-size="4.500" font-weight="bold" fill="#148791">MAYA</text><rect x="659" y="969" width="27.500" height="17.500" fill="#2e93e8"/><rect x="660.500" y="970.500" width="24.500" height="14.500" fill="#7cc4f8"/><circle cx="667.500" cy="976" r="3.600" fill="#f0e0a0"/><rect x="663" y="981" width="9" height="2.500" fill="#f0c040"/><path d="M674 973.500h9M674 977h9M674 980.500h9" stroke="#e8f6ff" stroke-width="1.600"/></svg>
<div class="t " style="left:1819px;top:959px;line-height:16px;color:#fff;z-index:10;font-size:14.5px">15:5</div>
<div class="t " style="left:1799.5px;top:982px;line-height:16px;color:#fff;z-index:10;font-size:14.5px">01/11/2</div>
</body></html>
